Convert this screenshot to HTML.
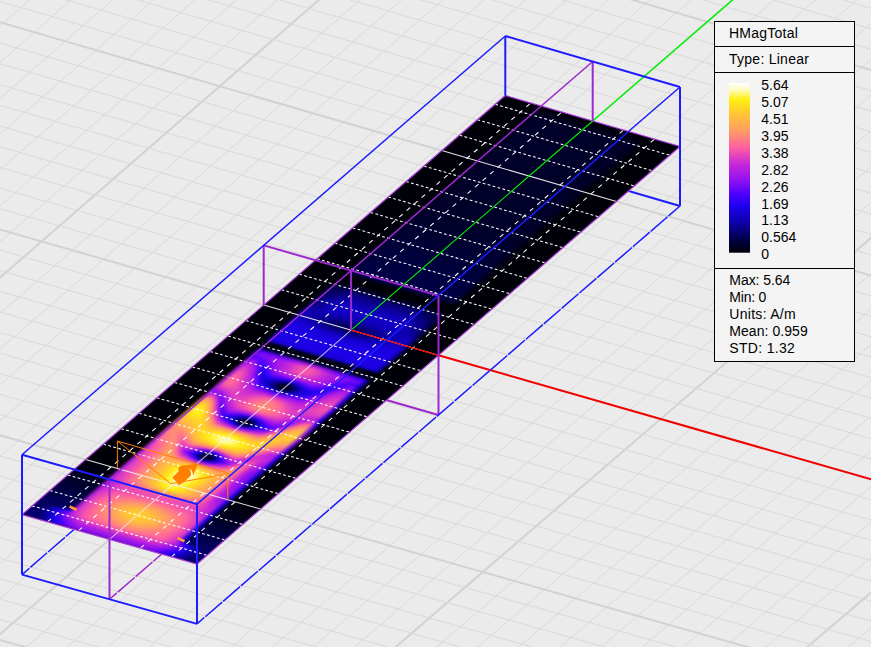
<!DOCTYPE html>
<html><head><meta charset="utf-8"><title>HMagTotal</title>
<style>
html,body{margin:0;padding:0;background:#ebebeb;}
body{width:871px;height:647px;overflow:hidden;font-family:"Liberation Sans",sans-serif;}
svg{display:block}
.t text{font-family:"Liberation Sans",sans-serif;font-size:14px;fill:#000;}
.gm{stroke:#d9d9d9;stroke-width:1}
.gM{stroke:#d2d2d2;stroke-width:2}
.bl{stroke:#1c1cff;stroke-width:2}
.pu{stroke:#9d28d0;stroke-width:2}
.tB{stroke-width:1.5}
.gr{stroke:#00f400;stroke-width:1.5}
.rd{stroke:#f40000;stroke-width:2}
.dx{stroke:#fff;stroke-width:1.05;stroke-dasharray:2.8 2.3}
.dy{stroke:#fff;stroke-width:1.05;stroke-dasharray:4.6 5.3}
.dM{stroke:#f0f0f0;stroke-width:1.05;opacity:.95}
</style></head><body>
<svg width="871" height="647" viewBox="0 0 871 647">
<defs>
<clipPath id="pc"><polygon points="22.0,514.7 197.0,564.0 680.0,146.5 505.3,95.5"/></clipPath>
<filter id="bl" x="-5%" y="-5%" width="110%" height="110%" color-interpolation-filters="sRGB"><feGaussianBlur stdDeviation="1.2"/></filter>
<linearGradient id="r0"><stop offset="0" stop-color="#06006c"/><stop offset="0.0682" stop-color="#06006c"/><stop offset="0.0909" stop-color="#060072"/><stop offset="0.114" stop-color="#0b0094"/><stop offset="0.136" stop-color="#0f00b9"/><stop offset="0.159" stop-color="#1700d5"/><stop offset="0.182" stop-color="#1f00ee"/><stop offset="0.205" stop-color="#3500f7"/><stop offset="0.227" stop-color="#4b00fd"/><stop offset="0.25" stop-color="#6505fa"/><stop offset="0.273" stop-color="#790af5"/><stop offset="0.295" stop-color="#880ef2"/><stop offset="0.318" stop-color="#8a0ff1"/><stop offset="0.341" stop-color="#8a0ff1"/><stop offset="0.364" stop-color="#8b0ff1"/><stop offset="0.432" stop-color="#8b0ff1"/><stop offset="0.455" stop-color="#8c0ff1"/><stop offset="0.568" stop-color="#8c0ff1"/><stop offset="0.591" stop-color="#8b0ff1"/><stop offset="0.659" stop-color="#8b0ff1"/><stop offset="0.682" stop-color="#8a0ff1"/><stop offset="0.705" stop-color="#8a0ff1"/><stop offset="0.727" stop-color="#840df3"/><stop offset="0.75" stop-color="#7309f7"/><stop offset="0.773" stop-color="#5c03fc"/><stop offset="0.795" stop-color="#4300fb"/><stop offset="0.818" stop-color="#2e00f4"/><stop offset="0.841" stop-color="#1d00e6"/><stop offset="0.864" stop-color="#1400cd"/><stop offset="0.886" stop-color="#0e00ad"/><stop offset="0.909" stop-color="#090088"/><stop offset="0.932" stop-color="#06006c"/><stop offset="1" stop-color="#06006c"/></linearGradient>
<linearGradient id="r1"><stop offset="0" stop-color="#05006b"/><stop offset="0.0682" stop-color="#05006b"/><stop offset="0.0909" stop-color="#08007f"/><stop offset="0.114" stop-color="#0d00a5"/><stop offset="0.136" stop-color="#1300ca"/><stop offset="0.159" stop-color="#1d00e7"/><stop offset="0.182" stop-color="#3500f6"/><stop offset="0.205" stop-color="#4e00ff"/><stop offset="0.227" stop-color="#6b07f9"/><stop offset="0.25" stop-color="#870ef2"/><stop offset="0.273" stop-color="#9813ed"/><stop offset="0.295" stop-color="#a218e8"/><stop offset="0.318" stop-color="#a419e7"/><stop offset="0.341" stop-color="#a419e7"/><stop offset="0.364" stop-color="#a519e7"/><stop offset="0.386" stop-color="#a519e7"/><stop offset="0.409" stop-color="#a619e7"/><stop offset="0.432" stop-color="#a61ae6"/><stop offset="0.455" stop-color="#a71ae6"/><stop offset="0.545" stop-color="#a71ae6"/><stop offset="0.568" stop-color="#a61ae6"/><stop offset="0.591" stop-color="#a619e7"/><stop offset="0.614" stop-color="#a619e7"/><stop offset="0.636" stop-color="#a519e7"/><stop offset="0.659" stop-color="#a519e7"/><stop offset="0.682" stop-color="#a419e7"/><stop offset="0.705" stop-color="#a418e8"/><stop offset="0.727" stop-color="#9f17e9"/><stop offset="0.75" stop-color="#9412ee"/><stop offset="0.773" stop-color="#7e0cf4"/><stop offset="0.795" stop-color="#6004fb"/><stop offset="0.818" stop-color="#4600fc"/><stop offset="0.841" stop-color="#2b00f3"/><stop offset="0.864" stop-color="#1a00dd"/><stop offset="0.886" stop-color="#1000c0"/><stop offset="0.909" stop-color="#0b0098"/><stop offset="0.932" stop-color="#060073"/><stop offset="0.955" stop-color="#05006b"/><stop offset="1" stop-color="#05006b"/></linearGradient>
<linearGradient id="r2"><stop offset="0" stop-color="#050069"/><stop offset="0.0455" stop-color="#050069"/><stop offset="0.0682" stop-color="#06006e"/><stop offset="0.0909" stop-color="#0a0093"/><stop offset="0.114" stop-color="#1000be"/><stop offset="0.136" stop-color="#1b00e0"/><stop offset="0.159" stop-color="#3400f6"/><stop offset="0.182" stop-color="#5802fd"/><stop offset="0.205" stop-color="#7c0bf5"/><stop offset="0.227" stop-color="#9813ed"/><stop offset="0.25" stop-color="#ad1ce4"/><stop offset="0.273" stop-color="#bb23dd"/><stop offset="0.295" stop-color="#c627d9"/><stop offset="0.318" stop-color="#c828d8"/><stop offset="0.341" stop-color="#c929d7"/><stop offset="0.364" stop-color="#ca2ad6"/><stop offset="0.386" stop-color="#cb2bd5"/><stop offset="0.409" stop-color="#cc2cd4"/><stop offset="0.432" stop-color="#cd2dd3"/><stop offset="0.455" stop-color="#ce2ed2"/><stop offset="0.477" stop-color="#ce2fd1"/><stop offset="0.5" stop-color="#cf2fd1"/><stop offset="0.523" stop-color="#cf2fd1"/><stop offset="0.545" stop-color="#ce2ed2"/><stop offset="0.568" stop-color="#ce2ed2"/><stop offset="0.591" stop-color="#cd2dd3"/><stop offset="0.614" stop-color="#cc2cd4"/><stop offset="0.636" stop-color="#cb2bd5"/><stop offset="0.659" stop-color="#ca2ad6"/><stop offset="0.682" stop-color="#c929d7"/><stop offset="0.705" stop-color="#c828d8"/><stop offset="0.727" stop-color="#c326da"/><stop offset="0.75" stop-color="#b721df"/><stop offset="0.773" stop-color="#a61ae6"/><stop offset="0.795" stop-color="#9010f0"/><stop offset="0.818" stop-color="#7008f7"/><stop offset="0.841" stop-color="#4b00fd"/><stop offset="0.864" stop-color="#2700f2"/><stop offset="0.886" stop-color="#1700d4"/><stop offset="0.909" stop-color="#0e00af"/><stop offset="0.932" stop-color="#090085"/><stop offset="0.955" stop-color="#050069"/><stop offset="1" stop-color="#050069"/></linearGradient>
<linearGradient id="r3"><stop offset="0" stop-color="#050066"/><stop offset="0.0455" stop-color="#050066"/><stop offset="0.0682" stop-color="#08007d"/><stop offset="0.0909" stop-color="#0d00a5"/><stop offset="0.114" stop-color="#1500cf"/><stop offset="0.136" stop-color="#2600f2"/><stop offset="0.159" stop-color="#5000ff"/><stop offset="0.182" stop-color="#7f0cf4"/><stop offset="0.205" stop-color="#a017e9"/><stop offset="0.227" stop-color="#b821df"/><stop offset="0.25" stop-color="#cf2fd1"/><stop offset="0.273" stop-color="#de3ec2"/><stop offset="0.295" stop-color="#e849b7"/><stop offset="0.318" stop-color="#ec4cb4"/><stop offset="0.341" stop-color="#ed4eb2"/><stop offset="0.364" stop-color="#f050b0"/><stop offset="0.386" stop-color="#f253ad"/><stop offset="0.409" stop-color="#f455ab"/><stop offset="0.432" stop-color="#f657a9"/><stop offset="0.455" stop-color="#f858a8"/><stop offset="0.477" stop-color="#f95aa6"/><stop offset="0.523" stop-color="#f95aa6"/><stop offset="0.545" stop-color="#f859a7"/><stop offset="0.568" stop-color="#f758a8"/><stop offset="0.591" stop-color="#f556aa"/><stop offset="0.614" stop-color="#f354ac"/><stop offset="0.636" stop-color="#f152ae"/><stop offset="0.659" stop-color="#ef50b0"/><stop offset="0.682" stop-color="#ed4db3"/><stop offset="0.705" stop-color="#eb4cb4"/><stop offset="0.727" stop-color="#e546ba"/><stop offset="0.75" stop-color="#d939c7"/><stop offset="0.773" stop-color="#c828d8"/><stop offset="0.795" stop-color="#b01ee2"/><stop offset="0.818" stop-color="#9713ed"/><stop offset="0.841" stop-color="#7008f8"/><stop offset="0.864" stop-color="#4200fb"/><stop offset="0.886" stop-color="#1d00e8"/><stop offset="0.909" stop-color="#1100c3"/><stop offset="0.932" stop-color="#0b0096"/><stop offset="0.955" stop-color="#060071"/><stop offset="0.977" stop-color="#050066"/><stop offset="1" stop-color="#050066"/></linearGradient>
<linearGradient id="r4"><stop offset="0" stop-color="#040062"/><stop offset="0.0455" stop-color="#040062"/><stop offset="0.0682" stop-color="#05006b"/><stop offset="0.0909" stop-color="#0a008f"/><stop offset="0.114" stop-color="#0f00b9"/><stop offset="0.136" stop-color="#1900dc"/><stop offset="0.159" stop-color="#2e00f4"/><stop offset="0.182" stop-color="#5000ff"/><stop offset="0.205" stop-color="#b21fe1"/><stop offset="0.227" stop-color="#cf2fd1"/><stop offset="0.25" stop-color="#e444bc"/><stop offset="0.273" stop-color="#f354ac"/><stop offset="0.295" stop-color="#ff60a0"/><stop offset="0.318" stop-color="#ff659b"/><stop offset="0.341" stop-color="#ff6997"/><stop offset="0.364" stop-color="#ff6d93"/><stop offset="0.386" stop-color="#ff718f"/><stop offset="0.409" stop-color="#ff758b"/><stop offset="0.432" stop-color="#ff7987"/><stop offset="0.455" stop-color="#ff7d83"/><stop offset="0.477" stop-color="#ff7f81"/><stop offset="0.5" stop-color="#ff8080"/><stop offset="0.523" stop-color="#ff8080"/><stop offset="0.545" stop-color="#ff7e82"/><stop offset="0.568" stop-color="#ff7c84"/><stop offset="0.591" stop-color="#ff7888"/><stop offset="0.614" stop-color="#ff748c"/><stop offset="0.636" stop-color="#ff7090"/><stop offset="0.659" stop-color="#ff6b95"/><stop offset="0.682" stop-color="#ff6799"/><stop offset="0.705" stop-color="#ff649c"/><stop offset="0.727" stop-color="#fc5da3"/><stop offset="0.75" stop-color="#ee4fb1"/><stop offset="0.773" stop-color="#dd3dc3"/><stop offset="0.795" stop-color="#c727d9"/><stop offset="0.818" stop-color="#9512ee"/><stop offset="0.841" stop-color="#4500fc"/><stop offset="0.864" stop-color="#2200f1"/><stop offset="0.886" stop-color="#1500d0"/><stop offset="0.909" stop-color="#0d00aa"/><stop offset="0.932" stop-color="#080082"/><stop offset="0.955" stop-color="#040062"/><stop offset="1" stop-color="#040062"/></linearGradient>
<linearGradient id="r5"><stop offset="0" stop-color="#04005d"/><stop offset="0.114" stop-color="#04005d"/><stop offset="0.136" stop-color="#050069"/><stop offset="0.159" stop-color="#080080"/><stop offset="0.182" stop-color="#0b0094"/><stop offset="0.205" stop-color="#b520e0"/><stop offset="0.227" stop-color="#d737c9"/><stop offset="0.25" stop-color="#e849b7"/><stop offset="0.273" stop-color="#f959a7"/><stop offset="0.295" stop-color="#ff6799"/><stop offset="0.318" stop-color="#ff6e92"/><stop offset="0.341" stop-color="#ff748c"/><stop offset="0.364" stop-color="#ff7b85"/><stop offset="0.386" stop-color="#ff827e"/><stop offset="0.409" stop-color="#ff8977"/><stop offset="0.432" stop-color="#ff8f71"/><stop offset="0.455" stop-color="#ff946c"/><stop offset="0.477" stop-color="#ff9868"/><stop offset="0.5" stop-color="#ff9967"/><stop offset="0.523" stop-color="#ff9967"/><stop offset="0.545" stop-color="#ff9769"/><stop offset="0.568" stop-color="#ff926e"/><stop offset="0.591" stop-color="#ff8d73"/><stop offset="0.614" stop-color="#ff867a"/><stop offset="0.636" stop-color="#ff7f81"/><stop offset="0.659" stop-color="#ff7888"/><stop offset="0.682" stop-color="#ff728e"/><stop offset="0.705" stop-color="#ff6c94"/><stop offset="0.727" stop-color="#ff639d"/><stop offset="0.75" stop-color="#f354ac"/><stop offset="0.773" stop-color="#e243bd"/><stop offset="0.795" stop-color="#d132ce"/><stop offset="0.818" stop-color="#5601fe"/><stop offset="0.841" stop-color="#0a008d"/><stop offset="0.864" stop-color="#070078"/><stop offset="0.886" stop-color="#040061"/><stop offset="0.909" stop-color="#04005d"/><stop offset="1" stop-color="#04005d"/></linearGradient>
<linearGradient id="r6"><stop offset="0" stop-color="#030058"/><stop offset="0.159" stop-color="#030058"/><stop offset="0.182" stop-color="#02004d"/><stop offset="0.205" stop-color="#b721df"/><stop offset="0.227" stop-color="#dd3dc3"/><stop offset="0.25" stop-color="#ec4cb4"/><stop offset="0.273" stop-color="#fd5ea2"/><stop offset="0.295" stop-color="#ff6e92"/><stop offset="0.318" stop-color="#ff7789"/><stop offset="0.341" stop-color="#ff8080"/><stop offset="0.364" stop-color="#ff8977"/><stop offset="0.386" stop-color="#ff936d"/><stop offset="0.409" stop-color="#ff9d63"/><stop offset="0.432" stop-color="#ffa45b"/><stop offset="0.455" stop-color="#ffa955"/><stop offset="0.477" stop-color="#ffad51"/><stop offset="0.5" stop-color="#ffae4f"/><stop offset="0.523" stop-color="#ffae4f"/><stop offset="0.545" stop-color="#ffac52"/><stop offset="0.568" stop-color="#ffa857"/><stop offset="0.591" stop-color="#ffa25d"/><stop offset="0.614" stop-color="#ff9a66"/><stop offset="0.636" stop-color="#ff9070"/><stop offset="0.659" stop-color="#ff867a"/><stop offset="0.682" stop-color="#ff7d83"/><stop offset="0.705" stop-color="#ff748c"/><stop offset="0.727" stop-color="#ff6997"/><stop offset="0.75" stop-color="#f758a8"/><stop offset="0.773" stop-color="#e646ba"/><stop offset="0.795" stop-color="#d93ac6"/><stop offset="0.818" stop-color="#2b00f3"/><stop offset="0.841" stop-color="#030058"/><stop offset="1" stop-color="#030058"/></linearGradient>
<linearGradient id="r7"><stop offset="0" stop-color="#020052"/><stop offset="0.159" stop-color="#020052"/><stop offset="0.182" stop-color="#010048"/><stop offset="0.205" stop-color="#b821df"/><stop offset="0.227" stop-color="#df3fc1"/><stop offset="0.25" stop-color="#ee4fb1"/><stop offset="0.273" stop-color="#ff629e"/><stop offset="0.295" stop-color="#ff748c"/><stop offset="0.318" stop-color="#ff7f81"/><stop offset="0.341" stop-color="#ff8a76"/><stop offset="0.364" stop-color="#ff9769"/><stop offset="0.386" stop-color="#ffa25d"/><stop offset="0.409" stop-color="#ffab53"/><stop offset="0.432" stop-color="#ffb349"/><stop offset="0.455" stop-color="#ffb941"/><stop offset="0.477" stop-color="#ffbe3c"/><stop offset="0.5" stop-color="#ffc039"/><stop offset="0.523" stop-color="#ffc03a"/><stop offset="0.545" stop-color="#ffbd3e"/><stop offset="0.568" stop-color="#ffb744"/><stop offset="0.591" stop-color="#ffb04c"/><stop offset="0.614" stop-color="#ffa856"/><stop offset="0.636" stop-color="#ff9f61"/><stop offset="0.659" stop-color="#ff926e"/><stop offset="0.682" stop-color="#ff867a"/><stop offset="0.705" stop-color="#ff7c84"/><stop offset="0.727" stop-color="#ff6f91"/><stop offset="0.75" stop-color="#fb5ca4"/><stop offset="0.773" stop-color="#e949b7"/><stop offset="0.795" stop-color="#db3cc4"/><stop offset="0.818" stop-color="#2800f3"/><stop offset="0.841" stop-color="#020052"/><stop offset="1" stop-color="#020052"/></linearGradient>
<linearGradient id="r8"><stop offset="0" stop-color="#01004c"/><stop offset="0.159" stop-color="#01004c"/><stop offset="0.182" stop-color="#000042"/><stop offset="0.205" stop-color="#b921df"/><stop offset="0.227" stop-color="#e041bf"/><stop offset="0.25" stop-color="#f051af"/><stop offset="0.273" stop-color="#ff659b"/><stop offset="0.295" stop-color="#ff7888"/><stop offset="0.318" stop-color="#ff857b"/><stop offset="0.341" stop-color="#ff926e"/><stop offset="0.364" stop-color="#ffa060"/><stop offset="0.386" stop-color="#ffaa54"/><stop offset="0.409" stop-color="#ffb448"/><stop offset="0.432" stop-color="#ffbd3e"/><stop offset="0.455" stop-color="#ffc435"/><stop offset="0.477" stop-color="#ffca2f"/><stop offset="0.5" stop-color="#ffcd2c"/><stop offset="0.523" stop-color="#ffcc2d"/><stop offset="0.545" stop-color="#ffc830"/><stop offset="0.568" stop-color="#ffc237"/><stop offset="0.591" stop-color="#ffba41"/><stop offset="0.614" stop-color="#ffb04c"/><stop offset="0.636" stop-color="#ffa658"/><stop offset="0.659" stop-color="#ff9b65"/><stop offset="0.682" stop-color="#ff8d73"/><stop offset="0.705" stop-color="#ff817f"/><stop offset="0.727" stop-color="#ff728e"/><stop offset="0.75" stop-color="#fd5ea2"/><stop offset="0.773" stop-color="#ea4bb5"/><stop offset="0.795" stop-color="#dd3dc3"/><stop offset="0.818" stop-color="#2900f3"/><stop offset="0.841" stop-color="#01004c"/><stop offset="1" stop-color="#01004c"/></linearGradient>
<linearGradient id="r9"><stop offset="0" stop-color="#010045"/><stop offset="0.159" stop-color="#010045"/><stop offset="0.182" stop-color="#00003d"/><stop offset="0.205" stop-color="#b922de"/><stop offset="0.227" stop-color="#e141bf"/><stop offset="0.25" stop-color="#f151af"/><stop offset="0.273" stop-color="#ff669a"/><stop offset="0.295" stop-color="#ff7987"/><stop offset="0.318" stop-color="#ff867a"/><stop offset="0.341" stop-color="#ff936d"/><stop offset="0.364" stop-color="#ffa15f"/><stop offset="0.386" stop-color="#ffab53"/><stop offset="0.409" stop-color="#ffb547"/><stop offset="0.432" stop-color="#ffbe3c"/><stop offset="0.455" stop-color="#ffc632"/><stop offset="0.477" stop-color="#ffcc2d"/><stop offset="0.5" stop-color="#ffcf2a"/><stop offset="0.523" stop-color="#ffcf2b"/><stop offset="0.545" stop-color="#ffca2e"/><stop offset="0.568" stop-color="#ffc435"/><stop offset="0.591" stop-color="#ffbb3f"/><stop offset="0.614" stop-color="#ffb24b"/><stop offset="0.636" stop-color="#ffa857"/><stop offset="0.659" stop-color="#ff9c64"/><stop offset="0.682" stop-color="#ff8e72"/><stop offset="0.705" stop-color="#ff827e"/><stop offset="0.727" stop-color="#ff738d"/><stop offset="0.75" stop-color="#fe5fa1"/><stop offset="0.773" stop-color="#eb4bb5"/><stop offset="0.795" stop-color="#dd3dc3"/><stop offset="0.818" stop-color="#2900f3"/><stop offset="0.841" stop-color="#010045"/><stop offset="1" stop-color="#010045"/></linearGradient>
<linearGradient id="r10"><stop offset="0" stop-color="#00003f"/><stop offset="0.159" stop-color="#00003f"/><stop offset="0.182" stop-color="#000038"/><stop offset="0.205" stop-color="#b821df"/><stop offset="0.227" stop-color="#e040c0"/><stop offset="0.25" stop-color="#ef50b0"/><stop offset="0.273" stop-color="#ff649c"/><stop offset="0.295" stop-color="#ff768a"/><stop offset="0.318" stop-color="#ff827e"/><stop offset="0.341" stop-color="#ff8e72"/><stop offset="0.364" stop-color="#ff9b65"/><stop offset="0.386" stop-color="#ffa659"/><stop offset="0.409" stop-color="#ffaf4e"/><stop offset="0.432" stop-color="#ffb844"/><stop offset="0.455" stop-color="#ffbf3b"/><stop offset="0.477" stop-color="#ffc336"/><stop offset="0.5" stop-color="#ffc633"/><stop offset="0.523" stop-color="#ffc533"/><stop offset="0.545" stop-color="#ffc237"/><stop offset="0.568" stop-color="#ffbc3e"/><stop offset="0.591" stop-color="#ffb547"/><stop offset="0.614" stop-color="#ffac52"/><stop offset="0.636" stop-color="#ffa35d"/><stop offset="0.659" stop-color="#ff966a"/><stop offset="0.682" stop-color="#ff8a76"/><stop offset="0.705" stop-color="#ff7e82"/><stop offset="0.727" stop-color="#ff7090"/><stop offset="0.75" stop-color="#fc5da3"/><stop offset="0.773" stop-color="#e94ab6"/><stop offset="0.795" stop-color="#dc3cc4"/><stop offset="0.818" stop-color="#2800f3"/><stop offset="0.841" stop-color="#00003f"/><stop offset="1" stop-color="#00003f"/></linearGradient>
<linearGradient id="r11"><stop offset="0" stop-color="#000039"/><stop offset="0.159" stop-color="#000039"/><stop offset="0.182" stop-color="#000033"/><stop offset="0.205" stop-color="#b721df"/><stop offset="0.227" stop-color="#dd3ec2"/><stop offset="0.25" stop-color="#ec4db3"/><stop offset="0.273" stop-color="#fe5fa1"/><stop offset="0.295" stop-color="#ff7090"/><stop offset="0.318" stop-color="#ff7a86"/><stop offset="0.341" stop-color="#ff847c"/><stop offset="0.364" stop-color="#ff8e72"/><stop offset="0.386" stop-color="#ff9a66"/><stop offset="0.409" stop-color="#ffa35c"/><stop offset="0.432" stop-color="#ffaa54"/><stop offset="0.455" stop-color="#ffb04d"/><stop offset="0.477" stop-color="#ffb448"/><stop offset="0.5" stop-color="#ffb646"/><stop offset="0.523" stop-color="#ffb547"/><stop offset="0.545" stop-color="#ffb34a"/><stop offset="0.568" stop-color="#ffae4f"/><stop offset="0.591" stop-color="#ffa857"/><stop offset="0.614" stop-color="#ffa15f"/><stop offset="0.636" stop-color="#ff966a"/><stop offset="0.659" stop-color="#ff8b75"/><stop offset="0.682" stop-color="#ff8080"/><stop offset="0.705" stop-color="#ff7789"/><stop offset="0.727" stop-color="#ff6b95"/><stop offset="0.75" stop-color="#f859a7"/><stop offset="0.773" stop-color="#e747b9"/><stop offset="0.795" stop-color="#da3ac6"/><stop offset="0.818" stop-color="#2700f2"/><stop offset="0.841" stop-color="#000039"/><stop offset="1" stop-color="#000039"/></linearGradient>
<linearGradient id="r12"><stop offset="0" stop-color="#000033"/><stop offset="0.159" stop-color="#000033"/><stop offset="0.182" stop-color="#00002e"/><stop offset="0.205" stop-color="#b420e0"/><stop offset="0.227" stop-color="#da3ac6"/><stop offset="0.25" stop-color="#e848b8"/><stop offset="0.273" stop-color="#f859a7"/><stop offset="0.295" stop-color="#ff6898"/><stop offset="0.318" stop-color="#ff6f91"/><stop offset="0.341" stop-color="#ff768a"/><stop offset="0.364" stop-color="#ff7e82"/><stop offset="0.386" stop-color="#ff867a"/><stop offset="0.409" stop-color="#ff8e72"/><stop offset="0.432" stop-color="#ff966a"/><stop offset="0.455" stop-color="#ff9c64"/><stop offset="0.477" stop-color="#ffa060"/><stop offset="0.5" stop-color="#ffa15e"/><stop offset="0.523" stop-color="#ffa15f"/><stop offset="0.545" stop-color="#ff9f61"/><stop offset="0.568" stop-color="#ff9a66"/><stop offset="0.591" stop-color="#ff936d"/><stop offset="0.614" stop-color="#ff8c74"/><stop offset="0.636" stop-color="#ff847c"/><stop offset="0.659" stop-color="#ff7c84"/><stop offset="0.682" stop-color="#ff748c"/><stop offset="0.705" stop-color="#ff6d93"/><stop offset="0.727" stop-color="#ff639d"/><stop offset="0.75" stop-color="#f353ad"/><stop offset="0.773" stop-color="#e243bd"/><stop offset="0.795" stop-color="#d737c9"/><stop offset="0.818" stop-color="#2500f2"/><stop offset="0.841" stop-color="#000033"/><stop offset="1" stop-color="#000033"/></linearGradient>
<linearGradient id="r13"><stop offset="0" stop-color="#00002d"/><stop offset="0.159" stop-color="#00002d"/><stop offset="0.182" stop-color="#000029"/><stop offset="0.205" stop-color="#af1de3"/><stop offset="0.227" stop-color="#d333cd"/><stop offset="0.25" stop-color="#e041bf"/><stop offset="0.273" stop-color="#f050b0"/><stop offset="0.295" stop-color="#fc5da3"/><stop offset="0.318" stop-color="#ff629e"/><stop offset="0.341" stop-color="#ff6799"/><stop offset="0.364" stop-color="#ff6c94"/><stop offset="0.386" stop-color="#ff718f"/><stop offset="0.409" stop-color="#ff768a"/><stop offset="0.432" stop-color="#ff7b85"/><stop offset="0.455" stop-color="#ff7f81"/><stop offset="0.477" stop-color="#ff827e"/><stop offset="0.5" stop-color="#ff837d"/><stop offset="0.523" stop-color="#ff837d"/><stop offset="0.545" stop-color="#ff817f"/><stop offset="0.568" stop-color="#ff7e82"/><stop offset="0.591" stop-color="#ff7a86"/><stop offset="0.614" stop-color="#ff758b"/><stop offset="0.636" stop-color="#ff6f91"/><stop offset="0.659" stop-color="#ff6a96"/><stop offset="0.682" stop-color="#ff659b"/><stop offset="0.705" stop-color="#ff619f"/><stop offset="0.727" stop-color="#f859a7"/><stop offset="0.75" stop-color="#ea4bb5"/><stop offset="0.773" stop-color="#db3cc4"/><stop offset="0.795" stop-color="#d030d0"/><stop offset="0.818" stop-color="#2200f1"/><stop offset="0.841" stop-color="#00002d"/><stop offset="1" stop-color="#00002d"/></linearGradient>
<linearGradient id="r14"><stop offset="0" stop-color="#000028"/><stop offset="0.159" stop-color="#000028"/><stop offset="0.182" stop-color="#000024"/><stop offset="0.205" stop-color="#a71ae6"/><stop offset="0.227" stop-color="#ca2ad6"/><stop offset="0.25" stop-color="#d636ca"/><stop offset="0.273" stop-color="#e445bb"/><stop offset="0.295" stop-color="#f050b0"/><stop offset="0.318" stop-color="#f354ac"/><stop offset="0.341" stop-color="#f656aa"/><stop offset="0.364" stop-color="#f859a7"/><stop offset="0.386" stop-color="#fb5ca4"/><stop offset="0.409" stop-color="#fe5fa1"/><stop offset="0.432" stop-color="#ff629e"/><stop offset="0.455" stop-color="#ff649c"/><stop offset="0.477" stop-color="#ff669a"/><stop offset="0.523" stop-color="#ff669a"/><stop offset="0.545" stop-color="#ff659b"/><stop offset="0.568" stop-color="#ff639d"/><stop offset="0.591" stop-color="#ff619f"/><stop offset="0.614" stop-color="#fd5ea2"/><stop offset="0.636" stop-color="#fa5ba5"/><stop offset="0.659" stop-color="#f758a8"/><stop offset="0.682" stop-color="#f556aa"/><stop offset="0.705" stop-color="#f253ad"/><stop offset="0.727" stop-color="#ec4db3"/><stop offset="0.75" stop-color="#e040c0"/><stop offset="0.773" stop-color="#d131cf"/><stop offset="0.795" stop-color="#c728d8"/><stop offset="0.818" stop-color="#1f00ec"/><stop offset="0.841" stop-color="#000028"/><stop offset="1" stop-color="#000028"/></linearGradient>
<linearGradient id="r15"><stop offset="0" stop-color="#000022"/><stop offset="0.159" stop-color="#000022"/><stop offset="0.182" stop-color="#00001f"/><stop offset="0.205" stop-color="#a017e9"/><stop offset="0.227" stop-color="#c225db"/><stop offset="0.25" stop-color="#ce2ed2"/><stop offset="0.273" stop-color="#db3cc4"/><stop offset="0.295" stop-color="#e646ba"/><stop offset="0.318" stop-color="#e849b7"/><stop offset="0.341" stop-color="#ea4ab6"/><stop offset="0.364" stop-color="#eb4cb4"/><stop offset="0.386" stop-color="#ec4db3"/><stop offset="0.409" stop-color="#ee4fb1"/><stop offset="0.432" stop-color="#ef50b0"/><stop offset="0.455" stop-color="#f051af"/><stop offset="0.477" stop-color="#f152ae"/><stop offset="0.545" stop-color="#f152ae"/><stop offset="0.568" stop-color="#f051af"/><stop offset="0.591" stop-color="#ef4fb1"/><stop offset="0.614" stop-color="#ed4eb2"/><stop offset="0.636" stop-color="#ec4db3"/><stop offset="0.659" stop-color="#ea4bb5"/><stop offset="0.682" stop-color="#e94ab6"/><stop offset="0.705" stop-color="#e848b8"/><stop offset="0.727" stop-color="#e343bd"/><stop offset="0.75" stop-color="#d737c9"/><stop offset="0.773" stop-color="#c929d7"/><stop offset="0.795" stop-color="#bf24dc"/><stop offset="0.818" stop-color="#1d00e8"/><stop offset="0.841" stop-color="#000022"/><stop offset="1" stop-color="#000022"/></linearGradient>
<linearGradient id="r16"><stop offset="0" stop-color="#00001d"/><stop offset="0.159" stop-color="#00001d"/><stop offset="0.182" stop-color="#00001b"/><stop offset="0.205" stop-color="#a117e9"/><stop offset="0.227" stop-color="#c225db"/><stop offset="0.25" stop-color="#ce2ed2"/><stop offset="0.273" stop-color="#db3bc5"/><stop offset="0.295" stop-color="#e546ba"/><stop offset="0.318" stop-color="#e849b7"/><stop offset="0.341" stop-color="#e94ab6"/><stop offset="0.364" stop-color="#eb4bb5"/><stop offset="0.386" stop-color="#ec4db3"/><stop offset="0.409" stop-color="#ed4eb2"/><stop offset="0.432" stop-color="#ef4fb1"/><stop offset="0.455" stop-color="#f051af"/><stop offset="0.477" stop-color="#f151af"/><stop offset="0.5" stop-color="#f152ae"/><stop offset="0.523" stop-color="#f152ae"/><stop offset="0.545" stop-color="#f051af"/><stop offset="0.568" stop-color="#ef50b0"/><stop offset="0.591" stop-color="#ee4fb1"/><stop offset="0.614" stop-color="#ed4eb2"/><stop offset="0.636" stop-color="#ec4cb4"/><stop offset="0.659" stop-color="#ea4bb5"/><stop offset="0.682" stop-color="#e949b7"/><stop offset="0.705" stop-color="#e748b8"/><stop offset="0.727" stop-color="#e242be"/><stop offset="0.75" stop-color="#d535cb"/><stop offset="0.773" stop-color="#c728d8"/><stop offset="0.795" stop-color="#bd23dd"/><stop offset="0.818" stop-color="#1d00e7"/><stop offset="0.841" stop-color="#00001d"/><stop offset="1" stop-color="#00001d"/></linearGradient>
<linearGradient id="r17"><stop offset="0" stop-color="#000019"/><stop offset="0.159" stop-color="#000019"/><stop offset="0.182" stop-color="#000017"/><stop offset="0.205" stop-color="#ad1ce4"/><stop offset="0.227" stop-color="#cd2dd3"/><stop offset="0.25" stop-color="#d838c8"/><stop offset="0.273" stop-color="#e747b9"/><stop offset="0.295" stop-color="#f455ab"/><stop offset="0.318" stop-color="#fb5ca4"/><stop offset="0.341" stop-color="#ff619f"/><stop offset="0.364" stop-color="#ff6799"/><stop offset="0.386" stop-color="#ff6d93"/><stop offset="0.409" stop-color="#ff738d"/><stop offset="0.432" stop-color="#ff7987"/><stop offset="0.455" stop-color="#ff7f81"/><stop offset="0.477" stop-color="#ff847c"/><stop offset="0.5" stop-color="#ff867a"/><stop offset="0.523" stop-color="#ff857b"/><stop offset="0.545" stop-color="#ff827e"/><stop offset="0.568" stop-color="#ff7d83"/><stop offset="0.591" stop-color="#ff7789"/><stop offset="0.614" stop-color="#ff718f"/><stop offset="0.636" stop-color="#ff6b95"/><stop offset="0.659" stop-color="#ff649c"/><stop offset="0.682" stop-color="#fc5da3"/><stop offset="0.705" stop-color="#f455ab"/><stop offset="0.727" stop-color="#e748b8"/><stop offset="0.75" stop-color="#d535cb"/><stop offset="0.773" stop-color="#c326da"/><stop offset="0.795" stop-color="#b922de"/><stop offset="0.818" stop-color="#1d00e7"/><stop offset="0.841" stop-color="#000019"/><stop offset="1" stop-color="#000019"/></linearGradient>
<linearGradient id="r18"><stop offset="0" stop-color="#000014"/><stop offset="0.159" stop-color="#000014"/><stop offset="0.182" stop-color="#000013"/><stop offset="0.205" stop-color="#b821df"/><stop offset="0.227" stop-color="#d737c9"/><stop offset="0.25" stop-color="#e141bf"/><stop offset="0.273" stop-color="#f253ad"/><stop offset="0.295" stop-color="#ff659b"/><stop offset="0.318" stop-color="#ff738d"/><stop offset="0.341" stop-color="#ff7f81"/><stop offset="0.364" stop-color="#ff8b75"/><stop offset="0.386" stop-color="#ff9868"/><stop offset="0.409" stop-color="#ffa45b"/><stop offset="0.432" stop-color="#ffad50"/><stop offset="0.455" stop-color="#ffb646"/><stop offset="0.477" stop-color="#ffbd3d"/><stop offset="0.5" stop-color="#ffc039"/><stop offset="0.523" stop-color="#ffbf3a"/><stop offset="0.545" stop-color="#ffbb40"/><stop offset="0.568" stop-color="#ffb349"/><stop offset="0.591" stop-color="#ffaa54"/><stop offset="0.614" stop-color="#ffa15f"/><stop offset="0.636" stop-color="#ff936d"/><stop offset="0.659" stop-color="#ff867a"/><stop offset="0.682" stop-color="#ff768a"/><stop offset="0.705" stop-color="#ff639d"/><stop offset="0.727" stop-color="#ea4bb5"/><stop offset="0.75" stop-color="#ce2ed2"/><stop offset="0.773" stop-color="#b620e0"/><stop offset="0.795" stop-color="#ad1ce4"/><stop offset="0.818" stop-color="#1c00e4"/><stop offset="0.841" stop-color="#000014"/><stop offset="1" stop-color="#000014"/></linearGradient>
<linearGradient id="r19"><stop offset="0" stop-color="#000010"/><stop offset="0.159" stop-color="#000010"/><stop offset="0.182" stop-color="#00000f"/><stop offset="0.205" stop-color="#be24dc"/><stop offset="0.227" stop-color="#dc3cc4"/><stop offset="0.25" stop-color="#e646ba"/><stop offset="0.273" stop-color="#f859a7"/><stop offset="0.295" stop-color="#ff6f91"/><stop offset="0.318" stop-color="#ff837d"/><stop offset="0.341" stop-color="#ff956b"/><stop offset="0.364" stop-color="#ffa45b"/><stop offset="0.386" stop-color="#ffb14c"/><stop offset="0.409" stop-color="#ffbe3c"/><stop offset="0.432" stop-color="#ffcc2c"/><stop offset="0.455" stop-color="#ffdc20"/><stop offset="0.477" stop-color="#ffe916"/><stop offset="0.5" stop-color="#ffef11"/><stop offset="0.523" stop-color="#ffed12"/><stop offset="0.545" stop-color="#ffe519"/><stop offset="0.568" stop-color="#ffd724"/><stop offset="0.591" stop-color="#ffc731"/><stop offset="0.614" stop-color="#ffb942"/><stop offset="0.636" stop-color="#ffac52"/><stop offset="0.659" stop-color="#ff9d63"/><stop offset="0.682" stop-color="#ff8878"/><stop offset="0.705" stop-color="#ff6c94"/><stop offset="0.727" stop-color="#e94ab6"/><stop offset="0.75" stop-color="#c527d9"/><stop offset="0.773" stop-color="#a71ae6"/><stop offset="0.795" stop-color="#9e16ea"/><stop offset="0.818" stop-color="#1a00de"/><stop offset="0.841" stop-color="#000010"/><stop offset="1" stop-color="#000010"/></linearGradient>
<linearGradient id="r20"><stop offset="0" stop-color="#00000d"/><stop offset="0.182" stop-color="#00000d"/><stop offset="0.205" stop-color="#c125db"/><stop offset="0.227" stop-color="#de3fc1"/><stop offset="0.25" stop-color="#e849b7"/><stop offset="0.273" stop-color="#fb5ca4"/><stop offset="0.295" stop-color="#ff738d"/><stop offset="0.318" stop-color="#ff8878"/><stop offset="0.341" stop-color="#ff9b65"/><stop offset="0.364" stop-color="#ffa955"/><stop offset="0.386" stop-color="#ffb745"/><stop offset="0.409" stop-color="#ffc533"/><stop offset="0.432" stop-color="#ffd724"/><stop offset="0.455" stop-color="#ffe916"/><stop offset="0.477" stop-color="#fff234"/><stop offset="0.5" stop-color="#fff55d"/><stop offset="0.523" stop-color="#fff454"/><stop offset="0.545" stop-color="#fff11d"/><stop offset="0.568" stop-color="#ffe31a"/><stop offset="0.591" stop-color="#ffd129"/><stop offset="0.614" stop-color="#ffc039"/><stop offset="0.636" stop-color="#ffb24b"/><stop offset="0.659" stop-color="#ffa35c"/><stop offset="0.682" stop-color="#ff8d73"/><stop offset="0.705" stop-color="#ff6f91"/><stop offset="0.727" stop-color="#e94ab6"/><stop offset="0.75" stop-color="#c226da"/><stop offset="0.773" stop-color="#a318e8"/><stop offset="0.795" stop-color="#9914ec"/><stop offset="0.818" stop-color="#1900dc"/><stop offset="0.841" stop-color="#00000d"/><stop offset="1" stop-color="#00000d"/></linearGradient>
<linearGradient id="r21"><stop offset="0" stop-color="#00000b"/><stop offset="0.159" stop-color="#00000b"/><stop offset="0.182" stop-color="#00000a"/><stop offset="0.205" stop-color="#c326da"/><stop offset="0.227" stop-color="#e041bf"/><stop offset="0.25" stop-color="#ea4bb5"/><stop offset="0.273" stop-color="#fe5fa1"/><stop offset="0.295" stop-color="#ff768a"/><stop offset="0.318" stop-color="#ff8b75"/><stop offset="0.341" stop-color="#ff9e62"/><stop offset="0.364" stop-color="#ffac52"/><stop offset="0.386" stop-color="#ffba41"/><stop offset="0.409" stop-color="#ffc92f"/><stop offset="0.432" stop-color="#ffdd1f"/><stop offset="0.455" stop-color="#ffef11"/><stop offset="0.477" stop-color="#fff55e"/><stop offset="0.5" stop-color="#fff889"/><stop offset="0.523" stop-color="#fff780"/><stop offset="0.545" stop-color="#fff346"/><stop offset="0.568" stop-color="#ffe915"/><stop offset="0.591" stop-color="#ffd625"/><stop offset="0.614" stop-color="#ffc435"/><stop offset="0.636" stop-color="#ffb547"/><stop offset="0.659" stop-color="#ffa559"/><stop offset="0.682" stop-color="#ff9070"/><stop offset="0.705" stop-color="#ff718f"/><stop offset="0.727" stop-color="#ea4bb5"/><stop offset="0.75" stop-color="#c225db"/><stop offset="0.773" stop-color="#a218e8"/><stop offset="0.795" stop-color="#9713ed"/><stop offset="0.818" stop-color="#1900db"/><stop offset="0.841" stop-color="#00000b"/><stop offset="1" stop-color="#00000b"/></linearGradient>
<linearGradient id="r22"><stop offset="0" stop-color="#000009"/><stop offset="0.182" stop-color="#000009"/><stop offset="0.205" stop-color="#c527d9"/><stop offset="0.227" stop-color="#e343bd"/><stop offset="0.25" stop-color="#ec4db3"/><stop offset="0.273" stop-color="#ff619f"/><stop offset="0.295" stop-color="#ff7987"/><stop offset="0.318" stop-color="#ff8e72"/><stop offset="0.341" stop-color="#ffa15e"/><stop offset="0.364" stop-color="#ffaf4e"/><stop offset="0.386" stop-color="#ffbd3d"/><stop offset="0.409" stop-color="#ffce2b"/><stop offset="0.432" stop-color="#ffe21b"/><stop offset="0.455" stop-color="#fff231"/><stop offset="0.477" stop-color="#fff889"/><stop offset="0.5" stop-color="#fffab4"/><stop offset="0.523" stop-color="#fffaab"/><stop offset="0.545" stop-color="#fff66f"/><stop offset="0.568" stop-color="#ffef11"/><stop offset="0.591" stop-color="#ffdc20"/><stop offset="0.614" stop-color="#ffc731"/><stop offset="0.636" stop-color="#ffb843"/><stop offset="0.659" stop-color="#ffa856"/><stop offset="0.682" stop-color="#ff936d"/><stop offset="0.705" stop-color="#ff738d"/><stop offset="0.727" stop-color="#eb4bb5"/><stop offset="0.75" stop-color="#c125db"/><stop offset="0.773" stop-color="#a017e9"/><stop offset="0.795" stop-color="#9512ee"/><stop offset="0.818" stop-color="#1900da"/><stop offset="0.841" stop-color="#000009"/><stop offset="1" stop-color="#000009"/></linearGradient>
<linearGradient id="r23"><stop offset="0" stop-color="#000008"/><stop offset="0.182" stop-color="#000008"/><stop offset="0.205" stop-color="#c727d9"/><stop offset="0.227" stop-color="#e545bb"/><stop offset="0.25" stop-color="#ef4fb1"/><stop offset="0.273" stop-color="#ff649c"/><stop offset="0.295" stop-color="#ff7c84"/><stop offset="0.318" stop-color="#ff926e"/><stop offset="0.341" stop-color="#ffa45c"/><stop offset="0.364" stop-color="#ffb24b"/><stop offset="0.386" stop-color="#ffc139"/><stop offset="0.409" stop-color="#ffd327"/><stop offset="0.432" stop-color="#ffe816"/><stop offset="0.455" stop-color="#fff457"/><stop offset="0.477" stop-color="#fffab2"/><stop offset="0.5" stop-color="#fffcd0"/><stop offset="0.523" stop-color="#fffccb"/><stop offset="0.545" stop-color="#fff897"/><stop offset="0.568" stop-color="#fff230"/><stop offset="0.591" stop-color="#ffe11c"/><stop offset="0.614" stop-color="#ffcc2d"/><stop offset="0.636" stop-color="#ffbb40"/><stop offset="0.659" stop-color="#ffab53"/><stop offset="0.682" stop-color="#ff966a"/><stop offset="0.705" stop-color="#ff758b"/><stop offset="0.727" stop-color="#ec4cb4"/><stop offset="0.75" stop-color="#c125db"/><stop offset="0.773" stop-color="#9e16ea"/><stop offset="0.795" stop-color="#9311ef"/><stop offset="0.818" stop-color="#1800d9"/><stop offset="0.841" stop-color="#000008"/><stop offset="1" stop-color="#000008"/></linearGradient>
<linearGradient id="r24"><stop offset="0" stop-color="#000008"/><stop offset="0.182" stop-color="#000008"/><stop offset="0.205" stop-color="#c929d7"/><stop offset="0.227" stop-color="#e747b9"/><stop offset="0.25" stop-color="#f152ae"/><stop offset="0.273" stop-color="#ff669a"/><stop offset="0.295" stop-color="#ff7e82"/><stop offset="0.318" stop-color="#ff956b"/><stop offset="0.341" stop-color="#ffa659"/><stop offset="0.364" stop-color="#ffb448"/><stop offset="0.386" stop-color="#ffc435"/><stop offset="0.409" stop-color="#ffd724"/><stop offset="0.432" stop-color="#ffed12"/><stop offset="0.455" stop-color="#fff77a"/><stop offset="0.477" stop-color="#fffccd"/><stop offset="0.5" stop-color="#fffde5"/><stop offset="0.523" stop-color="#fffde0"/><stop offset="0.545" stop-color="#fffbbd"/><stop offset="0.568" stop-color="#fff453"/><stop offset="0.591" stop-color="#ffe618"/><stop offset="0.614" stop-color="#ffd02a"/><stop offset="0.636" stop-color="#ffbe3c"/><stop offset="0.659" stop-color="#ffad50"/><stop offset="0.682" stop-color="#ff9967"/><stop offset="0.705" stop-color="#ff7789"/><stop offset="0.727" stop-color="#ec4db3"/><stop offset="0.75" stop-color="#c025db"/><stop offset="0.773" stop-color="#9c15eb"/><stop offset="0.795" stop-color="#9110f0"/><stop offset="0.818" stop-color="#1800d8"/><stop offset="0.841" stop-color="#000008"/><stop offset="1" stop-color="#000008"/></linearGradient>
<linearGradient id="r25"><stop offset="0" stop-color="#000008"/><stop offset="0.182" stop-color="#000008"/><stop offset="0.205" stop-color="#cb2bd5"/><stop offset="0.227" stop-color="#e94ab6"/><stop offset="0.25" stop-color="#f354ac"/><stop offset="0.273" stop-color="#ff6997"/><stop offset="0.295" stop-color="#ff817f"/><stop offset="0.318" stop-color="#ff9868"/><stop offset="0.341" stop-color="#ffa956"/><stop offset="0.364" stop-color="#ffb745"/><stop offset="0.386" stop-color="#ffc534"/><stop offset="0.409" stop-color="#ffd724"/><stop offset="0.432" stop-color="#ffec13"/><stop offset="0.455" stop-color="#fff671"/><stop offset="0.477" stop-color="#fffbc6"/><stop offset="0.5" stop-color="#fffddd"/><stop offset="0.523" stop-color="#fffdd8"/><stop offset="0.545" stop-color="#fffab1"/><stop offset="0.568" stop-color="#fff44a"/><stop offset="0.591" stop-color="#ffe519"/><stop offset="0.614" stop-color="#ffd029"/><stop offset="0.636" stop-color="#ffbf3a"/><stop offset="0.659" stop-color="#ffb04d"/><stop offset="0.682" stop-color="#ff9c64"/><stop offset="0.705" stop-color="#ff7987"/><stop offset="0.727" stop-color="#ed4eb2"/><stop offset="0.75" stop-color="#bf24dc"/><stop offset="0.773" stop-color="#9b15eb"/><stop offset="0.795" stop-color="#8e10f0"/><stop offset="0.818" stop-color="#1800d7"/><stop offset="0.841" stop-color="#000008"/><stop offset="1" stop-color="#000008"/></linearGradient>
<linearGradient id="r26"><stop offset="0" stop-color="#000008"/><stop offset="0.182" stop-color="#000008"/><stop offset="0.205" stop-color="#cd2dd3"/><stop offset="0.227" stop-color="#eb4cb4"/><stop offset="0.25" stop-color="#f556aa"/><stop offset="0.273" stop-color="#ff6b95"/><stop offset="0.295" stop-color="#ff847c"/><stop offset="0.318" stop-color="#ff9b65"/><stop offset="0.341" stop-color="#ffab53"/><stop offset="0.364" stop-color="#ffb745"/><stop offset="0.386" stop-color="#ffc039"/><stop offset="0.409" stop-color="#ffcf2b"/><stop offset="0.432" stop-color="#ffe11c"/><stop offset="0.455" stop-color="#fff11d"/><stop offset="0.477" stop-color="#fff66c"/><stop offset="0.5" stop-color="#fff894"/><stop offset="0.523" stop-color="#fff88b"/><stop offset="0.545" stop-color="#fff454"/><stop offset="0.568" stop-color="#ffec13"/><stop offset="0.591" stop-color="#ffda21"/><stop offset="0.614" stop-color="#ffc830"/><stop offset="0.636" stop-color="#ffbc3f"/><stop offset="0.659" stop-color="#ffb14c"/><stop offset="0.682" stop-color="#ff9f61"/><stop offset="0.705" stop-color="#ff7b85"/><stop offset="0.727" stop-color="#ee4eb2"/><stop offset="0.75" stop-color="#bf24dc"/><stop offset="0.773" stop-color="#9914ec"/><stop offset="0.795" stop-color="#8b0ff1"/><stop offset="0.818" stop-color="#1700d6"/><stop offset="0.841" stop-color="#000008"/><stop offset="1" stop-color="#000008"/></linearGradient>
<linearGradient id="r27"><stop offset="0" stop-color="#000008"/><stop offset="0.182" stop-color="#000008"/><stop offset="0.205" stop-color="#ce2fd1"/><stop offset="0.227" stop-color="#ed4eb2"/><stop offset="0.25" stop-color="#f858a8"/><stop offset="0.273" stop-color="#ff6e92"/><stop offset="0.295" stop-color="#ff8779"/><stop offset="0.318" stop-color="#ff9e62"/><stop offset="0.341" stop-color="#ffac52"/><stop offset="0.364" stop-color="#ffb24b"/><stop offset="0.386" stop-color="#ffb448"/><stop offset="0.409" stop-color="#ffbc3f"/><stop offset="0.432" stop-color="#ffc632"/><stop offset="0.455" stop-color="#ffd228"/><stop offset="0.477" stop-color="#ffdb21"/><stop offset="0.5" stop-color="#ffdf1d"/><stop offset="0.523" stop-color="#ffde1e"/><stop offset="0.545" stop-color="#ffd823"/><stop offset="0.568" stop-color="#ffcd2c"/><stop offset="0.591" stop-color="#ffc238"/><stop offset="0.614" stop-color="#ffb745"/><stop offset="0.636" stop-color="#ffb04c"/><stop offset="0.659" stop-color="#ffad51"/><stop offset="0.682" stop-color="#ffa15f"/><stop offset="0.705" stop-color="#ff7d83"/><stop offset="0.727" stop-color="#ee4fb1"/><stop offset="0.75" stop-color="#be24dc"/><stop offset="0.773" stop-color="#9713ed"/><stop offset="0.795" stop-color="#880ef2"/><stop offset="0.818" stop-color="#1700d6"/><stop offset="0.841" stop-color="#000008"/><stop offset="1" stop-color="#000008"/></linearGradient>
<linearGradient id="r28"><stop offset="0" stop-color="#000008"/><stop offset="0.182" stop-color="#000008"/><stop offset="0.205" stop-color="#d031cf"/><stop offset="0.227" stop-color="#ef50b0"/><stop offset="0.25" stop-color="#fa5ba5"/><stop offset="0.273" stop-color="#ff7090"/><stop offset="0.295" stop-color="#ff8a76"/><stop offset="0.318" stop-color="#ffa15e"/><stop offset="0.341" stop-color="#ffa955"/><stop offset="0.364" stop-color="#ffa55a"/><stop offset="0.386" stop-color="#ff9a66"/><stop offset="0.409" stop-color="#ff9967"/><stop offset="0.432" stop-color="#ff9d63"/><stop offset="0.455" stop-color="#ff9f61"/><stop offset="0.477" stop-color="#ff9e62"/><stop offset="0.5" stop-color="#ff9c64"/><stop offset="0.545" stop-color="#ff9c64"/><stop offset="0.568" stop-color="#ff9b65"/><stop offset="0.591" stop-color="#ff9868"/><stop offset="0.614" stop-color="#ff936d"/><stop offset="0.636" stop-color="#ff9769"/><stop offset="0.659" stop-color="#ffa25e"/><stop offset="0.682" stop-color="#ff9f61"/><stop offset="0.705" stop-color="#ff817f"/><stop offset="0.727" stop-color="#ef50b0"/><stop offset="0.75" stop-color="#bd23dd"/><stop offset="0.773" stop-color="#9512ee"/><stop offset="0.795" stop-color="#850df3"/><stop offset="0.818" stop-color="#1700d5"/><stop offset="0.841" stop-color="#000008"/><stop offset="1" stop-color="#000008"/></linearGradient>
<linearGradient id="r29"><stop offset="0" stop-color="#000008"/><stop offset="0.182" stop-color="#000008"/><stop offset="0.205" stop-color="#d233cd"/><stop offset="0.227" stop-color="#f152ae"/><stop offset="0.25" stop-color="#fc5da3"/><stop offset="0.273" stop-color="#ff738d"/><stop offset="0.295" stop-color="#ff8f71"/><stop offset="0.318" stop-color="#ffa25e"/><stop offset="0.341" stop-color="#ffa15f"/><stop offset="0.364" stop-color="#ff8878"/><stop offset="0.386" stop-color="#ff659b"/><stop offset="0.409" stop-color="#f455ab"/><stop offset="0.432" stop-color="#e545bb"/><stop offset="0.455" stop-color="#d030d0"/><stop offset="0.477" stop-color="#b721df"/><stop offset="0.5" stop-color="#a519e7"/><stop offset="0.523" stop-color="#a619e7"/><stop offset="0.545" stop-color="#b821df"/><stop offset="0.568" stop-color="#d030d0"/><stop offset="0.591" stop-color="#e444bc"/><stop offset="0.614" stop-color="#f051af"/><stop offset="0.636" stop-color="#ff659b"/><stop offset="0.659" stop-color="#ff857b"/><stop offset="0.682" stop-color="#ff956b"/><stop offset="0.705" stop-color="#ff847c"/><stop offset="0.727" stop-color="#f253ad"/><stop offset="0.75" stop-color="#bd23dd"/><stop offset="0.773" stop-color="#9412ee"/><stop offset="0.795" stop-color="#820cf3"/><stop offset="0.818" stop-color="#1700d4"/><stop offset="0.841" stop-color="#000008"/><stop offset="1" stop-color="#000008"/></linearGradient>
<linearGradient id="r30"><stop offset="0" stop-color="#000008"/><stop offset="0.182" stop-color="#000008"/><stop offset="0.205" stop-color="#d434cc"/><stop offset="0.227" stop-color="#f454ac"/><stop offset="0.25" stop-color="#fe5fa1"/><stop offset="0.273" stop-color="#ff7a86"/><stop offset="0.295" stop-color="#ff946c"/><stop offset="0.318" stop-color="#ff9e62"/><stop offset="0.341" stop-color="#ff8a76"/><stop offset="0.364" stop-color="#fb5ca4"/><stop offset="0.386" stop-color="#cc2cd4"/><stop offset="0.409" stop-color="#ac1ce4"/><stop offset="0.432" stop-color="#830df3"/><stop offset="0.455" stop-color="#3e00f9"/><stop offset="0.477" stop-color="#1500ce"/><stop offset="0.5" stop-color="#0b009b"/><stop offset="0.523" stop-color="#0c009f"/><stop offset="0.545" stop-color="#1700d4"/><stop offset="0.568" stop-color="#4400fb"/><stop offset="0.591" stop-color="#870ef2"/><stop offset="0.614" stop-color="#ab1ce4"/><stop offset="0.636" stop-color="#cc2dd3"/><stop offset="0.659" stop-color="#fa5ba5"/><stop offset="0.682" stop-color="#ff8080"/><stop offset="0.705" stop-color="#ff8080"/><stop offset="0.727" stop-color="#fa5ba5"/><stop offset="0.75" stop-color="#c024dc"/><stop offset="0.773" stop-color="#9211ef"/><stop offset="0.795" stop-color="#7f0cf4"/><stop offset="0.818" stop-color="#1600d3"/><stop offset="0.841" stop-color="#000008"/><stop offset="1" stop-color="#000008"/></linearGradient>
<linearGradient id="r31"><stop offset="0" stop-color="#000008"/><stop offset="0.182" stop-color="#000008"/><stop offset="0.205" stop-color="#db3bc5"/><stop offset="0.227" stop-color="#fb5ca4"/><stop offset="0.25" stop-color="#ff6a96"/><stop offset="0.273" stop-color="#ff837d"/><stop offset="0.295" stop-color="#ff966a"/><stop offset="0.318" stop-color="#ff916f"/><stop offset="0.341" stop-color="#ff6a96"/><stop offset="0.364" stop-color="#d030d0"/><stop offset="0.386" stop-color="#9311ef"/><stop offset="0.409" stop-color="#5d03fc"/><stop offset="0.432" stop-color="#2400f1"/><stop offset="0.455" stop-color="#0e00af"/><stop offset="0.477" stop-color="#02004d"/><stop offset="0.5" stop-color="#000016"/><stop offset="0.523" stop-color="#00001a"/><stop offset="0.545" stop-color="#030057"/><stop offset="0.568" stop-color="#0f00b9"/><stop offset="0.591" stop-color="#2a00f3"/><stop offset="0.614" stop-color="#5c03fc"/><stop offset="0.636" stop-color="#9412ee"/><stop offset="0.659" stop-color="#cc2cd4"/><stop offset="0.682" stop-color="#fe5fa1"/><stop offset="0.705" stop-color="#ff758b"/><stop offset="0.727" stop-color="#fd5ea2"/><stop offset="0.75" stop-color="#cc2cd4"/><stop offset="0.773" stop-color="#9b15eb"/><stop offset="0.795" stop-color="#890ef2"/><stop offset="0.818" stop-color="#1800d7"/><stop offset="0.841" stop-color="#000008"/><stop offset="1" stop-color="#000008"/></linearGradient>
<linearGradient id="r32"><stop offset="0" stop-color="#000008"/><stop offset="0.182" stop-color="#000008"/><stop offset="0.205" stop-color="#e646ba"/><stop offset="0.227" stop-color="#ff6997"/><stop offset="0.25" stop-color="#ff758b"/><stop offset="0.273" stop-color="#ff8977"/><stop offset="0.295" stop-color="#ff926e"/><stop offset="0.318" stop-color="#ff7e82"/><stop offset="0.341" stop-color="#e748b8"/><stop offset="0.364" stop-color="#c326da"/><stop offset="0.386" stop-color="#bd23dd"/><stop offset="0.409" stop-color="#9d16ea"/><stop offset="0.432" stop-color="#5e03fc"/><stop offset="0.455" stop-color="#1b00e0"/><stop offset="0.477" stop-color="#090085"/><stop offset="0.5" stop-color="#00003e"/><stop offset="0.523" stop-color="#000042"/><stop offset="0.545" stop-color="#0a0090"/><stop offset="0.568" stop-color="#1d00e8"/><stop offset="0.591" stop-color="#6505fa"/><stop offset="0.614" stop-color="#9e16ea"/><stop offset="0.636" stop-color="#b01ee2"/><stop offset="0.659" stop-color="#9f16ea"/><stop offset="0.682" stop-color="#d939c7"/><stop offset="0.705" stop-color="#ff619f"/><stop offset="0.727" stop-color="#fb5ca4"/><stop offset="0.75" stop-color="#d535cb"/><stop offset="0.773" stop-color="#ab1be5"/><stop offset="0.795" stop-color="#9c15eb"/><stop offset="0.818" stop-color="#1b00e0"/><stop offset="0.841" stop-color="#000008"/><stop offset="1" stop-color="#000008"/></linearGradient>
<linearGradient id="r33"><stop offset="0" stop-color="#000008"/><stop offset="0.182" stop-color="#000008"/><stop offset="0.205" stop-color="#ef50b0"/><stop offset="0.227" stop-color="#ff758b"/><stop offset="0.25" stop-color="#ff7f81"/><stop offset="0.273" stop-color="#ff8c74"/><stop offset="0.295" stop-color="#ff8a76"/><stop offset="0.318" stop-color="#ff659b"/><stop offset="0.341" stop-color="#e141bf"/><stop offset="0.364" stop-color="#ec4db3"/><stop offset="0.386" stop-color="#f252ae"/><stop offset="0.409" stop-color="#df40c0"/><stop offset="0.432" stop-color="#c125db"/><stop offset="0.455" stop-color="#9914ec"/><stop offset="0.477" stop-color="#5c03fc"/><stop offset="0.5" stop-color="#3600f7"/><stop offset="0.523" stop-color="#3800f7"/><stop offset="0.545" stop-color="#6205fb"/><stop offset="0.568" stop-color="#9d16ea"/><stop offset="0.591" stop-color="#c326da"/><stop offset="0.614" stop-color="#de3fc1"/><stop offset="0.636" stop-color="#e445bb"/><stop offset="0.659" stop-color="#d131cf"/><stop offset="0.682" stop-color="#a71ae6"/><stop offset="0.705" stop-color="#e546ba"/><stop offset="0.727" stop-color="#f253ad"/><stop offset="0.75" stop-color="#da3ac6"/><stop offset="0.773" stop-color="#b721df"/><stop offset="0.795" stop-color="#aa1be5"/><stop offset="0.818" stop-color="#1d00e7"/><stop offset="0.841" stop-color="#000008"/><stop offset="1" stop-color="#000008"/></linearGradient>
<linearGradient id="r34"><stop offset="0" stop-color="#000008"/><stop offset="0.182" stop-color="#000008"/><stop offset="0.205" stop-color="#f859a7"/><stop offset="0.227" stop-color="#ff8080"/><stop offset="0.25" stop-color="#ff867a"/><stop offset="0.273" stop-color="#ff8b75"/><stop offset="0.295" stop-color="#ff7d83"/><stop offset="0.318" stop-color="#f657a9"/><stop offset="0.341" stop-color="#ff669a"/><stop offset="0.364" stop-color="#ff7d83"/><stop offset="0.386" stop-color="#ff9070"/><stop offset="0.409" stop-color="#ff8c74"/><stop offset="0.432" stop-color="#ff827e"/><stop offset="0.455" stop-color="#ff758b"/><stop offset="0.477" stop-color="#ff669a"/><stop offset="0.5" stop-color="#fa5ba5"/><stop offset="0.523" stop-color="#fb5ca4"/><stop offset="0.545" stop-color="#ff669a"/><stop offset="0.568" stop-color="#ff748c"/><stop offset="0.591" stop-color="#ff8080"/><stop offset="0.614" stop-color="#ff8878"/><stop offset="0.636" stop-color="#ff827e"/><stop offset="0.659" stop-color="#ff629e"/><stop offset="0.682" stop-color="#dd3dc3"/><stop offset="0.705" stop-color="#c024dc"/><stop offset="0.727" stop-color="#e344bc"/><stop offset="0.75" stop-color="#d939c7"/><stop offset="0.773" stop-color="#bf24dc"/><stop offset="0.795" stop-color="#b520e0"/><stop offset="0.818" stop-color="#1f00ec"/><stop offset="0.841" stop-color="#000008"/><stop offset="1" stop-color="#000008"/></linearGradient>
<linearGradient id="r35"><stop offset="0" stop-color="#000008"/><stop offset="0.182" stop-color="#000008"/><stop offset="0.205" stop-color="#fe5fa1"/><stop offset="0.227" stop-color="#ff8878"/><stop offset="0.25" stop-color="#ff8a76"/><stop offset="0.273" stop-color="#ff8779"/><stop offset="0.295" stop-color="#ff669a"/><stop offset="0.318" stop-color="#ff7789"/><stop offset="0.341" stop-color="#ff8e72"/><stop offset="0.364" stop-color="#ffa856"/><stop offset="0.386" stop-color="#ffb844"/><stop offset="0.409" stop-color="#ffbc3e"/><stop offset="0.432" stop-color="#ffbf3b"/><stop offset="0.455" stop-color="#ffc238"/><stop offset="0.477" stop-color="#ffc336"/><stop offset="0.523" stop-color="#ffc336"/><stop offset="0.545" stop-color="#ffc138"/><stop offset="0.568" stop-color="#ffbf3a"/><stop offset="0.591" stop-color="#ffbc3e"/><stop offset="0.614" stop-color="#ffb942"/><stop offset="0.636" stop-color="#ffb04d"/><stop offset="0.659" stop-color="#ff966a"/><stop offset="0.682" stop-color="#ff6997"/><stop offset="0.705" stop-color="#de3ec2"/><stop offset="0.727" stop-color="#cb2bd5"/><stop offset="0.75" stop-color="#d333cd"/><stop offset="0.773" stop-color="#c326da"/><stop offset="0.795" stop-color="#bc23dd"/><stop offset="0.818" stop-color="#2000ef"/><stop offset="0.841" stop-color="#000008"/><stop offset="1" stop-color="#000008"/></linearGradient>
<linearGradient id="r36"><stop offset="0" stop-color="#000008"/><stop offset="0.182" stop-color="#000008"/><stop offset="0.205" stop-color="#ff649c"/><stop offset="0.227" stop-color="#ff8d73"/><stop offset="0.25" stop-color="#ff8c74"/><stop offset="0.273" stop-color="#ff7d83"/><stop offset="0.295" stop-color="#ff8779"/><stop offset="0.318" stop-color="#ff9868"/><stop offset="0.341" stop-color="#ffad50"/><stop offset="0.364" stop-color="#ffc039"/><stop offset="0.386" stop-color="#ffd02a"/><stop offset="0.409" stop-color="#ffd922"/><stop offset="0.432" stop-color="#ffe21b"/><stop offset="0.455" stop-color="#ffeb14"/><stop offset="0.477" stop-color="#fff11a"/><stop offset="0.5" stop-color="#fff22d"/><stop offset="0.523" stop-color="#fff128"/><stop offset="0.545" stop-color="#ffef11"/><stop offset="0.568" stop-color="#ffe817"/><stop offset="0.591" stop-color="#ffdf1e"/><stop offset="0.614" stop-color="#ffd625"/><stop offset="0.636" stop-color="#ffc92f"/><stop offset="0.659" stop-color="#ffb546"/><stop offset="0.682" stop-color="#ff966a"/><stop offset="0.705" stop-color="#ff6799"/><stop offset="0.727" stop-color="#d838c8"/><stop offset="0.75" stop-color="#c426da"/><stop offset="0.773" stop-color="#c125db"/><stop offset="0.795" stop-color="#bd23dd"/><stop offset="0.818" stop-color="#2000ef"/><stop offset="0.841" stop-color="#000008"/><stop offset="1" stop-color="#000008"/></linearGradient>
<linearGradient id="r37"><stop offset="0" stop-color="#000008"/><stop offset="0.182" stop-color="#000008"/><stop offset="0.205" stop-color="#ff659b"/><stop offset="0.227" stop-color="#ff8e72"/><stop offset="0.25" stop-color="#ff8a76"/><stop offset="0.273" stop-color="#ff956b"/><stop offset="0.295" stop-color="#ffa15e"/><stop offset="0.318" stop-color="#ffaf4e"/><stop offset="0.341" stop-color="#ffc039"/><stop offset="0.364" stop-color="#ffd129"/><stop offset="0.386" stop-color="#ffdf1e"/><stop offset="0.409" stop-color="#ffe915"/><stop offset="0.432" stop-color="#fff128"/><stop offset="0.455" stop-color="#fff566"/><stop offset="0.477" stop-color="#fff895"/><stop offset="0.5" stop-color="#fffaac"/><stop offset="0.523" stop-color="#fff9a7"/><stop offset="0.545" stop-color="#fff787"/><stop offset="0.568" stop-color="#fff451"/><stop offset="0.591" stop-color="#fff010"/><stop offset="0.614" stop-color="#ffe519"/><stop offset="0.636" stop-color="#ffda22"/><stop offset="0.659" stop-color="#ffc830"/><stop offset="0.682" stop-color="#ffb24b"/><stop offset="0.705" stop-color="#ff8e72"/><stop offset="0.727" stop-color="#fe5fa1"/><stop offset="0.75" stop-color="#d334cc"/><stop offset="0.773" stop-color="#b11ee2"/><stop offset="0.795" stop-color="#b31fe1"/><stop offset="0.818" stop-color="#1d00e8"/><stop offset="0.841" stop-color="#000008"/><stop offset="1" stop-color="#000008"/></linearGradient>
<linearGradient id="r38"><stop offset="0" stop-color="#000008"/><stop offset="0.182" stop-color="#000008"/><stop offset="0.205" stop-color="#ff7888"/><stop offset="0.227" stop-color="#ffa35d"/><stop offset="0.25" stop-color="#ffa45b"/><stop offset="0.273" stop-color="#ffa955"/><stop offset="0.295" stop-color="#ffb349"/><stop offset="0.318" stop-color="#ffc03a"/><stop offset="0.341" stop-color="#ffce2b"/><stop offset="0.364" stop-color="#ffda21"/><stop offset="0.386" stop-color="#ffdf1d"/><stop offset="0.409" stop-color="#ffe816"/><stop offset="0.432" stop-color="#fff122"/><stop offset="0.455" stop-color="#fff560"/><stop offset="0.477" stop-color="#fff88f"/><stop offset="0.5" stop-color="#fff9a7"/><stop offset="0.523" stop-color="#fff9a2"/><stop offset="0.545" stop-color="#fff782"/><stop offset="0.568" stop-color="#fff44d"/><stop offset="0.591" stop-color="#ffef10"/><stop offset="0.614" stop-color="#ffe519"/><stop offset="0.636" stop-color="#ffde1e"/><stop offset="0.659" stop-color="#ffd526"/><stop offset="0.682" stop-color="#ffc336"/><stop offset="0.705" stop-color="#ffab53"/><stop offset="0.727" stop-color="#ff847c"/><stop offset="0.75" stop-color="#f95aa6"/><stop offset="0.773" stop-color="#db3bc5"/><stop offset="0.795" stop-color="#d434cc"/><stop offset="0.818" stop-color="#2c00f4"/><stop offset="0.841" stop-color="#000008"/><stop offset="1" stop-color="#000008"/></linearGradient>
<linearGradient id="r39"><stop offset="0" stop-color="#000008"/><stop offset="0.182" stop-color="#000008"/><stop offset="0.205" stop-color="#ff8e72"/><stop offset="0.227" stop-color="#ffb349"/><stop offset="0.25" stop-color="#ffb448"/><stop offset="0.273" stop-color="#ffba41"/><stop offset="0.295" stop-color="#ffc237"/><stop offset="0.318" stop-color="#ffcc2c"/><stop offset="0.341" stop-color="#ffd625"/><stop offset="0.364" stop-color="#ffd129"/><stop offset="0.386" stop-color="#ffcd2c"/><stop offset="0.409" stop-color="#ffd426"/><stop offset="0.432" stop-color="#ffde1e"/><stop offset="0.455" stop-color="#ffe717"/><stop offset="0.477" stop-color="#ffef11"/><stop offset="0.5" stop-color="#fff11e"/><stop offset="0.523" stop-color="#fff11a"/><stop offset="0.545" stop-color="#ffed13"/><stop offset="0.568" stop-color="#ffe519"/><stop offset="0.591" stop-color="#ffdb21"/><stop offset="0.614" stop-color="#ffd129"/><stop offset="0.636" stop-color="#ffcd2c"/><stop offset="0.659" stop-color="#ffd327"/><stop offset="0.682" stop-color="#ffcf2b"/><stop offset="0.705" stop-color="#ffbc3e"/><stop offset="0.727" stop-color="#ffa45c"/><stop offset="0.75" stop-color="#ff7d83"/><stop offset="0.773" stop-color="#fe5fa1"/><stop offset="0.795" stop-color="#f859a7"/><stop offset="0.818" stop-color="#4300fb"/><stop offset="0.841" stop-color="#000008"/><stop offset="1" stop-color="#000008"/></linearGradient>
<linearGradient id="r40"><stop offset="0" stop-color="#000008"/><stop offset="0.182" stop-color="#000008"/><stop offset="0.205" stop-color="#ffa15f"/><stop offset="0.227" stop-color="#ffc336"/><stop offset="0.25" stop-color="#ffc435"/><stop offset="0.273" stop-color="#ffc830"/><stop offset="0.295" stop-color="#ffcf2a"/><stop offset="0.318" stop-color="#ffd625"/><stop offset="0.341" stop-color="#ffcd2c"/><stop offset="0.364" stop-color="#ffbe3c"/><stop offset="0.386" stop-color="#ffb448"/><stop offset="0.409" stop-color="#ffb646"/><stop offset="0.432" stop-color="#ffbb3f"/><stop offset="0.455" stop-color="#ffc139"/><stop offset="0.477" stop-color="#ffc434"/><stop offset="0.5" stop-color="#ffc732"/><stop offset="0.523" stop-color="#ffc732"/><stop offset="0.545" stop-color="#ffc434"/><stop offset="0.568" stop-color="#ffc039"/><stop offset="0.591" stop-color="#ffbb40"/><stop offset="0.614" stop-color="#ffb646"/><stop offset="0.636" stop-color="#ffb745"/><stop offset="0.659" stop-color="#ffc237"/><stop offset="0.682" stop-color="#ffcf2b"/><stop offset="0.705" stop-color="#ffc830"/><stop offset="0.727" stop-color="#ffb646"/><stop offset="0.75" stop-color="#ff9e62"/><stop offset="0.773" stop-color="#ff827e"/><stop offset="0.795" stop-color="#ff7c84"/><stop offset="0.818" stop-color="#5a02fd"/><stop offset="0.841" stop-color="#000008"/><stop offset="1" stop-color="#000008"/></linearGradient>
<linearGradient id="r41"><stop offset="0" stop-color="#000008"/><stop offset="0.182" stop-color="#000008"/><stop offset="0.205" stop-color="#ffad51"/><stop offset="0.227" stop-color="#ffd327"/><stop offset="0.25" stop-color="#ffd427"/><stop offset="0.273" stop-color="#ffd724"/><stop offset="0.295" stop-color="#ffda22"/><stop offset="0.318" stop-color="#ffd129"/><stop offset="0.341" stop-color="#ffbb40"/><stop offset="0.364" stop-color="#ffa35c"/><stop offset="0.386" stop-color="#ff8779"/><stop offset="0.409" stop-color="#ff817f"/><stop offset="0.432" stop-color="#ff8080"/><stop offset="0.455" stop-color="#ff7e82"/><stop offset="0.477" stop-color="#ff7c84"/><stop offset="0.5" stop-color="#ff7b85"/><stop offset="0.523" stop-color="#ff7d83"/><stop offset="0.545" stop-color="#ff817f"/><stop offset="0.568" stop-color="#ff847c"/><stop offset="0.591" stop-color="#ff867a"/><stop offset="0.614" stop-color="#ff867a"/><stop offset="0.636" stop-color="#ff926e"/><stop offset="0.659" stop-color="#ffac52"/><stop offset="0.682" stop-color="#ffc03a"/><stop offset="0.705" stop-color="#ffcf2b"/><stop offset="0.727" stop-color="#ffc335"/><stop offset="0.75" stop-color="#ffb14b"/><stop offset="0.773" stop-color="#ffa15f"/><stop offset="0.795" stop-color="#ff9c64"/><stop offset="0.818" stop-color="#7008f8"/><stop offset="0.841" stop-color="#000008"/><stop offset="1" stop-color="#000008"/></linearGradient>
<linearGradient id="r42"><stop offset="0" stop-color="#000008"/><stop offset="0.182" stop-color="#000008"/><stop offset="0.205" stop-color="#ffb843"/><stop offset="0.227" stop-color="#ffe31a"/><stop offset="0.273" stop-color="#ffe31a"/><stop offset="0.295" stop-color="#ffdb21"/><stop offset="0.318" stop-color="#ffc03a"/><stop offset="0.341" stop-color="#ffa25e"/><stop offset="0.364" stop-color="#ff6e92"/><stop offset="0.386" stop-color="#e041bf"/><stop offset="0.409" stop-color="#cf2fd1"/><stop offset="0.432" stop-color="#be24dc"/><stop offset="0.455" stop-color="#a91be5"/><stop offset="0.477" stop-color="#9412ee"/><stop offset="0.5" stop-color="#870ef2"/><stop offset="0.523" stop-color="#9211ef"/><stop offset="0.545" stop-color="#a61ae6"/><stop offset="0.568" stop-color="#bd23dd"/><stop offset="0.591" stop-color="#d030d0"/><stop offset="0.614" stop-color="#dc3cc4"/><stop offset="0.636" stop-color="#f354ac"/><stop offset="0.659" stop-color="#ff837d"/><stop offset="0.682" stop-color="#ffac52"/><stop offset="0.705" stop-color="#ffc238"/><stop offset="0.727" stop-color="#ffcf2b"/><stop offset="0.75" stop-color="#ffc139"/><stop offset="0.773" stop-color="#ffb448"/><stop offset="0.795" stop-color="#ffb14c"/><stop offset="0.818" stop-color="#840df3"/><stop offset="0.841" stop-color="#000008"/><stop offset="1" stop-color="#000008"/></linearGradient>
<linearGradient id="r43"><stop offset="0" stop-color="#000008"/><stop offset="0.182" stop-color="#000008"/><stop offset="0.205" stop-color="#ffc237"/><stop offset="0.227" stop-color="#fff11d"/><stop offset="0.25" stop-color="#fff012"/><stop offset="0.273" stop-color="#ffe816"/><stop offset="0.295" stop-color="#ffca2e"/><stop offset="0.318" stop-color="#ffaa54"/><stop offset="0.341" stop-color="#ff7090"/><stop offset="0.364" stop-color="#cd2ed2"/><stop offset="0.386" stop-color="#9813ed"/><stop offset="0.409" stop-color="#7008f7"/><stop offset="0.432" stop-color="#4100fa"/><stop offset="0.455" stop-color="#1900dc"/><stop offset="0.477" stop-color="#0d00a5"/><stop offset="0.5" stop-color="#090085"/><stop offset="0.523" stop-color="#0b009b"/><stop offset="0.545" stop-color="#1600d2"/><stop offset="0.568" stop-color="#3800f8"/><stop offset="0.591" stop-color="#6b07f9"/><stop offset="0.614" stop-color="#9110f0"/><stop offset="0.636" stop-color="#b11ee2"/><stop offset="0.659" stop-color="#e949b7"/><stop offset="0.682" stop-color="#ff8977"/><stop offset="0.705" stop-color="#ffb14c"/><stop offset="0.727" stop-color="#ffc435"/><stop offset="0.75" stop-color="#ffce2b"/><stop offset="0.773" stop-color="#ffc434"/><stop offset="0.795" stop-color="#ffc237"/><stop offset="0.818" stop-color="#9412ee"/><stop offset="0.841" stop-color="#000008"/><stop offset="1" stop-color="#000008"/></linearGradient>
<linearGradient id="r44"><stop offset="0" stop-color="#000008"/><stop offset="0.182" stop-color="#000008"/><stop offset="0.205" stop-color="#ffc92f"/><stop offset="0.227" stop-color="#fff55a"/><stop offset="0.25" stop-color="#fff11b"/><stop offset="0.273" stop-color="#ffd923"/><stop offset="0.295" stop-color="#ffb645"/><stop offset="0.318" stop-color="#ff817f"/><stop offset="0.341" stop-color="#d435cb"/><stop offset="0.364" stop-color="#8c0ff1"/><stop offset="0.386" stop-color="#3f00fa"/><stop offset="0.409" stop-color="#1e00ea"/><stop offset="0.432" stop-color="#1000bf"/><stop offset="0.455" stop-color="#060072"/><stop offset="0.477" stop-color="#00002c"/><stop offset="0.5" stop-color="#000010"/><stop offset="0.523" stop-color="#000023"/><stop offset="0.545" stop-color="#040061"/><stop offset="0.568" stop-color="#0e00b2"/><stop offset="0.591" stop-color="#1c00e4"/><stop offset="0.614" stop-color="#3600f7"/><stop offset="0.636" stop-color="#6205fb"/><stop offset="0.659" stop-color="#ad1ce4"/><stop offset="0.682" stop-color="#f555ab"/><stop offset="0.705" stop-color="#ff966a"/><stop offset="0.727" stop-color="#ffb546"/><stop offset="0.75" stop-color="#ffc534"/><stop offset="0.773" stop-color="#ffcd2c"/><stop offset="0.795" stop-color="#ffcf2a"/><stop offset="0.818" stop-color="#9b15eb"/><stop offset="0.841" stop-color="#000008"/><stop offset="1" stop-color="#000008"/></linearGradient>
<linearGradient id="r45"><stop offset="0" stop-color="#000008"/><stop offset="0.182" stop-color="#000008"/><stop offset="0.205" stop-color="#ffbe3b"/><stop offset="0.227" stop-color="#ffed12"/><stop offset="0.25" stop-color="#ffe11c"/><stop offset="0.273" stop-color="#ffc336"/><stop offset="0.295" stop-color="#ff9769"/><stop offset="0.318" stop-color="#e848b8"/><stop offset="0.341" stop-color="#9613ed"/><stop offset="0.364" stop-color="#3400f6"/><stop offset="0.386" stop-color="#4800fc"/><stop offset="0.409" stop-color="#2d00f4"/><stop offset="0.432" stop-color="#1600d2"/><stop offset="0.455" stop-color="#0a008f"/><stop offset="0.477" stop-color="#010045"/><stop offset="0.5" stop-color="#000027"/><stop offset="0.523" stop-color="#00003a"/><stop offset="0.545" stop-color="#08007f"/><stop offset="0.568" stop-color="#1300c9"/><stop offset="0.591" stop-color="#2700f2"/><stop offset="0.614" stop-color="#4900fd"/><stop offset="0.636" stop-color="#5501fe"/><stop offset="0.659" stop-color="#5b03fc"/><stop offset="0.682" stop-color="#be24dc"/><stop offset="0.705" stop-color="#ff6a96"/><stop offset="0.727" stop-color="#ffa25e"/><stop offset="0.75" stop-color="#ffb844"/><stop offset="0.773" stop-color="#ffc238"/><stop offset="0.795" stop-color="#ffc435"/><stop offset="0.818" stop-color="#9412ee"/><stop offset="0.841" stop-color="#000008"/><stop offset="1" stop-color="#000008"/></linearGradient>
<linearGradient id="r46"><stop offset="0" stop-color="#000008"/><stop offset="0.182" stop-color="#000008"/><stop offset="0.205" stop-color="#ffaf4e"/><stop offset="0.227" stop-color="#ffd823"/><stop offset="0.25" stop-color="#ffc92f"/><stop offset="0.273" stop-color="#ffa857"/><stop offset="0.295" stop-color="#ff619f"/><stop offset="0.318" stop-color="#aa1be5"/><stop offset="0.341" stop-color="#4000fa"/><stop offset="0.364" stop-color="#7c0bf5"/><stop offset="0.386" stop-color="#8b0ff1"/><stop offset="0.409" stop-color="#780af6"/><stop offset="0.432" stop-color="#5501fe"/><stop offset="0.455" stop-color="#2d00f4"/><stop offset="0.477" stop-color="#1800d9"/><stop offset="0.5" stop-color="#1300c9"/><stop offset="0.523" stop-color="#1700d4"/><stop offset="0.545" stop-color="#2600f2"/><stop offset="0.568" stop-color="#5000ff"/><stop offset="0.591" stop-color="#770af6"/><stop offset="0.614" stop-color="#9110f0"/><stop offset="0.636" stop-color="#9412ee"/><stop offset="0.659" stop-color="#7c0bf5"/><stop offset="0.682" stop-color="#780af6"/><stop offset="0.705" stop-color="#d738c8"/><stop offset="0.727" stop-color="#ff7d83"/><stop offset="0.75" stop-color="#ffa659"/><stop offset="0.773" stop-color="#ffb448"/><stop offset="0.795" stop-color="#ffb645"/><stop offset="0.818" stop-color="#870ef2"/><stop offset="0.841" stop-color="#000008"/><stop offset="1" stop-color="#000008"/></linearGradient>
<linearGradient id="r47"><stop offset="0" stop-color="#000008"/><stop offset="0.182" stop-color="#000008"/><stop offset="0.205" stop-color="#ff966a"/><stop offset="0.227" stop-color="#ffbc3e"/><stop offset="0.25" stop-color="#ffad51"/><stop offset="0.273" stop-color="#ff7789"/><stop offset="0.295" stop-color="#c326da"/><stop offset="0.318" stop-color="#4700fc"/><stop offset="0.341" stop-color="#8c0ff1"/><stop offset="0.364" stop-color="#aa1be5"/><stop offset="0.386" stop-color="#bb22de"/><stop offset="0.409" stop-color="#ba22de"/><stop offset="0.432" stop-color="#b520e0"/><stop offset="0.455" stop-color="#ac1ce4"/><stop offset="0.477" stop-color="#a418e8"/><stop offset="0.5" stop-color="#9f17e9"/><stop offset="0.523" stop-color="#a418e8"/><stop offset="0.545" stop-color="#ad1de3"/><stop offset="0.568" stop-color="#b721df"/><stop offset="0.591" stop-color="#be24dc"/><stop offset="0.614" stop-color="#c225db"/><stop offset="0.636" stop-color="#bc23dd"/><stop offset="0.659" stop-color="#a81ae6"/><stop offset="0.682" stop-color="#8b0ff1"/><stop offset="0.705" stop-color="#9f16ea"/><stop offset="0.727" stop-color="#ef4fb1"/><stop offset="0.75" stop-color="#ff867a"/><stop offset="0.773" stop-color="#ffa15f"/><stop offset="0.795" stop-color="#ffa55a"/><stop offset="0.818" stop-color="#7409f7"/><stop offset="0.841" stop-color="#000008"/><stop offset="1" stop-color="#000008"/></linearGradient>
<linearGradient id="r48"><stop offset="0" stop-color="#000008"/><stop offset="0.182" stop-color="#000008"/><stop offset="0.205" stop-color="#ff6a96"/><stop offset="0.227" stop-color="#ff9769"/><stop offset="0.25" stop-color="#ff7c84"/><stop offset="0.273" stop-color="#d737c9"/><stop offset="0.295" stop-color="#6c07f8"/><stop offset="0.318" stop-color="#890ef2"/><stop offset="0.341" stop-color="#b11ee2"/><stop offset="0.364" stop-color="#cb2bd5"/><stop offset="0.386" stop-color="#dc3cc4"/><stop offset="0.409" stop-color="#e444bc"/><stop offset="0.432" stop-color="#ea4bb5"/><stop offset="0.455" stop-color="#f051af"/><stop offset="0.477" stop-color="#f455ab"/><stop offset="0.5" stop-color="#f657a9"/><stop offset="0.523" stop-color="#f757a9"/><stop offset="0.545" stop-color="#f556aa"/><stop offset="0.568" stop-color="#f152ae"/><stop offset="0.591" stop-color="#eb4cb4"/><stop offset="0.614" stop-color="#e445bb"/><stop offset="0.636" stop-color="#da3ac6"/><stop offset="0.659" stop-color="#c728d8"/><stop offset="0.682" stop-color="#af1de3"/><stop offset="0.705" stop-color="#9211ef"/><stop offset="0.727" stop-color="#bc23dd"/><stop offset="0.75" stop-color="#fb5ca4"/><stop offset="0.773" stop-color="#ff7f81"/><stop offset="0.795" stop-color="#ff867a"/><stop offset="0.818" stop-color="#5c03fc"/><stop offset="0.841" stop-color="#000008"/><stop offset="1" stop-color="#000008"/></linearGradient>
<linearGradient id="r49"><stop offset="0" stop-color="#000008"/><stop offset="0.182" stop-color="#000008"/><stop offset="0.205" stop-color="#d334cc"/><stop offset="0.227" stop-color="#f758a8"/><stop offset="0.25" stop-color="#d939c7"/><stop offset="0.273" stop-color="#870ef2"/><stop offset="0.295" stop-color="#810cf3"/><stop offset="0.318" stop-color="#b21ee2"/><stop offset="0.341" stop-color="#cd2dd3"/><stop offset="0.364" stop-color="#df3fc1"/><stop offset="0.386" stop-color="#ec4db3"/><stop offset="0.409" stop-color="#f859a7"/><stop offset="0.432" stop-color="#ff669a"/><stop offset="0.455" stop-color="#ff728e"/><stop offset="0.477" stop-color="#ff7c84"/><stop offset="0.5" stop-color="#ff817f"/><stop offset="0.523" stop-color="#ff8080"/><stop offset="0.545" stop-color="#ff7a86"/><stop offset="0.568" stop-color="#ff6f91"/><stop offset="0.591" stop-color="#ff629e"/><stop offset="0.614" stop-color="#f556aa"/><stop offset="0.636" stop-color="#e949b7"/><stop offset="0.659" stop-color="#db3bc5"/><stop offset="0.682" stop-color="#c929d7"/><stop offset="0.705" stop-color="#b520e0"/><stop offset="0.727" stop-color="#9813ed"/><stop offset="0.75" stop-color="#cb2bd5"/><stop offset="0.773" stop-color="#f455ab"/><stop offset="0.795" stop-color="#fd5ea2"/><stop offset="0.818" stop-color="#4100fa"/><stop offset="0.841" stop-color="#000008"/><stop offset="1" stop-color="#000008"/></linearGradient>
<linearGradient id="r50"><stop offset="0" stop-color="#000008"/><stop offset="0.182" stop-color="#000008"/><stop offset="0.205" stop-color="#8e10f0"/><stop offset="0.227" stop-color="#ab1be5"/><stop offset="0.25" stop-color="#7e0bf4"/><stop offset="0.273" stop-color="#860df2"/><stop offset="0.295" stop-color="#b31fe1"/><stop offset="0.318" stop-color="#cd2dd3"/><stop offset="0.341" stop-color="#dc3dc3"/><stop offset="0.364" stop-color="#e545bb"/><stop offset="0.386" stop-color="#ee4fb1"/><stop offset="0.409" stop-color="#fb5ca4"/><stop offset="0.432" stop-color="#ff6c94"/><stop offset="0.455" stop-color="#ff7b85"/><stop offset="0.477" stop-color="#ff8779"/><stop offset="0.5" stop-color="#ff8d73"/><stop offset="0.523" stop-color="#ff8b75"/><stop offset="0.545" stop-color="#ff847c"/><stop offset="0.568" stop-color="#ff7789"/><stop offset="0.591" stop-color="#ff6799"/><stop offset="0.614" stop-color="#f758a8"/><stop offset="0.636" stop-color="#eb4bb5"/><stop offset="0.659" stop-color="#e243bd"/><stop offset="0.682" stop-color="#d839c7"/><stop offset="0.705" stop-color="#cb2bd5"/><stop offset="0.727" stop-color="#bc23dd"/><stop offset="0.75" stop-color="#a61ae6"/><stop offset="0.773" stop-color="#c125db"/><stop offset="0.795" stop-color="#cd2dd3"/><stop offset="0.818" stop-color="#2100f0"/><stop offset="0.841" stop-color="#000008"/><stop offset="1" stop-color="#000008"/></linearGradient>
<linearGradient id="r51"><stop offset="0" stop-color="#000008"/><stop offset="0.182" stop-color="#000008"/><stop offset="0.205" stop-color="#790af5"/><stop offset="0.227" stop-color="#9b15eb"/><stop offset="0.25" stop-color="#a619e7"/><stop offset="0.273" stop-color="#bc23dd"/><stop offset="0.295" stop-color="#d131cf"/><stop offset="0.318" stop-color="#dd3dc3"/><stop offset="0.341" stop-color="#e040c0"/><stop offset="0.364" stop-color="#e041bf"/><stop offset="0.386" stop-color="#e646ba"/><stop offset="0.409" stop-color="#f354ac"/><stop offset="0.432" stop-color="#ff649c"/><stop offset="0.455" stop-color="#ff748c"/><stop offset="0.477" stop-color="#ff817f"/><stop offset="0.5" stop-color="#ff8779"/><stop offset="0.523" stop-color="#ff857b"/><stop offset="0.545" stop-color="#ff7d83"/><stop offset="0.568" stop-color="#ff6f91"/><stop offset="0.591" stop-color="#fe5fa1"/><stop offset="0.614" stop-color="#ee4fb1"/><stop offset="0.636" stop-color="#e343bd"/><stop offset="0.659" stop-color="#df40c0"/><stop offset="0.682" stop-color="#de3ec2"/><stop offset="0.705" stop-color="#d939c7"/><stop offset="0.727" stop-color="#d132ce"/><stop offset="0.75" stop-color="#c929d7"/><stop offset="0.773" stop-color="#c125db"/><stop offset="0.795" stop-color="#bf24dc"/><stop offset="0.818" stop-color="#1e00e9"/><stop offset="0.841" stop-color="#000008"/><stop offset="1" stop-color="#000008"/></linearGradient>
<linearGradient id="r52"><stop offset="0" stop-color="#000008"/><stop offset="0.182" stop-color="#000008"/><stop offset="0.205" stop-color="#b21ee2"/><stop offset="0.227" stop-color="#d232ce"/><stop offset="0.25" stop-color="#d535cb"/><stop offset="0.273" stop-color="#dd3dc3"/><stop offset="0.295" stop-color="#e343bd"/><stop offset="0.318" stop-color="#e141bf"/><stop offset="0.341" stop-color="#da3ac6"/><stop offset="0.364" stop-color="#d838c8"/><stop offset="0.386" stop-color="#de3ec2"/><stop offset="0.409" stop-color="#eb4cb4"/><stop offset="0.432" stop-color="#fa5ba5"/><stop offset="0.455" stop-color="#ff6a96"/><stop offset="0.477" stop-color="#ff768a"/><stop offset="0.5" stop-color="#ff7c84"/><stop offset="0.523" stop-color="#ff7b85"/><stop offset="0.545" stop-color="#ff738d"/><stop offset="0.568" stop-color="#ff669a"/><stop offset="0.591" stop-color="#f657a9"/><stop offset="0.614" stop-color="#e747b9"/><stop offset="0.636" stop-color="#dc3cc4"/><stop offset="0.659" stop-color="#d636ca"/><stop offset="0.682" stop-color="#da3ac6"/><stop offset="0.705" stop-color="#de3ec2"/><stop offset="0.727" stop-color="#de3ec2"/><stop offset="0.75" stop-color="#dc3cc4"/><stop offset="0.773" stop-color="#da3ac6"/><stop offset="0.795" stop-color="#db3bc5"/><stop offset="0.818" stop-color="#2a00f3"/><stop offset="0.841" stop-color="#000008"/><stop offset="1" stop-color="#000008"/></linearGradient>
<linearGradient id="r53"><stop offset="0" stop-color="#000008"/><stop offset="0.182" stop-color="#000008"/><stop offset="0.205" stop-color="#cf2fd1"/><stop offset="0.227" stop-color="#f354ac"/><stop offset="0.25" stop-color="#f152ae"/><stop offset="0.273" stop-color="#f050b0"/><stop offset="0.295" stop-color="#e949b7"/><stop offset="0.318" stop-color="#dc3cc4"/><stop offset="0.341" stop-color="#d131cf"/><stop offset="0.364" stop-color="#ce2ed2"/><stop offset="0.386" stop-color="#ce2ed2"/><stop offset="0.409" stop-color="#d839c7"/><stop offset="0.432" stop-color="#e546ba"/><stop offset="0.455" stop-color="#f152ae"/><stop offset="0.477" stop-color="#fa5ba5"/><stop offset="0.5" stop-color="#ff60a0"/><stop offset="0.523" stop-color="#ff60a0"/><stop offset="0.545" stop-color="#f95aa6"/><stop offset="0.568" stop-color="#ef50b0"/><stop offset="0.591" stop-color="#e343bd"/><stop offset="0.614" stop-color="#d636ca"/><stop offset="0.636" stop-color="#cf2fd1"/><stop offset="0.659" stop-color="#cf2fd1"/><stop offset="0.682" stop-color="#d030d0"/><stop offset="0.705" stop-color="#db3bc5"/><stop offset="0.727" stop-color="#e243bd"/><stop offset="0.75" stop-color="#e647b9"/><stop offset="0.773" stop-color="#e849b7"/><stop offset="0.795" stop-color="#e94ab6"/><stop offset="0.818" stop-color="#3300f6"/><stop offset="0.841" stop-color="#000008"/><stop offset="1" stop-color="#000008"/></linearGradient>
<linearGradient id="r54"><stop offset="0" stop-color="#000008"/><stop offset="0.182" stop-color="#000008"/><stop offset="0.205" stop-color="#df40c0"/><stop offset="0.227" stop-color="#ff6898"/><stop offset="0.25" stop-color="#ff629e"/><stop offset="0.273" stop-color="#f758a8"/><stop offset="0.295" stop-color="#e546ba"/><stop offset="0.318" stop-color="#d232ce"/><stop offset="0.341" stop-color="#c828d8"/><stop offset="0.364" stop-color="#bc23dd"/><stop offset="0.386" stop-color="#b21fe1"/><stop offset="0.409" stop-color="#b721df"/><stop offset="0.432" stop-color="#be24dc"/><stop offset="0.455" stop-color="#c527d9"/><stop offset="0.477" stop-color="#ca2ad6"/><stop offset="0.5" stop-color="#cd2dd3"/><stop offset="0.523" stop-color="#ce2ed2"/><stop offset="0.545" stop-color="#cd2dd3"/><stop offset="0.568" stop-color="#c828d8"/><stop offset="0.591" stop-color="#c125db"/><stop offset="0.614" stop-color="#b922de"/><stop offset="0.636" stop-color="#b821df"/><stop offset="0.659" stop-color="#c125db"/><stop offset="0.682" stop-color="#ca2ad6"/><stop offset="0.705" stop-color="#d232ce"/><stop offset="0.727" stop-color="#e040c0"/><stop offset="0.75" stop-color="#ea4ab6"/><stop offset="0.773" stop-color="#ef50b0"/><stop offset="0.795" stop-color="#f151af"/><stop offset="0.818" stop-color="#3700f7"/><stop offset="0.841" stop-color="#000008"/><stop offset="1" stop-color="#000008"/></linearGradient>
<linearGradient id="r55"><stop offset="0" stop-color="#000008"/><stop offset="0.182" stop-color="#000008"/><stop offset="0.205" stop-color="#e546ba"/><stop offset="0.227" stop-color="#ff6f91"/><stop offset="0.25" stop-color="#ff6799"/><stop offset="0.273" stop-color="#f455ab"/><stop offset="0.295" stop-color="#db3bc5"/><stop offset="0.318" stop-color="#ca2ad6"/><stop offset="0.341" stop-color="#b721df"/><stop offset="0.364" stop-color="#9f17e9"/><stop offset="0.386" stop-color="#870ef2"/><stop offset="0.409" stop-color="#800cf4"/><stop offset="0.432" stop-color="#7a0bf5"/><stop offset="0.455" stop-color="#7108f7"/><stop offset="0.477" stop-color="#6706fa"/><stop offset="0.5" stop-color="#6605fa"/><stop offset="0.523" stop-color="#6f08f8"/><stop offset="0.545" stop-color="#7e0bf4"/><stop offset="0.568" stop-color="#8a0ef2"/><stop offset="0.591" stop-color="#8f10f0"/><stop offset="0.614" stop-color="#9010f0"/><stop offset="0.636" stop-color="#9813ed"/><stop offset="0.659" stop-color="#ab1ce4"/><stop offset="0.682" stop-color="#bd23dd"/><stop offset="0.705" stop-color="#ca2ad6"/><stop offset="0.727" stop-color="#d838c8"/><stop offset="0.75" stop-color="#e748b8"/><stop offset="0.773" stop-color="#f050b0"/><stop offset="0.795" stop-color="#f253ad"/><stop offset="0.818" stop-color="#3800f7"/><stop offset="0.841" stop-color="#000008"/><stop offset="1" stop-color="#000008"/></linearGradient>
<linearGradient id="r56"><stop offset="0" stop-color="#000008"/><stop offset="0.182" stop-color="#000008"/><stop offset="0.205" stop-color="#e343bd"/><stop offset="0.227" stop-color="#ff6d93"/><stop offset="0.25" stop-color="#ff629e"/><stop offset="0.273" stop-color="#ea4bb5"/><stop offset="0.295" stop-color="#d434cc"/><stop offset="0.318" stop-color="#bc23dd"/><stop offset="0.341" stop-color="#9e16ea"/><stop offset="0.364" stop-color="#6f08f8"/><stop offset="0.386" stop-color="#4300fb"/><stop offset="0.409" stop-color="#2f00f5"/><stop offset="0.432" stop-color="#1d00e8"/><stop offset="0.455" stop-color="#1300ca"/><stop offset="0.477" stop-color="#0d00a9"/><stop offset="0.5" stop-color="#0c009c"/><stop offset="0.523" stop-color="#0e00b3"/><stop offset="0.545" stop-color="#1700d6"/><stop offset="0.568" stop-color="#2500f2"/><stop offset="0.591" stop-color="#3d00f9"/><stop offset="0.614" stop-color="#4b00fd"/><stop offset="0.636" stop-color="#6104fb"/><stop offset="0.659" stop-color="#8b0ff1"/><stop offset="0.682" stop-color="#aa1be5"/><stop offset="0.705" stop-color="#c025db"/><stop offset="0.727" stop-color="#d030d0"/><stop offset="0.75" stop-color="#df40c0"/><stop offset="0.773" stop-color="#eb4cb4"/><stop offset="0.795" stop-color="#ee4fb1"/><stop offset="0.818" stop-color="#3500f6"/><stop offset="0.841" stop-color="#000008"/><stop offset="1" stop-color="#000008"/></linearGradient>
<linearGradient id="r57"><stop offset="0" stop-color="#000008"/><stop offset="0.182" stop-color="#000008"/><stop offset="0.205" stop-color="#da3bc5"/><stop offset="0.227" stop-color="#ff639d"/><stop offset="0.25" stop-color="#f757a9"/><stop offset="0.273" stop-color="#e242be"/><stop offset="0.295" stop-color="#c728d8"/><stop offset="0.318" stop-color="#a71ae6"/><stop offset="0.341" stop-color="#7509f6"/><stop offset="0.364" stop-color="#3800f7"/><stop offset="0.386" stop-color="#1a00de"/><stop offset="0.409" stop-color="#1200c5"/><stop offset="0.432" stop-color="#0b0099"/><stop offset="0.455" stop-color="#03005c"/><stop offset="0.477" stop-color="#00002b"/><stop offset="0.5" stop-color="#00001c"/><stop offset="0.523" stop-color="#000033"/><stop offset="0.545" stop-color="#06006e"/><stop offset="0.568" stop-color="#0d00ab"/><stop offset="0.591" stop-color="#1600d1"/><stop offset="0.614" stop-color="#1c00e5"/><stop offset="0.636" stop-color="#2c00f4"/><stop offset="0.659" stop-color="#5702fd"/><stop offset="0.682" stop-color="#9010f0"/><stop offset="0.705" stop-color="#b01ee2"/><stop offset="0.727" stop-color="#c627d9"/><stop offset="0.75" stop-color="#d737c9"/><stop offset="0.773" stop-color="#e242be"/><stop offset="0.795" stop-color="#e546ba"/><stop offset="0.818" stop-color="#2f00f5"/><stop offset="0.841" stop-color="#000008"/><stop offset="1" stop-color="#000008"/></linearGradient>
<linearGradient id="r58"><stop offset="0" stop-color="#000008"/><stop offset="0.182" stop-color="#000008"/><stop offset="0.205" stop-color="#d232ce"/><stop offset="0.227" stop-color="#f859a7"/><stop offset="0.25" stop-color="#ed4eb2"/><stop offset="0.273" stop-color="#d536ca"/><stop offset="0.295" stop-color="#b520e0"/><stop offset="0.318" stop-color="#890ef2"/><stop offset="0.341" stop-color="#4200fb"/><stop offset="0.364" stop-color="#1800d8"/><stop offset="0.386" stop-color="#1300c9"/><stop offset="0.409" stop-color="#0f00b5"/><stop offset="0.432" stop-color="#090087"/><stop offset="0.455" stop-color="#01004b"/><stop offset="0.477" stop-color="#00001f"/><stop offset="0.5" stop-color="#000011"/><stop offset="0.523" stop-color="#000027"/><stop offset="0.545" stop-color="#03005c"/><stop offset="0.568" stop-color="#0b0099"/><stop offset="0.591" stop-color="#1100c3"/><stop offset="0.614" stop-color="#1800d7"/><stop offset="0.636" stop-color="#1800d7"/><stop offset="0.659" stop-color="#2700f2"/><stop offset="0.682" stop-color="#6305fb"/><stop offset="0.705" stop-color="#9a14ec"/><stop offset="0.727" stop-color="#b821df"/><stop offset="0.75" stop-color="#cd2dd3"/><stop offset="0.773" stop-color="#da3ac6"/><stop offset="0.795" stop-color="#dd3dc3"/><stop offset="0.818" stop-color="#2900f3"/><stop offset="0.841" stop-color="#000008"/><stop offset="1" stop-color="#000008"/></linearGradient>
<linearGradient id="r59"><stop offset="0" stop-color="#000008"/><stop offset="0.182" stop-color="#000008"/><stop offset="0.205" stop-color="#c627d9"/><stop offset="0.227" stop-color="#eb4cb4"/><stop offset="0.25" stop-color="#df40c0"/><stop offset="0.273" stop-color="#c426da"/><stop offset="0.295" stop-color="#9d16ea"/><stop offset="0.318" stop-color="#5a02fd"/><stop offset="0.341" stop-color="#1b00e2"/><stop offset="0.364" stop-color="#1e00ea"/><stop offset="0.386" stop-color="#2500f2"/><stop offset="0.409" stop-color="#1e00e9"/><stop offset="0.432" stop-color="#1500d0"/><stop offset="0.455" stop-color="#0d00a8"/><stop offset="0.477" stop-color="#08007e"/><stop offset="0.5" stop-color="#06006f"/><stop offset="0.523" stop-color="#090088"/><stop offset="0.545" stop-color="#0f00b8"/><stop offset="0.568" stop-color="#1a00dd"/><stop offset="0.591" stop-color="#2500f2"/><stop offset="0.614" stop-color="#3500f7"/><stop offset="0.636" stop-color="#3500f7"/><stop offset="0.659" stop-color="#1f00ee"/><stop offset="0.682" stop-color="#3400f6"/><stop offset="0.705" stop-color="#770af6"/><stop offset="0.727" stop-color="#a519e7"/><stop offset="0.75" stop-color="#bf24dc"/><stop offset="0.773" stop-color="#ce2ed2"/><stop offset="0.795" stop-color="#d232ce"/><stop offset="0.818" stop-color="#2200f1"/><stop offset="0.841" stop-color="#000008"/><stop offset="1" stop-color="#000008"/></linearGradient>
<linearGradient id="r60"><stop offset="0" stop-color="#000008"/><stop offset="0.182" stop-color="#000008"/><stop offset="0.205" stop-color="#b721df"/><stop offset="0.227" stop-color="#da3ac6"/><stop offset="0.25" stop-color="#cd2dd3"/><stop offset="0.273" stop-color="#ae1de3"/><stop offset="0.295" stop-color="#790af5"/><stop offset="0.318" stop-color="#2b00f3"/><stop offset="0.341" stop-color="#2700f2"/><stop offset="0.364" stop-color="#4400fb"/><stop offset="0.386" stop-color="#5b03fd"/><stop offset="0.409" stop-color="#5a03fd"/><stop offset="0.432" stop-color="#5100ff"/><stop offset="0.455" stop-color="#4400fb"/><stop offset="0.477" stop-color="#3900f8"/><stop offset="0.5" stop-color="#3600f7"/><stop offset="0.523" stop-color="#3f00fa"/><stop offset="0.545" stop-color="#4f00ff"/><stop offset="0.568" stop-color="#6004fb"/><stop offset="0.591" stop-color="#6a06f9"/><stop offset="0.614" stop-color="#6d07f8"/><stop offset="0.636" stop-color="#6405fa"/><stop offset="0.659" stop-color="#4700fc"/><stop offset="0.682" stop-color="#2300f1"/><stop offset="0.705" stop-color="#4a00fd"/><stop offset="0.727" stop-color="#8c0ff1"/><stop offset="0.75" stop-color="#ad1ce4"/><stop offset="0.773" stop-color="#bf24dc"/><stop offset="0.795" stop-color="#c326da"/><stop offset="0.818" stop-color="#1e00e9"/><stop offset="0.841" stop-color="#000008"/><stop offset="1" stop-color="#000008"/></linearGradient>
<linearGradient id="r61"><stop offset="0" stop-color="#000008"/><stop offset="0.182" stop-color="#000008"/><stop offset="0.205" stop-color="#a519e7"/><stop offset="0.227" stop-color="#c527d9"/><stop offset="0.25" stop-color="#b620e0"/><stop offset="0.273" stop-color="#9311ef"/><stop offset="0.295" stop-color="#4900fd"/><stop offset="0.318" stop-color="#2d00f4"/><stop offset="0.341" stop-color="#4e00fe"/><stop offset="0.364" stop-color="#7309f7"/><stop offset="0.386" stop-color="#9110f0"/><stop offset="0.409" stop-color="#9914ec"/><stop offset="0.432" stop-color="#9f16ea"/><stop offset="0.455" stop-color="#a418e8"/><stop offset="0.477" stop-color="#a71ae6"/><stop offset="0.5" stop-color="#aa1be5"/><stop offset="0.523" stop-color="#ac1ce4"/><stop offset="0.545" stop-color="#ac1ce4"/><stop offset="0.568" stop-color="#a91be5"/><stop offset="0.591" stop-color="#a318e8"/><stop offset="0.614" stop-color="#9c15eb"/><stop offset="0.636" stop-color="#9110f0"/><stop offset="0.659" stop-color="#7108f7"/><stop offset="0.682" stop-color="#4c00fe"/><stop offset="0.705" stop-color="#2100f0"/><stop offset="0.727" stop-color="#6204fb"/><stop offset="0.75" stop-color="#9613ed"/><stop offset="0.773" stop-color="#ab1ce4"/><stop offset="0.795" stop-color="#b01ee2"/><stop offset="0.818" stop-color="#1a00df"/><stop offset="0.841" stop-color="#000008"/><stop offset="1" stop-color="#000008"/></linearGradient>
<linearGradient id="r62"><stop offset="0" stop-color="#000008"/><stop offset="0.182" stop-color="#000008"/><stop offset="0.205" stop-color="#8e0ff1"/><stop offset="0.227" stop-color="#ab1be5"/><stop offset="0.25" stop-color="#9b15eb"/><stop offset="0.273" stop-color="#6505fa"/><stop offset="0.295" stop-color="#3400f6"/><stop offset="0.318" stop-color="#5200ff"/><stop offset="0.341" stop-color="#7609f6"/><stop offset="0.364" stop-color="#9613ed"/><stop offset="0.386" stop-color="#a91be5"/><stop offset="0.409" stop-color="#b620e0"/><stop offset="0.432" stop-color="#c226da"/><stop offset="0.455" stop-color="#ce2ed2"/><stop offset="0.477" stop-color="#d737c9"/><stop offset="0.5" stop-color="#db3cc4"/><stop offset="0.523" stop-color="#db3bc5"/><stop offset="0.545" stop-color="#d636ca"/><stop offset="0.568" stop-color="#cc2cd4"/><stop offset="0.591" stop-color="#c125db"/><stop offset="0.614" stop-color="#b420e0"/><stop offset="0.636" stop-color="#a619e7"/><stop offset="0.659" stop-color="#9211ef"/><stop offset="0.682" stop-color="#7008f8"/><stop offset="0.705" stop-color="#4d00fe"/><stop offset="0.727" stop-color="#2c00f4"/><stop offset="0.75" stop-color="#7108f7"/><stop offset="0.773" stop-color="#9412ee"/><stop offset="0.795" stop-color="#9914ec"/><stop offset="0.818" stop-color="#1600d1"/><stop offset="0.841" stop-color="#000008"/><stop offset="1" stop-color="#000008"/></linearGradient>
<linearGradient id="r63"><stop offset="0" stop-color="#000008"/><stop offset="0.182" stop-color="#000008"/><stop offset="0.205" stop-color="#6505fa"/><stop offset="0.227" stop-color="#8a0ef1"/><stop offset="0.25" stop-color="#6f08f8"/><stop offset="0.273" stop-color="#4200fb"/><stop offset="0.295" stop-color="#5a03fd"/><stop offset="0.318" stop-color="#7509f6"/><stop offset="0.341" stop-color="#9311ef"/><stop offset="0.364" stop-color="#a619e7"/><stop offset="0.386" stop-color="#b620e0"/><stop offset="0.409" stop-color="#c426da"/><stop offset="0.432" stop-color="#d333cd"/><stop offset="0.455" stop-color="#e142be"/><stop offset="0.477" stop-color="#ec4db3"/><stop offset="0.5" stop-color="#f152ae"/><stop offset="0.523" stop-color="#f051af"/><stop offset="0.545" stop-color="#e94ab6"/><stop offset="0.568" stop-color="#dd3ec2"/><stop offset="0.591" stop-color="#cf2fd1"/><stop offset="0.614" stop-color="#c025db"/><stop offset="0.636" stop-color="#b11ee2"/><stop offset="0.659" stop-color="#a117e9"/><stop offset="0.682" stop-color="#8d0ff1"/><stop offset="0.705" stop-color="#6e07f8"/><stop offset="0.727" stop-color="#5100ff"/><stop offset="0.75" stop-color="#3b00f8"/><stop offset="0.773" stop-color="#6b07f9"/><stop offset="0.795" stop-color="#7409f6"/><stop offset="0.818" stop-color="#1000c1"/><stop offset="0.841" stop-color="#000008"/><stop offset="1" stop-color="#000008"/></linearGradient>
<linearGradient id="r64"><stop offset="0" stop-color="#000008"/><stop offset="0.182" stop-color="#000008"/><stop offset="0.205" stop-color="#3b00f9"/><stop offset="0.227" stop-color="#5601fe"/><stop offset="0.25" stop-color="#5f04fc"/><stop offset="0.273" stop-color="#6a07f9"/><stop offset="0.295" stop-color="#790af5"/><stop offset="0.318" stop-color="#8f10f0"/><stop offset="0.341" stop-color="#9f16ea"/><stop offset="0.364" stop-color="#ac1ce4"/><stop offset="0.386" stop-color="#b921df"/><stop offset="0.409" stop-color="#c828d8"/><stop offset="0.432" stop-color="#d838c8"/><stop offset="0.455" stop-color="#e747b9"/><stop offset="0.477" stop-color="#f253ad"/><stop offset="0.5" stop-color="#f859a7"/><stop offset="0.523" stop-color="#f758a8"/><stop offset="0.545" stop-color="#ef50b0"/><stop offset="0.568" stop-color="#e243bd"/><stop offset="0.591" stop-color="#d233cd"/><stop offset="0.614" stop-color="#c326da"/><stop offset="0.636" stop-color="#b420e0"/><stop offset="0.659" stop-color="#a81ae6"/><stop offset="0.682" stop-color="#9a14ec"/><stop offset="0.705" stop-color="#870ef2"/><stop offset="0.727" stop-color="#7008f8"/><stop offset="0.75" stop-color="#5c03fc"/><stop offset="0.773" stop-color="#4c00fe"/><stop offset="0.795" stop-color="#4700fc"/><stop offset="0.818" stop-color="#0d00a7"/><stop offset="0.841" stop-color="#000008"/><stop offset="1" stop-color="#000008"/></linearGradient>
<linearGradient id="r65"><stop offset="0" stop-color="#000008"/><stop offset="0.182" stop-color="#000008"/><stop offset="0.205" stop-color="#5f04fc"/><stop offset="0.227" stop-color="#820cf3"/><stop offset="0.25" stop-color="#810cf4"/><stop offset="0.273" stop-color="#850df3"/><stop offset="0.295" stop-color="#9010f0"/><stop offset="0.318" stop-color="#9a14ec"/><stop offset="0.341" stop-color="#a418e8"/><stop offset="0.364" stop-color="#ac1ce4"/><stop offset="0.386" stop-color="#b721df"/><stop offset="0.409" stop-color="#c527d9"/><stop offset="0.432" stop-color="#d536ca"/><stop offset="0.455" stop-color="#e445bb"/><stop offset="0.477" stop-color="#f051af"/><stop offset="0.5" stop-color="#f656aa"/><stop offset="0.523" stop-color="#f455ab"/><stop offset="0.545" stop-color="#ed4db3"/><stop offset="0.568" stop-color="#e040c0"/><stop offset="0.591" stop-color="#d030d0"/><stop offset="0.614" stop-color="#c025db"/><stop offset="0.636" stop-color="#b31fe1"/><stop offset="0.659" stop-color="#a91be5"/><stop offset="0.682" stop-color="#a017e9"/><stop offset="0.705" stop-color="#9512ee"/><stop offset="0.727" stop-color="#860df2"/><stop offset="0.75" stop-color="#780af6"/><stop offset="0.773" stop-color="#6f08f8"/><stop offset="0.795" stop-color="#6f08f8"/><stop offset="0.818" stop-color="#1000bf"/><stop offset="0.841" stop-color="#000008"/><stop offset="1" stop-color="#000008"/></linearGradient>
<linearGradient id="r66"><stop offset="0" stop-color="#000008"/><stop offset="0.182" stop-color="#000008"/><stop offset="0.205" stop-color="#4200fb"/><stop offset="0.227" stop-color="#5f04fc"/><stop offset="0.25" stop-color="#5d03fc"/><stop offset="0.273" stop-color="#5e04fc"/><stop offset="0.295" stop-color="#6405fa"/><stop offset="0.318" stop-color="#6a07f9"/><stop offset="0.341" stop-color="#6f08f8"/><stop offset="0.364" stop-color="#760af6"/><stop offset="0.386" stop-color="#800cf4"/><stop offset="0.409" stop-color="#9110f0"/><stop offset="0.432" stop-color="#9f16ea"/><stop offset="0.455" stop-color="#ab1ce4"/><stop offset="0.477" stop-color="#b520e0"/><stop offset="0.5" stop-color="#b922de"/><stop offset="0.523" stop-color="#b821df"/><stop offset="0.545" stop-color="#b21fe1"/><stop offset="0.568" stop-color="#a71ae6"/><stop offset="0.591" stop-color="#9a14ec"/><stop offset="0.614" stop-color="#8b0ff1"/><stop offset="0.636" stop-color="#7c0bf5"/><stop offset="0.659" stop-color="#7309f7"/><stop offset="0.682" stop-color="#6c07f8"/><stop offset="0.705" stop-color="#6505fa"/><stop offset="0.727" stop-color="#5b03fc"/><stop offset="0.75" stop-color="#5301fe"/><stop offset="0.773" stop-color="#4e00ff"/><stop offset="0.795" stop-color="#4e00fe"/><stop offset="0.818" stop-color="#0d00ac"/><stop offset="0.841" stop-color="#000008"/><stop offset="1" stop-color="#000008"/></linearGradient>
<linearGradient id="r67"><stop offset="0" stop-color="#000008"/><stop offset="0.182" stop-color="#000008"/><stop offset="0.205" stop-color="#00003a"/><stop offset="0.227" stop-color="#000040"/><stop offset="0.341" stop-color="#000040"/><stop offset="0.364" stop-color="#000041"/><stop offset="0.386" stop-color="#000042"/><stop offset="0.409" stop-color="#010046"/><stop offset="0.432" stop-color="#01004a"/><stop offset="0.455" stop-color="#02004d"/><stop offset="0.477" stop-color="#020050"/><stop offset="0.5" stop-color="#020052"/><stop offset="0.523" stop-color="#020052"/><stop offset="0.545" stop-color="#020050"/><stop offset="0.568" stop-color="#02004c"/><stop offset="0.591" stop-color="#010048"/><stop offset="0.614" stop-color="#010044"/><stop offset="0.636" stop-color="#000041"/><stop offset="0.659" stop-color="#000040"/><stop offset="0.682" stop-color="#000040"/><stop offset="0.705" stop-color="#00003f"/><stop offset="0.727" stop-color="#00003f"/><stop offset="0.75" stop-color="#00003e"/><stop offset="0.773" stop-color="#00003d"/><stop offset="0.795" stop-color="#00003d"/><stop offset="0.818" stop-color="#000024"/><stop offset="0.841" stop-color="#000008"/><stop offset="1" stop-color="#000008"/></linearGradient>
<linearGradient id="r69"><stop offset="0" stop-color="#000008"/><stop offset="0.159" stop-color="#000008"/><stop offset="0.182" stop-color="#000009"/><stop offset="0.205" stop-color="#00001b"/><stop offset="0.227" stop-color="#00001c"/><stop offset="0.795" stop-color="#00001c"/><stop offset="0.818" stop-color="#000016"/><stop offset="0.841" stop-color="#000008"/><stop offset="1" stop-color="#000008"/></linearGradient>
<linearGradient id="r70"><stop offset="0" stop-color="#000008"/><stop offset="0.159" stop-color="#000008"/><stop offset="0.182" stop-color="#000013"/><stop offset="0.205" stop-color="#1600d3"/><stop offset="0.227" stop-color="#1800d7"/><stop offset="0.795" stop-color="#1800d7"/><stop offset="0.818" stop-color="#0c00a1"/><stop offset="0.841" stop-color="#000008"/><stop offset="1" stop-color="#000008"/></linearGradient>
<linearGradient id="r71"><stop offset="0" stop-color="#000008"/><stop offset="0.159" stop-color="#000008"/><stop offset="0.182" stop-color="#000014"/><stop offset="0.205" stop-color="#1b00e2"/><stop offset="0.227" stop-color="#1d00e6"/><stop offset="0.795" stop-color="#1d00e6"/><stop offset="0.818" stop-color="#0e00b1"/><stop offset="0.841" stop-color="#000008"/><stop offset="1" stop-color="#000008"/></linearGradient>
<linearGradient id="r72"><stop offset="0" stop-color="#000008"/><stop offset="0.159" stop-color="#000008"/><stop offset="0.182" stop-color="#000014"/><stop offset="0.205" stop-color="#1b00e2"/><stop offset="0.227" stop-color="#1d00e6"/><stop offset="0.795" stop-color="#1d00e6"/><stop offset="0.818" stop-color="#0e00b1"/><stop offset="0.841" stop-color="#000008"/><stop offset="1" stop-color="#000008"/></linearGradient>
<linearGradient id="r73"><stop offset="0" stop-color="#000008"/><stop offset="0.159" stop-color="#000008"/><stop offset="0.182" stop-color="#000014"/><stop offset="0.205" stop-color="#1b00e2"/><stop offset="0.227" stop-color="#1d00e6"/><stop offset="0.795" stop-color="#1d00e6"/><stop offset="0.818" stop-color="#0e00b1"/><stop offset="0.841" stop-color="#000008"/><stop offset="1" stop-color="#000008"/></linearGradient>
<linearGradient id="r74"><stop offset="0" stop-color="#000008"/><stop offset="0.159" stop-color="#000008"/><stop offset="0.182" stop-color="#000014"/><stop offset="0.205" stop-color="#1b00e2"/><stop offset="0.227" stop-color="#1d00e6"/><stop offset="0.795" stop-color="#1d00e6"/><stop offset="0.818" stop-color="#0e00b0"/><stop offset="0.841" stop-color="#000008"/><stop offset="1" stop-color="#000008"/></linearGradient>
<linearGradient id="r75"><stop offset="0" stop-color="#000008"/><stop offset="0.159" stop-color="#000008"/><stop offset="0.182" stop-color="#000014"/><stop offset="0.205" stop-color="#1b00e1"/><stop offset="0.227" stop-color="#1c00e5"/><stop offset="0.295" stop-color="#1c00e5"/><stop offset="0.318" stop-color="#1c00e4"/><stop offset="0.364" stop-color="#1c00e4"/><stop offset="0.386" stop-color="#1c00e3"/><stop offset="0.591" stop-color="#1c00e3"/><stop offset="0.614" stop-color="#1c00e4"/><stop offset="0.659" stop-color="#1c00e4"/><stop offset="0.682" stop-color="#1c00e5"/><stop offset="0.75" stop-color="#1c00e5"/><stop offset="0.773" stop-color="#1d00e6"/><stop offset="0.795" stop-color="#1d00e6"/><stop offset="0.818" stop-color="#0e00b0"/><stop offset="0.841" stop-color="#000008"/><stop offset="1" stop-color="#000008"/></linearGradient>
<linearGradient id="r76"><stop offset="0" stop-color="#000008"/><stop offset="0.159" stop-color="#000008"/><stop offset="0.182" stop-color="#000014"/><stop offset="0.205" stop-color="#1a00df"/><stop offset="0.227" stop-color="#1c00e3"/><stop offset="0.25" stop-color="#1b00e2"/><stop offset="0.273" stop-color="#1b00e1"/><stop offset="0.295" stop-color="#1b00e0"/><stop offset="0.318" stop-color="#1a00df"/><stop offset="0.341" stop-color="#1a00dd"/><stop offset="0.364" stop-color="#1900dc"/><stop offset="0.386" stop-color="#1900db"/><stop offset="0.409" stop-color="#1900da"/><stop offset="0.432" stop-color="#1900da"/><stop offset="0.455" stop-color="#1800d9"/><stop offset="0.5" stop-color="#1800d9"/><stop offset="0.523" stop-color="#1900da"/><stop offset="0.545" stop-color="#1900da"/><stop offset="0.568" stop-color="#1900db"/><stop offset="0.591" stop-color="#1900dc"/><stop offset="0.614" stop-color="#1a00dd"/><stop offset="0.636" stop-color="#1a00de"/><stop offset="0.659" stop-color="#1a00df"/><stop offset="0.682" stop-color="#1b00e0"/><stop offset="0.705" stop-color="#1b00e1"/><stop offset="0.727" stop-color="#1b00e2"/><stop offset="0.75" stop-color="#1c00e3"/><stop offset="0.773" stop-color="#1c00e4"/><stop offset="0.795" stop-color="#1c00e4"/><stop offset="0.818" stop-color="#0e00af"/><stop offset="0.841" stop-color="#000008"/><stop offset="1" stop-color="#000008"/></linearGradient>
<linearGradient id="r77"><stop offset="0" stop-color="#000008"/><stop offset="0.159" stop-color="#000008"/><stop offset="0.182" stop-color="#000013"/><stop offset="0.205" stop-color="#1800d9"/><stop offset="0.227" stop-color="#1900dc"/><stop offset="0.25" stop-color="#1800d9"/><stop offset="0.273" stop-color="#1800d7"/><stop offset="0.295" stop-color="#1700d4"/><stop offset="0.318" stop-color="#1600d1"/><stop offset="0.341" stop-color="#1500ce"/><stop offset="0.364" stop-color="#1400cb"/><stop offset="0.386" stop-color="#1300c8"/><stop offset="0.409" stop-color="#1200c6"/><stop offset="0.432" stop-color="#1100c4"/><stop offset="0.455" stop-color="#1100c3"/><stop offset="0.477" stop-color="#1100c2"/><stop offset="0.5" stop-color="#1100c3"/><stop offset="0.523" stop-color="#1100c3"/><stop offset="0.545" stop-color="#1200c5"/><stop offset="0.568" stop-color="#1200c7"/><stop offset="0.591" stop-color="#1300ca"/><stop offset="0.614" stop-color="#1400cc"/><stop offset="0.636" stop-color="#1500cf"/><stop offset="0.659" stop-color="#1600d2"/><stop offset="0.682" stop-color="#1700d5"/><stop offset="0.705" stop-color="#1800d8"/><stop offset="0.727" stop-color="#1900da"/><stop offset="0.75" stop-color="#1a00dd"/><stop offset="0.773" stop-color="#1a00df"/><stop offset="0.795" stop-color="#1b00e0"/><stop offset="0.818" stop-color="#0d00ac"/><stop offset="0.841" stop-color="#000008"/><stop offset="1" stop-color="#000008"/></linearGradient>
<linearGradient id="r78"><stop offset="0" stop-color="#000008"/><stop offset="0.159" stop-color="#000008"/><stop offset="0.182" stop-color="#000013"/><stop offset="0.205" stop-color="#1500ce"/><stop offset="0.227" stop-color="#1500ce"/><stop offset="0.25" stop-color="#1300ca"/><stop offset="0.273" stop-color="#1200c5"/><stop offset="0.295" stop-color="#1000bf"/><stop offset="0.318" stop-color="#0f00b7"/><stop offset="0.341" stop-color="#0e00ae"/><stop offset="0.364" stop-color="#0d00a7"/><stop offset="0.386" stop-color="#0c009f"/><stop offset="0.409" stop-color="#0b0099"/><stop offset="0.432" stop-color="#0b0094"/><stop offset="0.455" stop-color="#0a0091"/><stop offset="0.477" stop-color="#0a0090"/><stop offset="0.5" stop-color="#0a0090"/><stop offset="0.523" stop-color="#0a0092"/><stop offset="0.545" stop-color="#0b0097"/><stop offset="0.568" stop-color="#0c009c"/><stop offset="0.591" stop-color="#0c00a3"/><stop offset="0.614" stop-color="#0d00ab"/><stop offset="0.636" stop-color="#0e00b3"/><stop offset="0.659" stop-color="#0f00bb"/><stop offset="0.682" stop-color="#1100c2"/><stop offset="0.705" stop-color="#1200c7"/><stop offset="0.727" stop-color="#1400cc"/><stop offset="0.75" stop-color="#1500d0"/><stop offset="0.773" stop-color="#1700d4"/><stop offset="0.795" stop-color="#1800d7"/><stop offset="0.818" stop-color="#0c00a3"/><stop offset="0.841" stop-color="#000008"/><stop offset="1" stop-color="#000008"/></linearGradient>
<linearGradient id="r79"><stop offset="0" stop-color="#000008"/><stop offset="0.159" stop-color="#000008"/><stop offset="0.182" stop-color="#000012"/><stop offset="0.205" stop-color="#1100c2"/><stop offset="0.227" stop-color="#1000c0"/><stop offset="0.25" stop-color="#0f00b7"/><stop offset="0.273" stop-color="#0e00ae"/><stop offset="0.295" stop-color="#0c00a3"/><stop offset="0.318" stop-color="#0b0098"/><stop offset="0.341" stop-color="#0a008c"/><stop offset="0.364" stop-color="#080081"/><stop offset="0.386" stop-color="#070077"/><stop offset="0.409" stop-color="#06006d"/><stop offset="0.432" stop-color="#050066"/><stop offset="0.455" stop-color="#040061"/><stop offset="0.477" stop-color="#04005f"/><stop offset="0.5" stop-color="#040060"/><stop offset="0.523" stop-color="#040064"/><stop offset="0.545" stop-color="#05006a"/><stop offset="0.568" stop-color="#060072"/><stop offset="0.591" stop-color="#08007c"/><stop offset="0.614" stop-color="#090087"/><stop offset="0.636" stop-color="#0a0092"/><stop offset="0.659" stop-color="#0c009e"/><stop offset="0.682" stop-color="#0d00a9"/><stop offset="0.705" stop-color="#0e00b3"/><stop offset="0.727" stop-color="#1000bc"/><stop offset="0.75" stop-color="#1100c3"/><stop offset="0.773" stop-color="#1300c8"/><stop offset="0.795" stop-color="#1400cd"/><stop offset="0.818" stop-color="#0b009a"/><stop offset="0.841" stop-color="#000008"/><stop offset="1" stop-color="#000008"/></linearGradient>
<linearGradient id="r80"><stop offset="0" stop-color="#000008"/><stop offset="0.159" stop-color="#000008"/><stop offset="0.182" stop-color="#000011"/><stop offset="0.205" stop-color="#0f00b9"/><stop offset="0.227" stop-color="#0f00b6"/><stop offset="0.25" stop-color="#0e00ad"/><stop offset="0.273" stop-color="#0c00a3"/><stop offset="0.295" stop-color="#0b0098"/><stop offset="0.318" stop-color="#0a008d"/><stop offset="0.341" stop-color="#080082"/><stop offset="0.364" stop-color="#070076"/><stop offset="0.386" stop-color="#05006b"/><stop offset="0.409" stop-color="#040062"/><stop offset="0.432" stop-color="#03005b"/><stop offset="0.455" stop-color="#030056"/><stop offset="0.477" stop-color="#020054"/><stop offset="0.5" stop-color="#030055"/><stop offset="0.523" stop-color="#030058"/><stop offset="0.545" stop-color="#04005e"/><stop offset="0.568" stop-color="#050067"/><stop offset="0.591" stop-color="#060071"/><stop offset="0.614" stop-color="#08007c"/><stop offset="0.636" stop-color="#090088"/><stop offset="0.659" stop-color="#0a0093"/><stop offset="0.682" stop-color="#0c009e"/><stop offset="0.705" stop-color="#0d00a8"/><stop offset="0.727" stop-color="#0e00b2"/><stop offset="0.75" stop-color="#0f00ba"/><stop offset="0.773" stop-color="#1000c1"/><stop offset="0.795" stop-color="#1200c5"/><stop offset="0.818" stop-color="#0a0092"/><stop offset="0.841" stop-color="#000008"/><stop offset="1" stop-color="#000008"/></linearGradient>
<linearGradient id="r81"><stop offset="0" stop-color="#000008"/><stop offset="0.159" stop-color="#000008"/><stop offset="0.182" stop-color="#000011"/><stop offset="0.205" stop-color="#0f00b7"/><stop offset="0.227" stop-color="#0f00b6"/><stop offset="0.25" stop-color="#0e00b0"/><stop offset="0.273" stop-color="#0d00a9"/><stop offset="0.295" stop-color="#0c00a1"/><stop offset="0.318" stop-color="#0b0099"/><stop offset="0.341" stop-color="#0a0091"/><stop offset="0.364" stop-color="#090089"/><stop offset="0.386" stop-color="#080081"/><stop offset="0.409" stop-color="#07007b"/><stop offset="0.432" stop-color="#070076"/><stop offset="0.455" stop-color="#060072"/><stop offset="0.477" stop-color="#060071"/><stop offset="0.5" stop-color="#060071"/><stop offset="0.523" stop-color="#060074"/><stop offset="0.545" stop-color="#070078"/><stop offset="0.568" stop-color="#08007e"/><stop offset="0.591" stop-color="#090085"/><stop offset="0.614" stop-color="#0a008d"/><stop offset="0.636" stop-color="#0b0095"/><stop offset="0.659" stop-color="#0c009d"/><stop offset="0.682" stop-color="#0d00a5"/><stop offset="0.705" stop-color="#0e00ad"/><stop offset="0.727" stop-color="#0e00b4"/><stop offset="0.75" stop-color="#0f00ba"/><stop offset="0.773" stop-color="#1000bf"/><stop offset="0.795" stop-color="#1100c2"/><stop offset="0.818" stop-color="#0a008e"/><stop offset="0.841" stop-color="#000008"/><stop offset="1" stop-color="#000008"/></linearGradient>
<linearGradient id="r82"><stop offset="0" stop-color="#000008"/><stop offset="0.159" stop-color="#000008"/><stop offset="0.182" stop-color="#000011"/><stop offset="0.205" stop-color="#0e00ad"/><stop offset="0.227" stop-color="#0e00b0"/><stop offset="0.273" stop-color="#0e00b0"/><stop offset="0.295" stop-color="#0e00af"/><stop offset="0.318" stop-color="#0e00ad"/><stop offset="0.341" stop-color="#0d00a9"/><stop offset="0.364" stop-color="#0d00a5"/><stop offset="0.386" stop-color="#0c00a1"/><stop offset="0.409" stop-color="#0c009e"/><stop offset="0.432" stop-color="#0b009b"/><stop offset="0.455" stop-color="#0b0099"/><stop offset="0.5" stop-color="#0b0099"/><stop offset="0.523" stop-color="#0b009a"/><stop offset="0.545" stop-color="#0c009c"/><stop offset="0.568" stop-color="#0c009f"/><stop offset="0.591" stop-color="#0c00a3"/><stop offset="0.614" stop-color="#0d00a7"/><stop offset="0.636" stop-color="#0d00ab"/><stop offset="0.659" stop-color="#0e00af"/><stop offset="0.682" stop-color="#0e00b4"/><stop offset="0.705" stop-color="#0f00b7"/><stop offset="0.727" stop-color="#0f00b8"/><stop offset="0.75" stop-color="#0f00b7"/><stop offset="0.773" stop-color="#0f00b6"/><stop offset="0.795" stop-color="#0f00b6"/><stop offset="0.818" stop-color="#080083"/><stop offset="0.841" stop-color="#000008"/><stop offset="1" stop-color="#000008"/></linearGradient>
<linearGradient id="r83"><stop offset="0" stop-color="#000008"/><stop offset="0.159" stop-color="#000008"/><stop offset="0.182" stop-color="#00000f"/><stop offset="0.205" stop-color="#0a0090"/><stop offset="0.227" stop-color="#0b0099"/><stop offset="0.25" stop-color="#0c00a2"/><stop offset="0.273" stop-color="#0e00ad"/><stop offset="0.295" stop-color="#0f00b7"/><stop offset="0.318" stop-color="#1000bc"/><stop offset="0.341" stop-color="#1000bc"/><stop offset="0.364" stop-color="#0f00bb"/><stop offset="0.386" stop-color="#0f00b9"/><stop offset="0.409" stop-color="#0f00b8"/><stop offset="0.432" stop-color="#0f00b7"/><stop offset="0.455" stop-color="#0f00b6"/><stop offset="0.5" stop-color="#0f00b6"/><stop offset="0.523" stop-color="#0f00b7"/><stop offset="0.545" stop-color="#0f00b8"/><stop offset="0.568" stop-color="#0f00b9"/><stop offset="0.591" stop-color="#0f00ba"/><stop offset="0.614" stop-color="#0f00bc"/><stop offset="0.636" stop-color="#1000bd"/><stop offset="0.659" stop-color="#1000bf"/><stop offset="0.682" stop-color="#1000c0"/><stop offset="0.705" stop-color="#1000be"/><stop offset="0.727" stop-color="#0f00b7"/><stop offset="0.75" stop-color="#0d00ac"/><stop offset="0.773" stop-color="#0c00a1"/><stop offset="0.795" stop-color="#0b0098"/><stop offset="0.818" stop-color="#05006a"/><stop offset="0.841" stop-color="#000008"/><stop offset="1" stop-color="#000008"/></linearGradient>
<linearGradient id="r84"><stop offset="0" stop-color="#000008"/><stop offset="0.159" stop-color="#000008"/><stop offset="0.182" stop-color="#00000e"/><stop offset="0.205" stop-color="#070079"/><stop offset="0.227" stop-color="#090085"/><stop offset="0.25" stop-color="#0b0095"/><stop offset="0.273" stop-color="#0d00a8"/><stop offset="0.295" stop-color="#0f00b9"/><stop offset="0.318" stop-color="#1100c3"/><stop offset="0.341" stop-color="#1100c4"/><stop offset="0.364" stop-color="#1100c4"/><stop offset="0.386" stop-color="#1100c3"/><stop offset="0.591" stop-color="#1100c3"/><stop offset="0.614" stop-color="#1100c4"/><stop offset="0.659" stop-color="#1100c4"/><stop offset="0.682" stop-color="#1200c5"/><stop offset="0.705" stop-color="#1000c1"/><stop offset="0.727" stop-color="#0e00b4"/><stop offset="0.75" stop-color="#0c00a2"/><stop offset="0.773" stop-color="#0a008f"/><stop offset="0.795" stop-color="#080081"/><stop offset="0.818" stop-color="#030056"/><stop offset="0.841" stop-color="#000008"/><stop offset="1" stop-color="#000008"/></linearGradient>
<linearGradient id="r85"><stop offset="0" stop-color="#000008"/><stop offset="0.159" stop-color="#000008"/><stop offset="0.182" stop-color="#00000e"/><stop offset="0.205" stop-color="#070077"/><stop offset="0.227" stop-color="#090084"/><stop offset="0.25" stop-color="#0b0095"/><stop offset="0.273" stop-color="#0d00a8"/><stop offset="0.295" stop-color="#0f00ba"/><stop offset="0.318" stop-color="#1100c4"/><stop offset="0.341" stop-color="#1200c6"/><stop offset="0.682" stop-color="#1200c6"/><stop offset="0.705" stop-color="#1100c2"/><stop offset="0.727" stop-color="#0f00b5"/><stop offset="0.75" stop-color="#0c00a2"/><stop offset="0.773" stop-color="#0a008f"/><stop offset="0.795" stop-color="#080080"/><stop offset="0.818" stop-color="#030055"/><stop offset="0.841" stop-color="#000008"/><stop offset="1" stop-color="#000008"/></linearGradient>
<linearGradient id="r86"><stop offset="0" stop-color="#000008"/><stop offset="0.159" stop-color="#000008"/><stop offset="0.182" stop-color="#00000e"/><stop offset="0.205" stop-color="#070074"/><stop offset="0.227" stop-color="#080081"/><stop offset="0.25" stop-color="#0a0091"/><stop offset="0.273" stop-color="#0d00a5"/><stop offset="0.295" stop-color="#0f00b6"/><stop offset="0.318" stop-color="#1000c1"/><stop offset="0.341" stop-color="#1100c3"/><stop offset="0.682" stop-color="#1100c3"/><stop offset="0.705" stop-color="#1000bf"/><stop offset="0.727" stop-color="#0e00b1"/><stop offset="0.75" stop-color="#0c009e"/><stop offset="0.773" stop-color="#09008b"/><stop offset="0.795" stop-color="#08007d"/><stop offset="0.818" stop-color="#020053"/><stop offset="0.841" stop-color="#000008"/><stop offset="1" stop-color="#000008"/></linearGradient>
<linearGradient id="r87"><stop offset="0" stop-color="#000008"/><stop offset="0.159" stop-color="#000008"/><stop offset="0.182" stop-color="#00000d"/><stop offset="0.205" stop-color="#05006b"/><stop offset="0.227" stop-color="#070078"/><stop offset="0.25" stop-color="#090087"/><stop offset="0.273" stop-color="#0b0099"/><stop offset="0.295" stop-color="#0d00a9"/><stop offset="0.318" stop-color="#0f00b4"/><stop offset="0.341" stop-color="#0f00b6"/><stop offset="0.682" stop-color="#0f00b6"/><stop offset="0.705" stop-color="#0e00b1"/><stop offset="0.727" stop-color="#0d00a4"/><stop offset="0.75" stop-color="#0a0093"/><stop offset="0.773" stop-color="#080082"/><stop offset="0.795" stop-color="#060073"/><stop offset="0.818" stop-color="#02004d"/><stop offset="0.841" stop-color="#000008"/><stop offset="1" stop-color="#000008"/></linearGradient>
<linearGradient id="r88"><stop offset="0" stop-color="#000008"/><stop offset="0.159" stop-color="#000008"/><stop offset="0.182" stop-color="#00000d"/><stop offset="0.205" stop-color="#04005f"/><stop offset="0.227" stop-color="#05006a"/><stop offset="0.25" stop-color="#070078"/><stop offset="0.273" stop-color="#090089"/><stop offset="0.295" stop-color="#0b0097"/><stop offset="0.318" stop-color="#0c00a1"/><stop offset="0.341" stop-color="#0c00a3"/><stop offset="0.682" stop-color="#0c00a3"/><stop offset="0.705" stop-color="#0c009f"/><stop offset="0.727" stop-color="#0a0093"/><stop offset="0.75" stop-color="#080083"/><stop offset="0.773" stop-color="#060073"/><stop offset="0.795" stop-color="#050066"/><stop offset="0.818" stop-color="#000044"/><stop offset="0.841" stop-color="#000008"/><stop offset="1" stop-color="#000008"/></linearGradient>
<linearGradient id="r89"><stop offset="0" stop-color="#000008"/><stop offset="0.159" stop-color="#000008"/><stop offset="0.182" stop-color="#00000c"/><stop offset="0.205" stop-color="#020052"/><stop offset="0.227" stop-color="#03005c"/><stop offset="0.25" stop-color="#050068"/><stop offset="0.273" stop-color="#070077"/><stop offset="0.295" stop-color="#090084"/><stop offset="0.318" stop-color="#0a008d"/><stop offset="0.341" stop-color="#0a008f"/><stop offset="0.682" stop-color="#0a008f"/><stop offset="0.705" stop-color="#09008b"/><stop offset="0.727" stop-color="#080080"/><stop offset="0.75" stop-color="#060072"/><stop offset="0.773" stop-color="#040064"/><stop offset="0.795" stop-color="#030059"/><stop offset="0.818" stop-color="#00003b"/><stop offset="0.841" stop-color="#000008"/><stop offset="1" stop-color="#000008"/></linearGradient>
<linearGradient id="r90"><stop offset="0" stop-color="#000008"/><stop offset="0.159" stop-color="#000008"/><stop offset="0.182" stop-color="#00000c"/><stop offset="0.205" stop-color="#010047"/><stop offset="0.227" stop-color="#02004f"/><stop offset="0.25" stop-color="#03005a"/><stop offset="0.273" stop-color="#050067"/><stop offset="0.295" stop-color="#060073"/><stop offset="0.318" stop-color="#07007b"/><stop offset="0.341" stop-color="#08007c"/><stop offset="0.682" stop-color="#08007c"/><stop offset="0.705" stop-color="#070079"/><stop offset="0.727" stop-color="#06006f"/><stop offset="0.75" stop-color="#040063"/><stop offset="0.773" stop-color="#030056"/><stop offset="0.795" stop-color="#02004c"/><stop offset="0.818" stop-color="#000035"/><stop offset="0.841" stop-color="#000008"/><stop offset="1" stop-color="#000008"/></linearGradient>
<linearGradient id="r91"><stop offset="0" stop-color="#000008"/><stop offset="0.159" stop-color="#000008"/><stop offset="0.182" stop-color="#00000a"/><stop offset="0.205" stop-color="#000031"/><stop offset="0.227" stop-color="#000035"/><stop offset="0.25" stop-color="#00003b"/><stop offset="0.273" stop-color="#000043"/><stop offset="0.295" stop-color="#01004b"/><stop offset="0.318" stop-color="#020050"/><stop offset="0.341" stop-color="#020051"/><stop offset="0.682" stop-color="#020051"/><stop offset="0.705" stop-color="#02004e"/><stop offset="0.727" stop-color="#010048"/><stop offset="0.75" stop-color="#000040"/><stop offset="0.773" stop-color="#000039"/><stop offset="0.795" stop-color="#000034"/><stop offset="0.818" stop-color="#000026"/><stop offset="0.841" stop-color="#000008"/><stop offset="1" stop-color="#000008"/></linearGradient>
<linearGradient id="r92"><stop offset="0" stop-color="#000008"/><stop offset="0.159" stop-color="#000008"/><stop offset="0.182" stop-color="#000009"/><stop offset="0.205" stop-color="#000017"/><stop offset="0.227" stop-color="#000019"/><stop offset="0.25" stop-color="#00001b"/><stop offset="0.273" stop-color="#00001e"/><stop offset="0.295" stop-color="#000020"/><stop offset="0.318" stop-color="#000022"/><stop offset="0.682" stop-color="#000022"/><stop offset="0.705" stop-color="#000021"/><stop offset="0.727" stop-color="#00001f"/><stop offset="0.75" stop-color="#00001d"/><stop offset="0.773" stop-color="#00001a"/><stop offset="0.795" stop-color="#000018"/><stop offset="0.818" stop-color="#000013"/><stop offset="0.841" stop-color="#000008"/><stop offset="1" stop-color="#000008"/></linearGradient>
<linearGradient id="r95"><stop offset="0" stop-color="#000008"/><stop offset="0.182" stop-color="#000008"/><stop offset="0.205" stop-color="#00000b"/><stop offset="0.227" stop-color="#00000d"/><stop offset="0.25" stop-color="#00000e"/><stop offset="0.773" stop-color="#00000e"/><stop offset="0.795" stop-color="#00000d"/><stop offset="0.818" stop-color="#00000a"/><stop offset="0.841" stop-color="#000008"/><stop offset="1" stop-color="#000008"/></linearGradient>
<linearGradient id="r96"><stop offset="0" stop-color="#000008"/><stop offset="0.159" stop-color="#000008"/><stop offset="0.182" stop-color="#000009"/><stop offset="0.205" stop-color="#000023"/><stop offset="0.227" stop-color="#00003d"/><stop offset="0.25" stop-color="#00003e"/><stop offset="0.773" stop-color="#00003e"/><stop offset="0.795" stop-color="#000037"/><stop offset="0.818" stop-color="#000017"/><stop offset="0.841" stop-color="#000008"/><stop offset="1" stop-color="#000008"/></linearGradient>
<linearGradient id="r97"><stop offset="0" stop-color="#000008"/><stop offset="0.159" stop-color="#000008"/><stop offset="0.182" stop-color="#000009"/><stop offset="0.205" stop-color="#000025"/><stop offset="0.227" stop-color="#000043"/><stop offset="0.25" stop-color="#010045"/><stop offset="0.773" stop-color="#010045"/><stop offset="0.795" stop-color="#00003b"/><stop offset="0.818" stop-color="#000019"/><stop offset="0.841" stop-color="#000008"/><stop offset="1" stop-color="#000008"/></linearGradient>
<linearGradient id="r98"><stop offset="0" stop-color="#000008"/><stop offset="0.159" stop-color="#000008"/><stop offset="0.182" stop-color="#000009"/><stop offset="0.205" stop-color="#000025"/><stop offset="0.227" stop-color="#000042"/><stop offset="0.25" stop-color="#010044"/><stop offset="0.773" stop-color="#010044"/><stop offset="0.795" stop-color="#00003b"/><stop offset="0.818" stop-color="#000019"/><stop offset="0.841" stop-color="#000008"/><stop offset="1" stop-color="#000008"/></linearGradient>
<linearGradient id="r99"><stop offset="0" stop-color="#000008"/><stop offset="0.159" stop-color="#000008"/><stop offset="0.182" stop-color="#000009"/><stop offset="0.205" stop-color="#000025"/><stop offset="0.227" stop-color="#000042"/><stop offset="0.25" stop-color="#000043"/><stop offset="0.773" stop-color="#000043"/><stop offset="0.795" stop-color="#00003b"/><stop offset="0.818" stop-color="#000019"/><stop offset="0.841" stop-color="#000008"/><stop offset="1" stop-color="#000008"/></linearGradient>
<linearGradient id="r100"><stop offset="0" stop-color="#000008"/><stop offset="0.159" stop-color="#000008"/><stop offset="0.182" stop-color="#000009"/><stop offset="0.205" stop-color="#000024"/><stop offset="0.227" stop-color="#000041"/><stop offset="0.25" stop-color="#000043"/><stop offset="0.773" stop-color="#000043"/><stop offset="0.795" stop-color="#00003a"/><stop offset="0.818" stop-color="#000018"/><stop offset="0.841" stop-color="#000008"/><stop offset="1" stop-color="#000008"/></linearGradient>
<linearGradient id="r101"><stop offset="0" stop-color="#000008"/><stop offset="0.159" stop-color="#000008"/><stop offset="0.182" stop-color="#000009"/><stop offset="0.205" stop-color="#000024"/><stop offset="0.227" stop-color="#000040"/><stop offset="0.25" stop-color="#000041"/><stop offset="0.773" stop-color="#000041"/><stop offset="0.795" stop-color="#000039"/><stop offset="0.818" stop-color="#000018"/><stop offset="0.841" stop-color="#000008"/><stop offset="1" stop-color="#000008"/></linearGradient>
<linearGradient id="r102"><stop offset="0" stop-color="#000008"/><stop offset="0.159" stop-color="#000008"/><stop offset="0.182" stop-color="#000009"/><stop offset="0.205" stop-color="#000023"/><stop offset="0.227" stop-color="#00003f"/><stop offset="0.25" stop-color="#000040"/><stop offset="0.773" stop-color="#000040"/><stop offset="0.795" stop-color="#000038"/><stop offset="0.818" stop-color="#000018"/><stop offset="0.841" stop-color="#000008"/><stop offset="1" stop-color="#000008"/></linearGradient>
<linearGradient id="r103"><stop offset="0" stop-color="#000008"/><stop offset="0.159" stop-color="#000008"/><stop offset="0.182" stop-color="#000009"/><stop offset="0.205" stop-color="#000023"/><stop offset="0.227" stop-color="#00003e"/><stop offset="0.25" stop-color="#00003f"/><stop offset="0.773" stop-color="#00003f"/><stop offset="0.795" stop-color="#000037"/><stop offset="0.818" stop-color="#000018"/><stop offset="0.841" stop-color="#000008"/><stop offset="1" stop-color="#000008"/></linearGradient>
<linearGradient id="r104"><stop offset="0" stop-color="#000008"/><stop offset="0.159" stop-color="#000008"/><stop offset="0.182" stop-color="#000009"/><stop offset="0.205" stop-color="#000022"/><stop offset="0.227" stop-color="#00003c"/><stop offset="0.25" stop-color="#00003e"/><stop offset="0.773" stop-color="#00003e"/><stop offset="0.795" stop-color="#000036"/><stop offset="0.818" stop-color="#000017"/><stop offset="0.841" stop-color="#000008"/><stop offset="1" stop-color="#000008"/></linearGradient>
<linearGradient id="r105"><stop offset="0" stop-color="#000008"/><stop offset="0.159" stop-color="#000008"/><stop offset="0.182" stop-color="#000009"/><stop offset="0.205" stop-color="#000022"/><stop offset="0.227" stop-color="#00003b"/><stop offset="0.25" stop-color="#00003d"/><stop offset="0.773" stop-color="#00003d"/><stop offset="0.795" stop-color="#000035"/><stop offset="0.818" stop-color="#000017"/><stop offset="0.841" stop-color="#000008"/><stop offset="1" stop-color="#000008"/></linearGradient>
<linearGradient id="r106"><stop offset="0" stop-color="#000008"/><stop offset="0.159" stop-color="#000008"/><stop offset="0.182" stop-color="#000009"/><stop offset="0.205" stop-color="#000021"/><stop offset="0.227" stop-color="#00003a"/><stop offset="0.25" stop-color="#00003b"/><stop offset="0.773" stop-color="#00003b"/><stop offset="0.795" stop-color="#000034"/><stop offset="0.818" stop-color="#000016"/><stop offset="0.841" stop-color="#000008"/><stop offset="1" stop-color="#000008"/></linearGradient>
<linearGradient id="r107"><stop offset="0" stop-color="#000008"/><stop offset="0.159" stop-color="#000008"/><stop offset="0.182" stop-color="#000009"/><stop offset="0.205" stop-color="#000020"/><stop offset="0.227" stop-color="#000038"/><stop offset="0.25" stop-color="#00003a"/><stop offset="0.773" stop-color="#00003a"/><stop offset="0.795" stop-color="#000033"/><stop offset="0.818" stop-color="#000016"/><stop offset="0.841" stop-color="#000008"/><stop offset="1" stop-color="#000008"/></linearGradient>
<linearGradient id="r108"><stop offset="0" stop-color="#000008"/><stop offset="0.159" stop-color="#000008"/><stop offset="0.182" stop-color="#000009"/><stop offset="0.205" stop-color="#000020"/><stop offset="0.227" stop-color="#000037"/><stop offset="0.25" stop-color="#000038"/><stop offset="0.773" stop-color="#000038"/><stop offset="0.795" stop-color="#000031"/><stop offset="0.818" stop-color="#000016"/><stop offset="0.841" stop-color="#000008"/><stop offset="1" stop-color="#000008"/></linearGradient>
<linearGradient id="r109"><stop offset="0" stop-color="#000008"/><stop offset="0.159" stop-color="#000008"/><stop offset="0.182" stop-color="#000009"/><stop offset="0.205" stop-color="#00001f"/><stop offset="0.227" stop-color="#000036"/><stop offset="0.25" stop-color="#000037"/><stop offset="0.773" stop-color="#000037"/><stop offset="0.795" stop-color="#000030"/><stop offset="0.818" stop-color="#000015"/><stop offset="0.841" stop-color="#000008"/><stop offset="1" stop-color="#000008"/></linearGradient>
<linearGradient id="r110"><stop offset="0" stop-color="#000008"/><stop offset="0.159" stop-color="#000008"/><stop offset="0.182" stop-color="#000009"/><stop offset="0.205" stop-color="#00001e"/><stop offset="0.227" stop-color="#000034"/><stop offset="0.25" stop-color="#000035"/><stop offset="0.773" stop-color="#000035"/><stop offset="0.795" stop-color="#00002f"/><stop offset="0.818" stop-color="#000015"/><stop offset="0.841" stop-color="#000008"/><stop offset="1" stop-color="#000008"/></linearGradient>
<linearGradient id="r111"><stop offset="0" stop-color="#000008"/><stop offset="0.159" stop-color="#000008"/><stop offset="0.182" stop-color="#000009"/><stop offset="0.205" stop-color="#00001d"/><stop offset="0.227" stop-color="#000033"/><stop offset="0.25" stop-color="#000034"/><stop offset="0.773" stop-color="#000034"/><stop offset="0.795" stop-color="#00002e"/><stop offset="0.818" stop-color="#000014"/><stop offset="0.841" stop-color="#000008"/><stop offset="1" stop-color="#000008"/></linearGradient>
<linearGradient id="r112"><stop offset="0" stop-color="#000008"/><stop offset="0.159" stop-color="#000008"/><stop offset="0.182" stop-color="#000009"/><stop offset="0.205" stop-color="#00001d"/><stop offset="0.227" stop-color="#000031"/><stop offset="0.25" stop-color="#000032"/><stop offset="0.773" stop-color="#000032"/><stop offset="0.795" stop-color="#00002c"/><stop offset="0.818" stop-color="#000014"/><stop offset="0.841" stop-color="#000008"/><stop offset="1" stop-color="#000008"/></linearGradient>
<linearGradient id="r113"><stop offset="0" stop-color="#000008"/><stop offset="0.159" stop-color="#000008"/><stop offset="0.182" stop-color="#000009"/><stop offset="0.205" stop-color="#00001c"/><stop offset="0.227" stop-color="#000030"/><stop offset="0.25" stop-color="#000031"/><stop offset="0.773" stop-color="#000031"/><stop offset="0.795" stop-color="#00002b"/><stop offset="0.818" stop-color="#000014"/><stop offset="0.841" stop-color="#000008"/><stop offset="1" stop-color="#000008"/></linearGradient>
<linearGradient id="r114"><stop offset="0" stop-color="#000008"/><stop offset="0.159" stop-color="#000008"/><stop offset="0.182" stop-color="#000009"/><stop offset="0.205" stop-color="#00001b"/><stop offset="0.227" stop-color="#00002e"/><stop offset="0.25" stop-color="#00002f"/><stop offset="0.773" stop-color="#00002f"/><stop offset="0.795" stop-color="#00002a"/><stop offset="0.818" stop-color="#000013"/><stop offset="0.841" stop-color="#000008"/><stop offset="1" stop-color="#000008"/></linearGradient>
<linearGradient id="r115"><stop offset="0" stop-color="#000008"/><stop offset="0.159" stop-color="#000008"/><stop offset="0.182" stop-color="#000009"/><stop offset="0.205" stop-color="#00001b"/><stop offset="0.227" stop-color="#00002d"/><stop offset="0.25" stop-color="#00002e"/><stop offset="0.773" stop-color="#00002e"/><stop offset="0.795" stop-color="#000029"/><stop offset="0.818" stop-color="#000013"/><stop offset="0.841" stop-color="#000008"/><stop offset="1" stop-color="#000008"/></linearGradient>
<linearGradient id="r116"><stop offset="0" stop-color="#000008"/><stop offset="0.159" stop-color="#000008"/><stop offset="0.182" stop-color="#000009"/><stop offset="0.205" stop-color="#00001a"/><stop offset="0.227" stop-color="#00002c"/><stop offset="0.25" stop-color="#00002d"/><stop offset="0.773" stop-color="#00002d"/><stop offset="0.795" stop-color="#000028"/><stop offset="0.818" stop-color="#000012"/><stop offset="0.841" stop-color="#000008"/><stop offset="1" stop-color="#000008"/></linearGradient>
<linearGradient id="r117"><stop offset="0" stop-color="#000008"/><stop offset="0.159" stop-color="#000008"/><stop offset="0.182" stop-color="#000009"/><stop offset="0.205" stop-color="#000019"/><stop offset="0.227" stop-color="#00002b"/><stop offset="0.25" stop-color="#00002c"/><stop offset="0.773" stop-color="#00002c"/><stop offset="0.795" stop-color="#000027"/><stop offset="0.818" stop-color="#000012"/><stop offset="0.841" stop-color="#000008"/><stop offset="1" stop-color="#000008"/></linearGradient>
<linearGradient id="r118"><stop offset="0" stop-color="#000008"/><stop offset="0.159" stop-color="#000008"/><stop offset="0.182" stop-color="#000009"/><stop offset="0.205" stop-color="#000019"/><stop offset="0.227" stop-color="#00002a"/><stop offset="0.25" stop-color="#00002b"/><stop offset="0.773" stop-color="#00002b"/><stop offset="0.795" stop-color="#000026"/><stop offset="0.818" stop-color="#000012"/><stop offset="0.841" stop-color="#000008"/><stop offset="1" stop-color="#000008"/></linearGradient>
<linearGradient id="r119"><stop offset="0" stop-color="#000008"/><stop offset="0.159" stop-color="#000008"/><stop offset="0.182" stop-color="#000009"/><stop offset="0.205" stop-color="#000019"/><stop offset="0.227" stop-color="#000029"/><stop offset="0.25" stop-color="#00002a"/><stop offset="0.773" stop-color="#00002a"/><stop offset="0.795" stop-color="#000025"/><stop offset="0.818" stop-color="#000012"/><stop offset="0.841" stop-color="#000008"/><stop offset="1" stop-color="#000008"/></linearGradient>
<linearGradient id="r120"><stop offset="0" stop-color="#000008"/><stop offset="0.159" stop-color="#000008"/><stop offset="0.182" stop-color="#000009"/><stop offset="0.205" stop-color="#000018"/><stop offset="0.227" stop-color="#000028"/><stop offset="0.25" stop-color="#000029"/><stop offset="0.773" stop-color="#000029"/><stop offset="0.795" stop-color="#000025"/><stop offset="0.818" stop-color="#000011"/><stop offset="0.841" stop-color="#000008"/><stop offset="1" stop-color="#000008"/></linearGradient>
<linearGradient id="r121"><stop offset="0" stop-color="#000008"/><stop offset="0.159" stop-color="#000008"/><stop offset="0.182" stop-color="#000009"/><stop offset="0.205" stop-color="#000018"/><stop offset="0.227" stop-color="#000028"/><stop offset="0.25" stop-color="#000029"/><stop offset="0.773" stop-color="#000029"/><stop offset="0.795" stop-color="#000024"/><stop offset="0.818" stop-color="#000011"/><stop offset="0.841" stop-color="#000008"/><stop offset="1" stop-color="#000008"/></linearGradient>
<linearGradient id="r122"><stop offset="0" stop-color="#000008"/><stop offset="0.159" stop-color="#000008"/><stop offset="0.182" stop-color="#000009"/><stop offset="0.205" stop-color="#000018"/><stop offset="0.227" stop-color="#000027"/><stop offset="0.25" stop-color="#000028"/><stop offset="0.773" stop-color="#000028"/><stop offset="0.795" stop-color="#000024"/><stop offset="0.818" stop-color="#000011"/><stop offset="0.841" stop-color="#000008"/><stop offset="1" stop-color="#000008"/></linearGradient>
<linearGradient id="r123"><stop offset="0" stop-color="#000008"/><stop offset="0.159" stop-color="#000008"/><stop offset="0.182" stop-color="#000009"/><stop offset="0.205" stop-color="#000018"/><stop offset="0.227" stop-color="#000027"/><stop offset="0.25" stop-color="#000028"/><stop offset="0.773" stop-color="#000028"/><stop offset="0.795" stop-color="#000024"/><stop offset="0.818" stop-color="#000011"/><stop offset="0.841" stop-color="#000008"/><stop offset="1" stop-color="#000008"/></linearGradient>
<linearGradient id="r124"><stop offset="0" stop-color="#000008"/><stop offset="0.159" stop-color="#000008"/><stop offset="0.182" stop-color="#000009"/><stop offset="0.205" stop-color="#000018"/><stop offset="0.227" stop-color="#000027"/><stop offset="0.25" stop-color="#000028"/><stop offset="0.773" stop-color="#000028"/><stop offset="0.795" stop-color="#000024"/><stop offset="0.818" stop-color="#000011"/><stop offset="0.841" stop-color="#000008"/><stop offset="1" stop-color="#000008"/></linearGradient>
<linearGradient id="r125"><stop offset="0" stop-color="#000008"/><stop offset="0.159" stop-color="#000008"/><stop offset="0.182" stop-color="#000009"/><stop offset="0.205" stop-color="#000018"/><stop offset="0.227" stop-color="#000027"/><stop offset="0.25" stop-color="#000028"/><stop offset="0.773" stop-color="#000028"/><stop offset="0.795" stop-color="#000024"/><stop offset="0.818" stop-color="#000011"/><stop offset="0.841" stop-color="#000008"/><stop offset="1" stop-color="#000008"/></linearGradient>
<linearGradient id="r126"><stop offset="0" stop-color="#000008"/><stop offset="0.159" stop-color="#000008"/><stop offset="0.182" stop-color="#000009"/><stop offset="0.205" stop-color="#000018"/><stop offset="0.227" stop-color="#000027"/><stop offset="0.25" stop-color="#000028"/><stop offset="0.773" stop-color="#000028"/><stop offset="0.795" stop-color="#000024"/><stop offset="0.818" stop-color="#000011"/><stop offset="0.841" stop-color="#000008"/><stop offset="1" stop-color="#000008"/></linearGradient>
<linearGradient id="r127"><stop offset="0" stop-color="#000008"/><stop offset="0.159" stop-color="#000008"/><stop offset="0.182" stop-color="#000009"/><stop offset="0.205" stop-color="#000018"/><stop offset="0.227" stop-color="#000027"/><stop offset="0.25" stop-color="#000028"/><stop offset="0.773" stop-color="#000028"/><stop offset="0.795" stop-color="#000024"/><stop offset="0.818" stop-color="#000011"/><stop offset="0.841" stop-color="#000008"/><stop offset="1" stop-color="#000008"/></linearGradient>
<linearGradient id="r128"><stop offset="0" stop-color="#000008"/><stop offset="0.159" stop-color="#000008"/><stop offset="0.182" stop-color="#000009"/><stop offset="0.205" stop-color="#000018"/><stop offset="0.227" stop-color="#000027"/><stop offset="0.25" stop-color="#000028"/><stop offset="0.773" stop-color="#000028"/><stop offset="0.795" stop-color="#000024"/><stop offset="0.818" stop-color="#000011"/><stop offset="0.841" stop-color="#000008"/><stop offset="1" stop-color="#000008"/></linearGradient>
<linearGradient id="r129"><stop offset="0" stop-color="#000008"/><stop offset="0.159" stop-color="#000008"/><stop offset="0.182" stop-color="#000009"/><stop offset="0.205" stop-color="#000018"/><stop offset="0.227" stop-color="#000027"/><stop offset="0.25" stop-color="#000028"/><stop offset="0.773" stop-color="#000028"/><stop offset="0.795" stop-color="#000024"/><stop offset="0.818" stop-color="#000011"/><stop offset="0.841" stop-color="#000008"/><stop offset="1" stop-color="#000008"/></linearGradient>
<linearGradient id="r130"><stop offset="0" stop-color="#000008"/><stop offset="0.159" stop-color="#000008"/><stop offset="0.182" stop-color="#000009"/><stop offset="0.205" stop-color="#000018"/><stop offset="0.227" stop-color="#000027"/><stop offset="0.25" stop-color="#000028"/><stop offset="0.773" stop-color="#000028"/><stop offset="0.795" stop-color="#000024"/><stop offset="0.818" stop-color="#000011"/><stop offset="0.841" stop-color="#000008"/><stop offset="1" stop-color="#000008"/></linearGradient>
<linearGradient id="r131"><stop offset="0" stop-color="#000008"/><stop offset="0.159" stop-color="#000008"/><stop offset="0.182" stop-color="#000009"/><stop offset="0.205" stop-color="#000018"/><stop offset="0.227" stop-color="#000027"/><stop offset="0.25" stop-color="#000028"/><stop offset="0.773" stop-color="#000028"/><stop offset="0.795" stop-color="#000024"/><stop offset="0.818" stop-color="#000011"/><stop offset="0.841" stop-color="#000008"/><stop offset="1" stop-color="#000008"/></linearGradient>
<linearGradient id="r132"><stop offset="0" stop-color="#000008"/><stop offset="0.159" stop-color="#000008"/><stop offset="0.182" stop-color="#000009"/><stop offset="0.205" stop-color="#000018"/><stop offset="0.227" stop-color="#000027"/><stop offset="0.25" stop-color="#000028"/><stop offset="0.773" stop-color="#000028"/><stop offset="0.795" stop-color="#000024"/><stop offset="0.818" stop-color="#000011"/><stop offset="0.841" stop-color="#000008"/><stop offset="1" stop-color="#000008"/></linearGradient>
<linearGradient id="r133"><stop offset="0" stop-color="#000008"/><stop offset="0.159" stop-color="#000008"/><stop offset="0.182" stop-color="#000009"/><stop offset="0.205" stop-color="#000018"/><stop offset="0.227" stop-color="#000027"/><stop offset="0.25" stop-color="#000028"/><stop offset="0.773" stop-color="#000028"/><stop offset="0.795" stop-color="#000024"/><stop offset="0.818" stop-color="#000011"/><stop offset="0.841" stop-color="#000008"/><stop offset="1" stop-color="#000008"/></linearGradient>
<linearGradient id="r134"><stop offset="0" stop-color="#000008"/><stop offset="0.159" stop-color="#000008"/><stop offset="0.182" stop-color="#000009"/><stop offset="0.205" stop-color="#000018"/><stop offset="0.227" stop-color="#000027"/><stop offset="0.25" stop-color="#000028"/><stop offset="0.773" stop-color="#000028"/><stop offset="0.795" stop-color="#000024"/><stop offset="0.818" stop-color="#000011"/><stop offset="0.841" stop-color="#000008"/><stop offset="1" stop-color="#000008"/></linearGradient>
<linearGradient id="r135"><stop offset="0" stop-color="#000008"/><stop offset="0.159" stop-color="#000008"/><stop offset="0.182" stop-color="#000009"/><stop offset="0.205" stop-color="#000018"/><stop offset="0.227" stop-color="#000027"/><stop offset="0.25" stop-color="#000028"/><stop offset="0.773" stop-color="#000028"/><stop offset="0.795" stop-color="#000024"/><stop offset="0.818" stop-color="#000011"/><stop offset="0.841" stop-color="#000008"/><stop offset="1" stop-color="#000008"/></linearGradient>
<linearGradient id="r136"><stop offset="0" stop-color="#000008"/><stop offset="0.159" stop-color="#000008"/><stop offset="0.182" stop-color="#000009"/><stop offset="0.205" stop-color="#000018"/><stop offset="0.227" stop-color="#000027"/><stop offset="0.25" stop-color="#000028"/><stop offset="0.773" stop-color="#000028"/><stop offset="0.795" stop-color="#000024"/><stop offset="0.818" stop-color="#000011"/><stop offset="0.841" stop-color="#000008"/><stop offset="1" stop-color="#000008"/></linearGradient>
<linearGradient id="r137"><stop offset="0" stop-color="#000008"/><stop offset="0.159" stop-color="#000008"/><stop offset="0.182" stop-color="#000009"/><stop offset="0.205" stop-color="#000018"/><stop offset="0.227" stop-color="#000027"/><stop offset="0.25" stop-color="#000028"/><stop offset="0.773" stop-color="#000028"/><stop offset="0.795" stop-color="#000024"/><stop offset="0.818" stop-color="#000011"/><stop offset="0.841" stop-color="#000008"/><stop offset="1" stop-color="#000008"/></linearGradient>
<linearGradient id="r138"><stop offset="0" stop-color="#000008"/><stop offset="0.159" stop-color="#000008"/><stop offset="0.182" stop-color="#000009"/><stop offset="0.205" stop-color="#000018"/><stop offset="0.227" stop-color="#000027"/><stop offset="0.25" stop-color="#000028"/><stop offset="0.773" stop-color="#000028"/><stop offset="0.795" stop-color="#000024"/><stop offset="0.818" stop-color="#000011"/><stop offset="0.841" stop-color="#000008"/><stop offset="1" stop-color="#000008"/></linearGradient>
<linearGradient id="r139"><stop offset="0" stop-color="#000008"/><stop offset="0.159" stop-color="#000008"/><stop offset="0.182" stop-color="#000009"/><stop offset="0.205" stop-color="#000018"/><stop offset="0.227" stop-color="#000027"/><stop offset="0.25" stop-color="#000028"/><stop offset="0.773" stop-color="#000028"/><stop offset="0.795" stop-color="#000024"/><stop offset="0.818" stop-color="#000011"/><stop offset="0.841" stop-color="#000008"/><stop offset="1" stop-color="#000008"/></linearGradient>
<linearGradient id="r140"><stop offset="0" stop-color="#000008"/><stop offset="0.159" stop-color="#000008"/><stop offset="0.182" stop-color="#000009"/><stop offset="0.205" stop-color="#000018"/><stop offset="0.227" stop-color="#000027"/><stop offset="0.25" stop-color="#000028"/><stop offset="0.773" stop-color="#000028"/><stop offset="0.795" stop-color="#000024"/><stop offset="0.818" stop-color="#000011"/><stop offset="0.841" stop-color="#000008"/><stop offset="1" stop-color="#000008"/></linearGradient>
<linearGradient id="r141"><stop offset="0" stop-color="#000008"/><stop offset="0.159" stop-color="#000008"/><stop offset="0.182" stop-color="#000009"/><stop offset="0.205" stop-color="#000018"/><stop offset="0.227" stop-color="#000027"/><stop offset="0.25" stop-color="#000028"/><stop offset="0.773" stop-color="#000028"/><stop offset="0.795" stop-color="#000024"/><stop offset="0.818" stop-color="#000011"/><stop offset="0.841" stop-color="#000008"/><stop offset="1" stop-color="#000008"/></linearGradient>
<linearGradient id="r142"><stop offset="0" stop-color="#000008"/><stop offset="0.159" stop-color="#000008"/><stop offset="0.182" stop-color="#000009"/><stop offset="0.205" stop-color="#000018"/><stop offset="0.227" stop-color="#000027"/><stop offset="0.25" stop-color="#000028"/><stop offset="0.773" stop-color="#000028"/><stop offset="0.795" stop-color="#000024"/><stop offset="0.818" stop-color="#000011"/><stop offset="0.841" stop-color="#000008"/><stop offset="1" stop-color="#000008"/></linearGradient>
<linearGradient id="r143"><stop offset="0" stop-color="#000008"/><stop offset="0.159" stop-color="#000008"/><stop offset="0.182" stop-color="#000009"/><stop offset="0.205" stop-color="#000018"/><stop offset="0.227" stop-color="#000027"/><stop offset="0.25" stop-color="#000028"/><stop offset="0.773" stop-color="#000028"/><stop offset="0.795" stop-color="#000024"/><stop offset="0.818" stop-color="#000011"/><stop offset="0.841" stop-color="#000008"/><stop offset="1" stop-color="#000008"/></linearGradient>
<linearGradient id="r144"><stop offset="0" stop-color="#000008"/><stop offset="0.159" stop-color="#000008"/><stop offset="0.182" stop-color="#000009"/><stop offset="0.205" stop-color="#000018"/><stop offset="0.227" stop-color="#000027"/><stop offset="0.25" stop-color="#000028"/><stop offset="0.773" stop-color="#000028"/><stop offset="0.795" stop-color="#000024"/><stop offset="0.818" stop-color="#000011"/><stop offset="0.841" stop-color="#000008"/><stop offset="1" stop-color="#000008"/></linearGradient>
<linearGradient id="r145"><stop offset="0" stop-color="#000008"/><stop offset="0.159" stop-color="#000008"/><stop offset="0.182" stop-color="#000009"/><stop offset="0.205" stop-color="#000018"/><stop offset="0.227" stop-color="#000027"/><stop offset="0.25" stop-color="#000028"/><stop offset="0.773" stop-color="#000028"/><stop offset="0.795" stop-color="#000024"/><stop offset="0.818" stop-color="#000011"/><stop offset="0.841" stop-color="#000008"/><stop offset="1" stop-color="#000008"/></linearGradient>
<linearGradient id="r146"><stop offset="0" stop-color="#000008"/><stop offset="0.159" stop-color="#000008"/><stop offset="0.182" stop-color="#000009"/><stop offset="0.205" stop-color="#000018"/><stop offset="0.227" stop-color="#000027"/><stop offset="0.25" stop-color="#000028"/><stop offset="0.773" stop-color="#000028"/><stop offset="0.795" stop-color="#000024"/><stop offset="0.818" stop-color="#000011"/><stop offset="0.841" stop-color="#000008"/><stop offset="1" stop-color="#000008"/></linearGradient>
<linearGradient id="r147"><stop offset="0" stop-color="#000008"/><stop offset="0.159" stop-color="#000008"/><stop offset="0.182" stop-color="#000009"/><stop offset="0.205" stop-color="#000018"/><stop offset="0.227" stop-color="#000027"/><stop offset="0.25" stop-color="#000028"/><stop offset="0.773" stop-color="#000028"/><stop offset="0.795" stop-color="#000024"/><stop offset="0.818" stop-color="#000011"/><stop offset="0.841" stop-color="#000008"/><stop offset="1" stop-color="#000008"/></linearGradient>
<linearGradient id="r148"><stop offset="0" stop-color="#000008"/><stop offset="0.159" stop-color="#000008"/><stop offset="0.182" stop-color="#000009"/><stop offset="0.205" stop-color="#000018"/><stop offset="0.227" stop-color="#000027"/><stop offset="0.25" stop-color="#000028"/><stop offset="0.773" stop-color="#000028"/><stop offset="0.795" stop-color="#000024"/><stop offset="0.818" stop-color="#000011"/><stop offset="0.841" stop-color="#000008"/><stop offset="1" stop-color="#000008"/></linearGradient>
<linearGradient id="r149"><stop offset="0" stop-color="#000008"/><stop offset="0.159" stop-color="#000008"/><stop offset="0.182" stop-color="#000009"/><stop offset="0.205" stop-color="#000018"/><stop offset="0.227" stop-color="#000027"/><stop offset="0.25" stop-color="#000028"/><stop offset="0.773" stop-color="#000028"/><stop offset="0.795" stop-color="#000024"/><stop offset="0.818" stop-color="#000011"/><stop offset="0.841" stop-color="#000008"/><stop offset="1" stop-color="#000008"/></linearGradient>
<linearGradient id="r150"><stop offset="0" stop-color="#000008"/><stop offset="0.159" stop-color="#000008"/><stop offset="0.182" stop-color="#000009"/><stop offset="0.205" stop-color="#000018"/><stop offset="0.227" stop-color="#000027"/><stop offset="0.25" stop-color="#000028"/><stop offset="0.773" stop-color="#000028"/><stop offset="0.795" stop-color="#000024"/><stop offset="0.818" stop-color="#000011"/><stop offset="0.841" stop-color="#000008"/><stop offset="1" stop-color="#000008"/></linearGradient>
<linearGradient id="r151"><stop offset="0" stop-color="#000008"/><stop offset="0.159" stop-color="#000008"/><stop offset="0.182" stop-color="#000009"/><stop offset="0.205" stop-color="#000018"/><stop offset="0.227" stop-color="#000027"/><stop offset="0.25" stop-color="#000028"/><stop offset="0.773" stop-color="#000028"/><stop offset="0.795" stop-color="#000024"/><stop offset="0.818" stop-color="#000011"/><stop offset="0.841" stop-color="#000008"/><stop offset="1" stop-color="#000008"/></linearGradient>
<linearGradient id="r152"><stop offset="0" stop-color="#000008"/><stop offset="0.159" stop-color="#000008"/><stop offset="0.182" stop-color="#000009"/><stop offset="0.205" stop-color="#000018"/><stop offset="0.227" stop-color="#000027"/><stop offset="0.25" stop-color="#000028"/><stop offset="0.773" stop-color="#000028"/><stop offset="0.795" stop-color="#000024"/><stop offset="0.818" stop-color="#000011"/><stop offset="0.841" stop-color="#000008"/><stop offset="1" stop-color="#000008"/></linearGradient>
<linearGradient id="r153"><stop offset="0" stop-color="#000008"/><stop offset="0.159" stop-color="#000008"/><stop offset="0.182" stop-color="#000009"/><stop offset="0.205" stop-color="#000018"/><stop offset="0.227" stop-color="#000027"/><stop offset="0.25" stop-color="#000028"/><stop offset="0.773" stop-color="#000028"/><stop offset="0.795" stop-color="#000024"/><stop offset="0.818" stop-color="#000011"/><stop offset="0.841" stop-color="#000008"/><stop offset="1" stop-color="#000008"/></linearGradient>
<linearGradient id="r154"><stop offset="0" stop-color="#000008"/><stop offset="0.159" stop-color="#000008"/><stop offset="0.182" stop-color="#000009"/><stop offset="0.205" stop-color="#000018"/><stop offset="0.227" stop-color="#000027"/><stop offset="0.25" stop-color="#000028"/><stop offset="0.773" stop-color="#000028"/><stop offset="0.795" stop-color="#000024"/><stop offset="0.818" stop-color="#000011"/><stop offset="0.841" stop-color="#000008"/><stop offset="1" stop-color="#000008"/></linearGradient>
<linearGradient id="r155"><stop offset="0" stop-color="#000008"/><stop offset="0.159" stop-color="#000008"/><stop offset="0.182" stop-color="#000009"/><stop offset="0.205" stop-color="#000018"/><stop offset="0.227" stop-color="#000027"/><stop offset="0.25" stop-color="#000028"/><stop offset="0.773" stop-color="#000028"/><stop offset="0.795" stop-color="#000024"/><stop offset="0.818" stop-color="#000011"/><stop offset="0.841" stop-color="#000008"/><stop offset="1" stop-color="#000008"/></linearGradient>
<linearGradient id="r156"><stop offset="0" stop-color="#000008"/><stop offset="0.159" stop-color="#000008"/><stop offset="0.182" stop-color="#000009"/><stop offset="0.205" stop-color="#000017"/><stop offset="0.227" stop-color="#000026"/><stop offset="0.25" stop-color="#000027"/><stop offset="0.773" stop-color="#000027"/><stop offset="0.795" stop-color="#000022"/><stop offset="0.818" stop-color="#000011"/><stop offset="0.841" stop-color="#000008"/><stop offset="1" stop-color="#000008"/></linearGradient>
<linearGradient id="r157"><stop offset="0" stop-color="#000008"/><stop offset="0.182" stop-color="#000008"/><stop offset="0.205" stop-color="#000013"/><stop offset="0.227" stop-color="#00001d"/><stop offset="0.25" stop-color="#00001e"/><stop offset="0.773" stop-color="#00001e"/><stop offset="0.795" stop-color="#00001b"/><stop offset="0.818" stop-color="#00000e"/><stop offset="0.841" stop-color="#000008"/><stop offset="1" stop-color="#000008"/></linearGradient>
<linearGradient id="r158"><stop offset="0" stop-color="#000008"/><stop offset="0.182" stop-color="#000008"/><stop offset="0.205" stop-color="#00000d"/><stop offset="0.227" stop-color="#000012"/><stop offset="0.773" stop-color="#000012"/><stop offset="0.795" stop-color="#000011"/><stop offset="0.818" stop-color="#00000b"/><stop offset="0.841" stop-color="#000008"/><stop offset="1" stop-color="#000008"/></linearGradient>
<linearGradient id="r159"><stop offset="0" stop-color="#000008"/><stop offset="0.182" stop-color="#000008"/><stop offset="0.205" stop-color="#000009"/><stop offset="0.795" stop-color="#000009"/><stop offset="0.818" stop-color="#000008"/><stop offset="1" stop-color="#000008"/></linearGradient>
</defs>
<rect width="871" height="647" fill="#ebebeb"/>
<g><line x1="-1857.5" y1="835.9" x2="83.7" y2="-885.7" class="gM"/><line x1="-1826.4" y1="844.1" x2="114.5" y2="-876.2" class="gm"/><line x1="-1795.4" y1="852.4" x2="145.3" y2="-866.8" class="gm"/><line x1="-1764.3" y1="860.7" x2="176.2" y2="-857.3" class="gm"/><line x1="-1733.3" y1="869.0" x2="207.0" y2="-847.8" class="gm"/><line x1="-1702.2" y1="877.2" x2="237.9" y2="-838.3" class="gm"/><line x1="-1671.1" y1="885.5" x2="268.7" y2="-828.8" class="gm"/><line x1="-1640.1" y1="893.8" x2="299.6" y2="-819.4" class="gm"/><line x1="-1609.0" y1="902.1" x2="330.4" y2="-809.9" class="gm"/><line x1="-1578.0" y1="910.3" x2="361.3" y2="-800.4" class="gm"/><line x1="-1546.9" y1="918.6" x2="392.1" y2="-790.9" class="gM"/><line x1="-1515.9" y1="926.9" x2="422.9" y2="-781.4" class="gm"/><line x1="-1484.8" y1="935.2" x2="453.8" y2="-772.0" class="gm"/><line x1="-1453.7" y1="943.5" x2="484.6" y2="-762.5" class="gm"/><line x1="-1422.7" y1="951.7" x2="515.5" y2="-753.0" class="gm"/><line x1="-1391.6" y1="960.0" x2="546.3" y2="-743.5" class="gm"/><line x1="-1360.6" y1="968.3" x2="577.2" y2="-734.0" class="gm"/><line x1="-1329.5" y1="976.6" x2="608.0" y2="-724.6" class="gm"/><line x1="-1298.5" y1="984.8" x2="638.9" y2="-715.1" class="gm"/><line x1="-1267.4" y1="993.1" x2="669.7" y2="-705.6" class="gm"/><line x1="-1236.3" y1="1001.4" x2="700.5" y2="-696.1" class="gM"/><line x1="-1205.3" y1="1009.7" x2="731.4" y2="-686.6" class="gm"/><line x1="-1174.2" y1="1017.9" x2="762.2" y2="-677.2" class="gm"/><line x1="-1143.2" y1="1026.2" x2="793.1" y2="-667.7" class="gm"/><line x1="-1112.1" y1="1034.5" x2="823.9" y2="-658.2" class="gm"/><line x1="-1081.1" y1="1042.8" x2="854.8" y2="-648.7" class="gm"/><line x1="-1050.0" y1="1051.0" x2="885.6" y2="-639.2" class="gm"/><line x1="-1019.0" y1="1059.3" x2="916.4" y2="-629.8" class="gm"/><line x1="-987.9" y1="1067.6" x2="947.3" y2="-620.3" class="gm"/><line x1="-956.8" y1="1075.9" x2="978.1" y2="-610.8" class="gm"/><line x1="-925.8" y1="1084.2" x2="1009.0" y2="-601.3" class="gM"/><line x1="-894.7" y1="1092.4" x2="1039.8" y2="-591.8" class="gm"/><line x1="-863.7" y1="1100.7" x2="1070.7" y2="-582.4" class="gm"/><line x1="-832.6" y1="1109.0" x2="1101.5" y2="-572.9" class="gm"/><line x1="-801.6" y1="1117.3" x2="1132.4" y2="-563.4" class="gm"/><line x1="-770.5" y1="1125.5" x2="1163.2" y2="-553.9" class="gm"/><line x1="-739.4" y1="1133.8" x2="1194.0" y2="-544.4" class="gm"/><line x1="-708.4" y1="1142.1" x2="1224.9" y2="-535.0" class="gm"/><line x1="-677.3" y1="1150.4" x2="1255.7" y2="-525.5" class="gm"/><line x1="-646.3" y1="1158.6" x2="1286.6" y2="-516.0" class="gm"/><line x1="-615.2" y1="1166.9" x2="1317.4" y2="-506.5" class="gM"/><line x1="-584.2" y1="1175.2" x2="1348.3" y2="-497.0" class="gm"/><line x1="-553.1" y1="1183.5" x2="1379.1" y2="-487.6" class="gm"/><line x1="-522.1" y1="1191.7" x2="1410.0" y2="-478.1" class="gm"/><line x1="-491.0" y1="1200.0" x2="1440.8" y2="-468.6" class="gm"/><line x1="-459.9" y1="1208.3" x2="1471.6" y2="-459.1" class="gm"/><line x1="-428.9" y1="1216.6" x2="1502.5" y2="-449.6" class="gm"/><line x1="-397.8" y1="1224.9" x2="1533.3" y2="-440.2" class="gm"/><line x1="-366.8" y1="1233.1" x2="1564.2" y2="-430.7" class="gm"/><line x1="-335.7" y1="1241.4" x2="1595.0" y2="-421.2" class="gm"/><line x1="-304.7" y1="1249.7" x2="1625.9" y2="-411.7" class="gM"/><line x1="-273.6" y1="1258.0" x2="1656.7" y2="-402.2" class="gm"/><line x1="-242.5" y1="1266.2" x2="1687.5" y2="-392.8" class="gm"/><line x1="-211.5" y1="1274.5" x2="1718.4" y2="-383.3" class="gm"/><line x1="-180.4" y1="1282.8" x2="1749.2" y2="-373.8" class="gm"/><line x1="-149.4" y1="1291.1" x2="1780.1" y2="-364.3" class="gm"/><line x1="-118.3" y1="1299.3" x2="1810.9" y2="-354.8" class="gm"/><line x1="-87.3" y1="1307.6" x2="1841.8" y2="-345.4" class="gm"/><line x1="-56.2" y1="1315.9" x2="1872.6" y2="-335.9" class="gm"/><line x1="-25.1" y1="1324.2" x2="1903.5" y2="-326.4" class="gm"/><line x1="5.9" y1="1332.5" x2="1934.3" y2="-316.9" class="gM"/><line x1="37.0" y1="1340.7" x2="1965.1" y2="-307.4" class="gm"/><line x1="68.0" y1="1349.0" x2="1996.0" y2="-298.0" class="gm"/><line x1="99.1" y1="1357.3" x2="2026.8" y2="-288.5" class="gm"/><line x1="130.1" y1="1365.6" x2="2057.7" y2="-279.0" class="gm"/><line x1="161.2" y1="1373.8" x2="2088.5" y2="-269.5" class="gm"/><line x1="192.2" y1="1382.1" x2="2119.4" y2="-260.0" class="gm"/><line x1="223.3" y1="1390.4" x2="2150.2" y2="-250.6" class="gm"/><line x1="254.4" y1="1398.7" x2="2181.1" y2="-241.1" class="gm"/><line x1="285.4" y1="1406.9" x2="2211.9" y2="-231.6" class="gm"/><line x1="316.5" y1="1415.2" x2="2242.7" y2="-222.1" class="gM"/><line x1="347.5" y1="1423.5" x2="2273.6" y2="-212.6" class="gm"/><line x1="378.6" y1="1431.8" x2="2304.4" y2="-203.2" class="gm"/><line x1="409.6" y1="1440.0" x2="2335.3" y2="-193.7" class="gm"/><line x1="440.7" y1="1448.3" x2="2366.1" y2="-184.2" class="gm"/><line x1="471.8" y1="1456.6" x2="2397.0" y2="-174.7" class="gm"/><line x1="502.8" y1="1464.9" x2="2427.8" y2="-165.2" class="gm"/><line x1="533.9" y1="1473.2" x2="2458.6" y2="-155.8" class="gm"/><line x1="564.9" y1="1481.4" x2="2489.5" y2="-146.3" class="gm"/><line x1="596.0" y1="1489.7" x2="2520.3" y2="-136.8" class="gm"/><line x1="627.0" y1="1498.0" x2="2551.2" y2="-127.3" class="gM"/><line x1="-1770.3" y1="976.8" x2="336.0" y2="1533.6" class="gM"/><line x1="-1752.4" y1="961.0" x2="353.7" y2="1518.6" class="gm"/><line x1="-1734.6" y1="945.2" x2="371.4" y2="1503.5" class="gm"/><line x1="-1716.7" y1="929.4" x2="389.2" y2="1488.5" class="gm"/><line x1="-1698.8" y1="913.6" x2="406.9" y2="1473.4" class="gm"/><line x1="-1681.0" y1="897.8" x2="424.7" y2="1458.4" class="gm"/><line x1="-1663.1" y1="882.0" x2="442.4" y2="1443.4" class="gm"/><line x1="-1645.2" y1="866.2" x2="460.1" y2="1428.3" class="gm"/><line x1="-1627.3" y1="850.4" x2="477.9" y2="1413.3" class="gm"/><line x1="-1609.5" y1="834.7" x2="495.6" y2="1398.2" class="gm"/><line x1="-1591.6" y1="818.9" x2="513.4" y2="1383.2" class="gM"/><line x1="-1573.7" y1="803.1" x2="531.1" y2="1368.2" class="gm"/><line x1="-1555.9" y1="787.3" x2="548.8" y2="1353.1" class="gm"/><line x1="-1538.0" y1="771.5" x2="566.6" y2="1338.1" class="gm"/><line x1="-1520.1" y1="755.7" x2="584.3" y2="1323.0" class="gm"/><line x1="-1502.2" y1="739.9" x2="602.0" y2="1308.0" class="gm"/><line x1="-1484.4" y1="724.1" x2="619.8" y2="1293.0" class="gm"/><line x1="-1466.5" y1="708.3" x2="637.5" y2="1277.9" class="gm"/><line x1="-1448.6" y1="692.5" x2="655.3" y2="1262.9" class="gm"/><line x1="-1430.8" y1="676.7" x2="673.0" y2="1247.8" class="gm"/><line x1="-1412.9" y1="660.9" x2="690.7" y2="1232.8" class="gM"/><line x1="-1395.0" y1="645.1" x2="708.5" y2="1217.7" class="gm"/><line x1="-1377.1" y1="629.4" x2="726.2" y2="1202.7" class="gm"/><line x1="-1359.3" y1="613.6" x2="743.9" y2="1187.7" class="gm"/><line x1="-1341.4" y1="597.8" x2="761.7" y2="1172.6" class="gm"/><line x1="-1323.5" y1="582.0" x2="779.4" y2="1157.6" class="gm"/><line x1="-1305.7" y1="566.2" x2="797.2" y2="1142.5" class="gm"/><line x1="-1287.8" y1="550.4" x2="814.9" y2="1127.5" class="gm"/><line x1="-1269.9" y1="534.6" x2="832.6" y2="1112.5" class="gm"/><line x1="-1252.1" y1="518.8" x2="850.4" y2="1097.4" class="gm"/><line x1="-1234.2" y1="503.0" x2="868.1" y2="1082.4" class="gM"/><line x1="-1216.3" y1="487.2" x2="885.9" y2="1067.3" class="gm"/><line x1="-1198.4" y1="471.4" x2="903.6" y2="1052.3" class="gm"/><line x1="-1180.6" y1="455.6" x2="921.3" y2="1037.3" class="gm"/><line x1="-1162.7" y1="439.8" x2="939.1" y2="1022.2" class="gm"/><line x1="-1144.8" y1="424.1" x2="956.8" y2="1007.2" class="gm"/><line x1="-1127.0" y1="408.3" x2="974.5" y2="992.1" class="gm"/><line x1="-1109.1" y1="392.5" x2="992.3" y2="977.1" class="gm"/><line x1="-1091.2" y1="376.7" x2="1010.0" y2="962.1" class="gm"/><line x1="-1073.3" y1="360.9" x2="1027.8" y2="947.0" class="gm"/><line x1="-1055.5" y1="345.1" x2="1045.5" y2="932.0" class="gM"/><line x1="-1037.6" y1="329.3" x2="1063.2" y2="916.9" class="gm"/><line x1="-1019.7" y1="313.5" x2="1081.0" y2="901.9" class="gm"/><line x1="-1001.9" y1="297.7" x2="1098.7" y2="886.9" class="gm"/><line x1="-984.0" y1="281.9" x2="1116.5" y2="871.8" class="gm"/><line x1="-966.1" y1="266.1" x2="1134.2" y2="856.8" class="gm"/><line x1="-948.3" y1="250.3" x2="1151.9" y2="841.7" class="gm"/><line x1="-930.4" y1="234.5" x2="1169.7" y2="826.7" class="gm"/><line x1="-912.5" y1="218.7" x2="1187.4" y2="811.6" class="gm"/><line x1="-894.6" y1="203.0" x2="1205.1" y2="796.6" class="gm"/><line x1="-876.8" y1="187.2" x2="1222.9" y2="781.6" class="gM"/><line x1="-858.9" y1="171.4" x2="1240.6" y2="766.5" class="gm"/><line x1="-841.0" y1="155.6" x2="1258.4" y2="751.5" class="gm"/><line x1="-823.2" y1="139.8" x2="1276.1" y2="736.4" class="gm"/><line x1="-805.3" y1="124.0" x2="1293.8" y2="721.4" class="gm"/><line x1="-787.4" y1="108.2" x2="1311.6" y2="706.4" class="gm"/><line x1="-769.5" y1="92.4" x2="1329.3" y2="691.3" class="gm"/><line x1="-751.7" y1="76.6" x2="1347.0" y2="676.3" class="gm"/><line x1="-733.8" y1="60.8" x2="1364.8" y2="661.2" class="gm"/><line x1="-715.9" y1="45.0" x2="1382.5" y2="646.2" class="gm"/><line x1="-698.1" y1="29.2" x2="1400.3" y2="631.2" class="gM"/><line x1="-680.2" y1="13.4" x2="1418.0" y2="616.1" class="gm"/><line x1="-662.3" y1="-2.3" x2="1435.7" y2="601.1" class="gm"/><line x1="-644.4" y1="-18.1" x2="1453.5" y2="586.0" class="gm"/><line x1="-626.6" y1="-33.9" x2="1471.2" y2="571.0" class="gm"/><line x1="-608.7" y1="-49.7" x2="1489.0" y2="556.0" class="gm"/><line x1="-590.8" y1="-65.5" x2="1506.7" y2="540.9" class="gm"/><line x1="-573.0" y1="-81.3" x2="1524.4" y2="525.9" class="gm"/><line x1="-555.1" y1="-97.1" x2="1542.2" y2="510.8" class="gm"/><line x1="-537.2" y1="-112.9" x2="1559.9" y2="495.8" class="gm"/><line x1="-519.4" y1="-128.7" x2="1577.6" y2="480.8" class="gM"/><line x1="-501.5" y1="-144.5" x2="1595.4" y2="465.7" class="gm"/><line x1="-483.6" y1="-160.3" x2="1613.1" y2="450.7" class="gm"/><line x1="-465.7" y1="-176.1" x2="1630.9" y2="435.6" class="gm"/><line x1="-447.9" y1="-191.9" x2="1648.6" y2="420.6" class="gm"/><line x1="-430.0" y1="-207.6" x2="1666.3" y2="405.5" class="gm"/><line x1="-412.1" y1="-223.4" x2="1684.1" y2="390.5" class="gm"/><line x1="-394.3" y1="-239.2" x2="1701.8" y2="375.5" class="gm"/><line x1="-376.4" y1="-255.0" x2="1719.5" y2="360.4" class="gm"/><line x1="-358.5" y1="-270.8" x2="1737.3" y2="345.4" class="gm"/><line x1="-340.6" y1="-286.6" x2="1755.0" y2="330.3" class="gM"/><line x1="-322.8" y1="-302.4" x2="1772.8" y2="315.3" class="gm"/><line x1="-304.9" y1="-318.2" x2="1790.5" y2="300.3" class="gm"/><line x1="-287.0" y1="-334.0" x2="1808.2" y2="285.2" class="gm"/><line x1="-269.2" y1="-349.8" x2="1826.0" y2="270.2" class="gm"/><line x1="-251.3" y1="-365.6" x2="1843.7" y2="255.1" class="gm"/><line x1="-233.4" y1="-381.4" x2="1861.5" y2="240.1" class="gm"/><line x1="-215.5" y1="-397.2" x2="1879.2" y2="225.1" class="gm"/><line x1="-197.7" y1="-412.9" x2="1896.9" y2="210.0" class="gm"/><line x1="-179.8" y1="-428.7" x2="1914.7" y2="195.0" class="gm"/><line x1="-161.9" y1="-444.5" x2="1932.4" y2="179.9" class="gM"/><line x1="-144.1" y1="-460.3" x2="1950.1" y2="164.9" class="gm"/><line x1="-126.2" y1="-476.1" x2="1967.9" y2="149.9" class="gm"/><line x1="-108.3" y1="-491.9" x2="1985.6" y2="134.8" class="gm"/><line x1="-90.5" y1="-507.7" x2="2003.4" y2="119.8" class="gm"/><line x1="-72.6" y1="-523.5" x2="2021.1" y2="104.7" class="gm"/><line x1="-54.7" y1="-539.3" x2="2038.8" y2="89.7" class="gm"/><line x1="-36.8" y1="-555.1" x2="2056.6" y2="74.7" class="gm"/><line x1="-19.0" y1="-570.9" x2="2074.3" y2="59.6" class="gm"/><line x1="-1.1" y1="-586.7" x2="2092.0" y2="44.6" class="gm"/><line x1="16.8" y1="-602.5" x2="2109.8" y2="29.5" class="gM"/><line x1="34.6" y1="-618.2" x2="2127.5" y2="14.5" class="gm"/><line x1="52.5" y1="-634.0" x2="2145.3" y2="-0.5" class="gm"/><line x1="70.4" y1="-649.8" x2="2163.0" y2="-15.6" class="gm"/><line x1="88.3" y1="-665.6" x2="2180.7" y2="-30.6" class="gm"/><line x1="106.1" y1="-681.4" x2="2198.5" y2="-45.7" class="gm"/><line x1="124.0" y1="-697.2" x2="2216.2" y2="-60.7" class="gm"/><line x1="141.9" y1="-713.0" x2="2234.0" y2="-75.8" class="gm"/><line x1="159.7" y1="-728.8" x2="2251.7" y2="-90.8" class="gm"/><line x1="177.6" y1="-744.6" x2="2269.4" y2="-105.8" class="gm"/><line x1="195.5" y1="-760.4" x2="2287.2" y2="-120.9" class="gM"/><line x1="213.3" y1="-776.2" x2="2304.9" y2="-135.9" class="gm"/><line x1="231.2" y1="-792.0" x2="2322.6" y2="-151.0" class="gm"/><line x1="249.1" y1="-807.8" x2="2340.4" y2="-166.0" class="gm"/><line x1="267.0" y1="-823.6" x2="2358.1" y2="-181.0" class="gm"/><line x1="284.8" y1="-839.3" x2="2375.9" y2="-196.1" class="gm"/><line x1="302.7" y1="-855.1" x2="2393.6" y2="-211.1" class="gm"/><line x1="320.6" y1="-870.9" x2="2411.3" y2="-226.2" class="gm"/><line x1="338.4" y1="-886.7" x2="2429.1" y2="-241.2" class="gm"/><line x1="356.3" y1="-902.5" x2="2446.8" y2="-256.2" class="gm"/><line x1="374.2" y1="-918.3" x2="2464.5" y2="-271.3" class="gM"/></g>
<g>
<line x1="22.0" y1="574.6" x2="505.3" y2="155.0" class="bl tB" stroke-dasharray="22.36 1.2" stroke-dashoffset="12.6"/>
<line x1="505.3" y1="155.0" x2="680.0" y2="206.0" class="bl"/>
<line x1="109.5" y1="599.3" x2="592.7" y2="180.5" class="pu tB" stroke-dasharray="22.36 1.2" stroke-dashoffset="12.6"/>
<line x1="263.7" y1="364.8" x2="438.5" y2="415.0" class="pu"/>
</g>
<g clip-path="url(#pc)">
<polygon points="22.0,514.7 197.0,564.0 680.0,146.5 505.3,95.5" fill="#000008"/>
<g filter="url(#bl)"><g transform="matrix(87.43,25.08,241.58,-209.18,351.10,330.20)">
<rect x="-1" y="-1.0000" width="2" height="0.0156" fill="url(#r0)"/>
<rect x="-1" y="-0.9875" width="2" height="0.0156" fill="url(#r1)"/>
<rect x="-1" y="-0.9750" width="2" height="0.0156" fill="url(#r2)"/>
<rect x="-1" y="-0.9625" width="2" height="0.0156" fill="url(#r3)"/>
<rect x="-1" y="-0.9500" width="2" height="0.0156" fill="url(#r4)"/>
<rect x="-1" y="-0.9375" width="2" height="0.0156" fill="url(#r5)"/>
<rect x="-1" y="-0.9250" width="2" height="0.0156" fill="url(#r6)"/>
<rect x="-1" y="-0.9125" width="2" height="0.0156" fill="url(#r7)"/>
<rect x="-1" y="-0.9000" width="2" height="0.0156" fill="url(#r8)"/>
<rect x="-1" y="-0.8875" width="2" height="0.0156" fill="url(#r9)"/>
<rect x="-1" y="-0.8750" width="2" height="0.0156" fill="url(#r10)"/>
<rect x="-1" y="-0.8625" width="2" height="0.0156" fill="url(#r11)"/>
<rect x="-1" y="-0.8500" width="2" height="0.0156" fill="url(#r12)"/>
<rect x="-1" y="-0.8375" width="2" height="0.0156" fill="url(#r13)"/>
<rect x="-1" y="-0.8250" width="2" height="0.0156" fill="url(#r14)"/>
<rect x="-1" y="-0.8125" width="2" height="0.0156" fill="url(#r15)"/>
<rect x="-1" y="-0.8000" width="2" height="0.0156" fill="url(#r16)"/>
<rect x="-1" y="-0.7875" width="2" height="0.0156" fill="url(#r17)"/>
<rect x="-1" y="-0.7750" width="2" height="0.0156" fill="url(#r18)"/>
<rect x="-1" y="-0.7625" width="2" height="0.0156" fill="url(#r19)"/>
<rect x="-1" y="-0.7500" width="2" height="0.0156" fill="url(#r20)"/>
<rect x="-1" y="-0.7375" width="2" height="0.0156" fill="url(#r21)"/>
<rect x="-1" y="-0.7250" width="2" height="0.0156" fill="url(#r22)"/>
<rect x="-1" y="-0.7125" width="2" height="0.0156" fill="url(#r23)"/>
<rect x="-1" y="-0.7000" width="2" height="0.0156" fill="url(#r24)"/>
<rect x="-1" y="-0.6875" width="2" height="0.0156" fill="url(#r25)"/>
<rect x="-1" y="-0.6750" width="2" height="0.0156" fill="url(#r26)"/>
<rect x="-1" y="-0.6625" width="2" height="0.0156" fill="url(#r27)"/>
<rect x="-1" y="-0.6500" width="2" height="0.0156" fill="url(#r28)"/>
<rect x="-1" y="-0.6375" width="2" height="0.0156" fill="url(#r29)"/>
<rect x="-1" y="-0.6250" width="2" height="0.0156" fill="url(#r30)"/>
<rect x="-1" y="-0.6125" width="2" height="0.0156" fill="url(#r31)"/>
<rect x="-1" y="-0.6000" width="2" height="0.0156" fill="url(#r32)"/>
<rect x="-1" y="-0.5875" width="2" height="0.0156" fill="url(#r33)"/>
<rect x="-1" y="-0.5750" width="2" height="0.0156" fill="url(#r34)"/>
<rect x="-1" y="-0.5625" width="2" height="0.0156" fill="url(#r35)"/>
<rect x="-1" y="-0.5500" width="2" height="0.0156" fill="url(#r36)"/>
<rect x="-1" y="-0.5375" width="2" height="0.0156" fill="url(#r37)"/>
<rect x="-1" y="-0.5250" width="2" height="0.0156" fill="url(#r38)"/>
<rect x="-1" y="-0.5125" width="2" height="0.0156" fill="url(#r39)"/>
<rect x="-1" y="-0.5000" width="2" height="0.0156" fill="url(#r40)"/>
<rect x="-1" y="-0.4875" width="2" height="0.0156" fill="url(#r41)"/>
<rect x="-1" y="-0.4750" width="2" height="0.0156" fill="url(#r42)"/>
<rect x="-1" y="-0.4625" width="2" height="0.0156" fill="url(#r43)"/>
<rect x="-1" y="-0.4500" width="2" height="0.0156" fill="url(#r44)"/>
<rect x="-1" y="-0.4375" width="2" height="0.0156" fill="url(#r45)"/>
<rect x="-1" y="-0.4250" width="2" height="0.0156" fill="url(#r46)"/>
<rect x="-1" y="-0.4125" width="2" height="0.0156" fill="url(#r47)"/>
<rect x="-1" y="-0.4000" width="2" height="0.0156" fill="url(#r48)"/>
<rect x="-1" y="-0.3875" width="2" height="0.0156" fill="url(#r49)"/>
<rect x="-1" y="-0.3750" width="2" height="0.0156" fill="url(#r50)"/>
<rect x="-1" y="-0.3625" width="2" height="0.0156" fill="url(#r51)"/>
<rect x="-1" y="-0.3500" width="2" height="0.0156" fill="url(#r52)"/>
<rect x="-1" y="-0.3375" width="2" height="0.0156" fill="url(#r53)"/>
<rect x="-1" y="-0.3250" width="2" height="0.0156" fill="url(#r54)"/>
<rect x="-1" y="-0.3125" width="2" height="0.0156" fill="url(#r55)"/>
<rect x="-1" y="-0.3000" width="2" height="0.0156" fill="url(#r56)"/>
<rect x="-1" y="-0.2875" width="2" height="0.0156" fill="url(#r57)"/>
<rect x="-1" y="-0.2750" width="2" height="0.0156" fill="url(#r58)"/>
<rect x="-1" y="-0.2625" width="2" height="0.0156" fill="url(#r59)"/>
<rect x="-1" y="-0.2500" width="2" height="0.0156" fill="url(#r60)"/>
<rect x="-1" y="-0.2375" width="2" height="0.0156" fill="url(#r61)"/>
<rect x="-1" y="-0.2250" width="2" height="0.0156" fill="url(#r62)"/>
<rect x="-1" y="-0.2125" width="2" height="0.0156" fill="url(#r63)"/>
<rect x="-1" y="-0.2000" width="2" height="0.0156" fill="url(#r64)"/>
<rect x="-1" y="-0.1875" width="2" height="0.0156" fill="url(#r65)"/>
<rect x="-1" y="-0.1750" width="2" height="0.0156" fill="url(#r66)"/>
<rect x="-1" y="-0.1625" width="2" height="0.0156" fill="url(#r67)"/>
<rect x="-1" y="-0.1500" width="2" height="0.0156" fill="#000008"/>
<rect x="-1" y="-0.1375" width="2" height="0.0156" fill="url(#r69)"/>
<rect x="-1" y="-0.1250" width="2" height="0.0156" fill="url(#r70)"/>
<rect x="-1" y="-0.1125" width="2" height="0.0156" fill="url(#r71)"/>
<rect x="-1" y="-0.1000" width="2" height="0.0156" fill="url(#r72)"/>
<rect x="-1" y="-0.0875" width="2" height="0.0156" fill="url(#r73)"/>
<rect x="-1" y="-0.0750" width="2" height="0.0156" fill="url(#r74)"/>
<rect x="-1" y="-0.0625" width="2" height="0.0156" fill="url(#r75)"/>
<rect x="-1" y="-0.0500" width="2" height="0.0156" fill="url(#r76)"/>
<rect x="-1" y="-0.0375" width="2" height="0.0156" fill="url(#r77)"/>
<rect x="-1" y="-0.0250" width="2" height="0.0156" fill="url(#r78)"/>
<rect x="-1" y="-0.0125" width="2" height="0.0156" fill="url(#r79)"/>
<rect x="-1" y="0.0000" width="2" height="0.0156" fill="url(#r80)"/>
<rect x="-1" y="0.0125" width="2" height="0.0156" fill="url(#r81)"/>
<rect x="-1" y="0.0250" width="2" height="0.0156" fill="url(#r82)"/>
<rect x="-1" y="0.0375" width="2" height="0.0156" fill="url(#r83)"/>
<rect x="-1" y="0.0500" width="2" height="0.0156" fill="url(#r84)"/>
<rect x="-1" y="0.0625" width="2" height="0.0156" fill="url(#r85)"/>
<rect x="-1" y="0.0750" width="2" height="0.0156" fill="url(#r86)"/>
<rect x="-1" y="0.0875" width="2" height="0.0156" fill="url(#r87)"/>
<rect x="-1" y="0.1000" width="2" height="0.0156" fill="url(#r88)"/>
<rect x="-1" y="0.1125" width="2" height="0.0156" fill="url(#r89)"/>
<rect x="-1" y="0.1250" width="2" height="0.0156" fill="url(#r90)"/>
<rect x="-1" y="0.1375" width="2" height="0.0156" fill="url(#r91)"/>
<rect x="-1" y="0.1500" width="2" height="0.0156" fill="url(#r92)"/>
<rect x="-1" y="0.1625" width="2" height="0.0156" fill="#000008"/>
<rect x="-1" y="0.1750" width="2" height="0.0156" fill="#000008"/>
<rect x="-1" y="0.1875" width="2" height="0.0156" fill="url(#r95)"/>
<rect x="-1" y="0.2000" width="2" height="0.0156" fill="url(#r96)"/>
<rect x="-1" y="0.2125" width="2" height="0.0156" fill="url(#r97)"/>
<rect x="-1" y="0.2250" width="2" height="0.0156" fill="url(#r98)"/>
<rect x="-1" y="0.2375" width="2" height="0.0156" fill="url(#r99)"/>
<rect x="-1" y="0.2500" width="2" height="0.0156" fill="url(#r100)"/>
<rect x="-1" y="0.2625" width="2" height="0.0156" fill="url(#r101)"/>
<rect x="-1" y="0.2750" width="2" height="0.0156" fill="url(#r102)"/>
<rect x="-1" y="0.2875" width="2" height="0.0156" fill="url(#r103)"/>
<rect x="-1" y="0.3000" width="2" height="0.0156" fill="url(#r104)"/>
<rect x="-1" y="0.3125" width="2" height="0.0156" fill="url(#r105)"/>
<rect x="-1" y="0.3250" width="2" height="0.0156" fill="url(#r106)"/>
<rect x="-1" y="0.3375" width="2" height="0.0156" fill="url(#r107)"/>
<rect x="-1" y="0.3500" width="2" height="0.0156" fill="url(#r108)"/>
<rect x="-1" y="0.3625" width="2" height="0.0156" fill="url(#r109)"/>
<rect x="-1" y="0.3750" width="2" height="0.0156" fill="url(#r110)"/>
<rect x="-1" y="0.3875" width="2" height="0.0156" fill="url(#r111)"/>
<rect x="-1" y="0.4000" width="2" height="0.0156" fill="url(#r112)"/>
<rect x="-1" y="0.4125" width="2" height="0.0156" fill="url(#r113)"/>
<rect x="-1" y="0.4250" width="2" height="0.0156" fill="url(#r114)"/>
<rect x="-1" y="0.4375" width="2" height="0.0156" fill="url(#r115)"/>
<rect x="-1" y="0.4500" width="2" height="0.0156" fill="url(#r116)"/>
<rect x="-1" y="0.4625" width="2" height="0.0156" fill="url(#r117)"/>
<rect x="-1" y="0.4750" width="2" height="0.0156" fill="url(#r118)"/>
<rect x="-1" y="0.4875" width="2" height="0.0156" fill="url(#r119)"/>
<rect x="-1" y="0.5000" width="2" height="0.0156" fill="url(#r120)"/>
<rect x="-1" y="0.5125" width="2" height="0.0156" fill="url(#r121)"/>
<rect x="-1" y="0.5250" width="2" height="0.0156" fill="url(#r122)"/>
<rect x="-1" y="0.5375" width="2" height="0.0156" fill="url(#r123)"/>
<rect x="-1" y="0.5500" width="2" height="0.0156" fill="url(#r124)"/>
<rect x="-1" y="0.5625" width="2" height="0.0156" fill="url(#r125)"/>
<rect x="-1" y="0.5750" width="2" height="0.0156" fill="url(#r126)"/>
<rect x="-1" y="0.5875" width="2" height="0.0156" fill="url(#r127)"/>
<rect x="-1" y="0.6000" width="2" height="0.0156" fill="url(#r128)"/>
<rect x="-1" y="0.6125" width="2" height="0.0156" fill="url(#r129)"/>
<rect x="-1" y="0.6250" width="2" height="0.0156" fill="url(#r130)"/>
<rect x="-1" y="0.6375" width="2" height="0.0156" fill="url(#r131)"/>
<rect x="-1" y="0.6500" width="2" height="0.0156" fill="url(#r132)"/>
<rect x="-1" y="0.6625" width="2" height="0.0156" fill="url(#r133)"/>
<rect x="-1" y="0.6750" width="2" height="0.0156" fill="url(#r134)"/>
<rect x="-1" y="0.6875" width="2" height="0.0156" fill="url(#r135)"/>
<rect x="-1" y="0.7000" width="2" height="0.0156" fill="url(#r136)"/>
<rect x="-1" y="0.7125" width="2" height="0.0156" fill="url(#r137)"/>
<rect x="-1" y="0.7250" width="2" height="0.0156" fill="url(#r138)"/>
<rect x="-1" y="0.7375" width="2" height="0.0156" fill="url(#r139)"/>
<rect x="-1" y="0.7500" width="2" height="0.0156" fill="url(#r140)"/>
<rect x="-1" y="0.7625" width="2" height="0.0156" fill="url(#r141)"/>
<rect x="-1" y="0.7750" width="2" height="0.0156" fill="url(#r142)"/>
<rect x="-1" y="0.7875" width="2" height="0.0156" fill="url(#r143)"/>
<rect x="-1" y="0.8000" width="2" height="0.0156" fill="url(#r144)"/>
<rect x="-1" y="0.8125" width="2" height="0.0156" fill="url(#r145)"/>
<rect x="-1" y="0.8250" width="2" height="0.0156" fill="url(#r146)"/>
<rect x="-1" y="0.8375" width="2" height="0.0156" fill="url(#r147)"/>
<rect x="-1" y="0.8500" width="2" height="0.0156" fill="url(#r148)"/>
<rect x="-1" y="0.8625" width="2" height="0.0156" fill="url(#r149)"/>
<rect x="-1" y="0.8750" width="2" height="0.0156" fill="url(#r150)"/>
<rect x="-1" y="0.8875" width="2" height="0.0156" fill="url(#r151)"/>
<rect x="-1" y="0.9000" width="2" height="0.0156" fill="url(#r152)"/>
<rect x="-1" y="0.9125" width="2" height="0.0156" fill="url(#r153)"/>
<rect x="-1" y="0.9250" width="2" height="0.0156" fill="url(#r154)"/>
<rect x="-1" y="0.9375" width="2" height="0.0156" fill="url(#r155)"/>
<rect x="-1" y="0.9500" width="2" height="0.0156" fill="url(#r156)"/>
<rect x="-1" y="0.9625" width="2" height="0.0156" fill="url(#r157)"/>
<rect x="-1" y="0.9750" width="2" height="0.0156" fill="url(#r158)"/>
<rect x="-1" y="0.9875" width="2" height="0.0156" fill="url(#r159)"/>
</g></g>
<line x1="47.6" y1="521.9" x2="530.8" y2="103.0" class="dy"/><line x1="78.5" y1="530.7" x2="561.8" y2="112.0" class="dy"/><line x1="140.5" y1="548.1" x2="623.6" y2="130.0" class="dy"/><line x1="171.5" y1="556.8" x2="654.5" y2="139.1" class="dy"/><line x1="109.5" y1="539.4" x2="351.1" y2="330.2" class="dM" style="opacity:.75"/><line x1="32.1" y1="505.9" x2="207.1" y2="555.3" class="dx"/><line x1="50.0" y1="490.5" x2="224.9" y2="539.9" class="dx"/><line x1="67.8" y1="475.0" x2="242.7" y2="524.5" class="dx"/><line x1="85.6" y1="459.6" x2="260.5" y2="509.1" class="dM"/><line x1="103.4" y1="444.2" x2="278.3" y2="493.7" class="dx"/><line x1="121.2" y1="428.7" x2="296.1" y2="478.4" class="dx"/><line x1="139.0" y1="413.3" x2="313.9" y2="463.0" class="dx"/><line x1="156.8" y1="397.8" x2="331.7" y2="447.6" class="dx"/><line x1="174.6" y1="382.4" x2="349.5" y2="432.2" class="dx"/><line x1="192.4" y1="366.9" x2="367.3" y2="416.8" class="dx"/><line x1="210.2" y1="351.5" x2="385.1" y2="401.4" class="dx"/><line x1="228.1" y1="336.0" x2="402.9" y2="386.1" class="dx"/><line x1="245.9" y1="320.6" x2="420.7" y2="370.7" class="dx"/><line x1="263.7" y1="305.1" x2="438.5" y2="355.3" class="dM"/><line x1="281.5" y1="289.7" x2="456.3" y2="339.9" class="dx"/><line x1="299.3" y1="274.2" x2="474.1" y2="324.5" class="dx"/><line x1="317.1" y1="258.8" x2="491.9" y2="309.1" class="dx"/><line x1="334.9" y1="243.3" x2="509.7" y2="293.7" class="dx"/><line x1="352.7" y1="227.9" x2="527.5" y2="278.4" class="dx"/><line x1="370.5" y1="212.4" x2="545.3" y2="263.0" class="dx"/><line x1="388.3" y1="197.0" x2="563.1" y2="247.6" class="dx"/><line x1="406.1" y1="181.5" x2="580.9" y2="232.2" class="dx"/><line x1="424.0" y1="166.1" x2="598.7" y2="216.8" class="dx"/><line x1="441.8" y1="150.6" x2="616.5" y2="201.4" class="dM"/><line x1="459.6" y1="135.2" x2="634.3" y2="186.0" class="dx"/><line x1="477.4" y1="119.7" x2="652.1" y2="170.7" class="dx"/><line x1="495.2" y1="104.3" x2="669.9" y2="155.3" class="dx"/>
</g>
<polygon points="22.0,514.7 197.0,564.0 680.0,146.5 505.3,95.5" fill="none" stroke="#a838d8" stroke-width="1.2"/>
<line x1="351.1" y1="330.2" x2="592.7" y2="121.0" class="gr" style="stroke-width:1.1"/>
<line x1="592.7" y1="121.0" x2="882.6" y2="-130.0" class="gr"/>
<line x1="351.1" y1="330.2" x2="438.5" y2="355.3" class="rd" style="stroke-width:1.3"/>
<line x1="438.5" y1="355.3" x2="893.2" y2="485.7" class="rd"/>
<g>
<line x1="109.5" y1="479.5" x2="592.7" y2="61.5" class="pu tB"/>
<line x1="109.5" y1="479.5" x2="109.5" y2="599.3" class="pu"/>
<line x1="592.7" y1="61.5" x2="592.7" y2="121.0" class="pu"/>
<line x1="263.7" y1="245.4" x2="438.5" y2="295.6" class="pu"/>
<line x1="263.7" y1="245.4" x2="263.7" y2="305.1" class="pu"/>
<line x1="438.5" y1="295.6" x2="438.5" y2="415.0" class="pu"/>
<line x1="351.1" y1="270.5" x2="351.1" y2="330.2" class="pu"/>
<line x1="22.0" y1="454.8" x2="197.0" y2="504.1" class="bl"/>
<line x1="197.0" y1="504.1" x2="680.0" y2="87.0" class="bl tB"/>
<line x1="680.0" y1="87.0" x2="505.3" y2="36.0" class="bl"/>
<line x1="505.3" y1="36.0" x2="22.0" y2="454.8" class="bl tB"/>
<line x1="22.0" y1="454.8" x2="22.0" y2="574.6" class="bl"/>
<line x1="197.0" y1="504.1" x2="197.0" y2="623.9" class="bl"/>
<line x1="680.0" y1="87.0" x2="680.0" y2="206.0" class="bl"/>
<line x1="505.3" y1="36.0" x2="505.3" y2="95.5" class="bl"/>
<line x1="22.0" y1="574.6" x2="197.0" y2="623.9" class="bl"/>
<line x1="197.0" y1="623.9" x2="680.0" y2="206.0" class="bl tB" stroke-dasharray="22.36 1.2" stroke-dashoffset="12.6"/>
</g>
<g stroke="#ff8000" stroke-width="1" fill="none">
<polyline points="117.4,468.4 117.4,441 227.8,473.2 227.8,500.6"/>
<polyline points="117.4,441 170.7,483.7 227.4,474"/>
</g>
<polygon fill="#ff8000" points="172.7,477.2 178.5,471.4 178.5,467.7 181.3,465.6 186,465.2 189,466.1 190.9,472.6 190.9,475.4 183.5,482.5 178.5,485.3 177,482.2 172.7,478.2"/>
<polygon fill="#ff8000" points="186.6,465.5 194.6,463.7 198.3,463.3 197.1,466.1 195.5,470.1 193.9,473.5 193.7,475.7 192.8,473.5 191.8,470.5 189.7,468.3 187.2,467.4"/>
<path d="M69.5,506.5 l7,3.2 M177.5,538 l7,3.2" stroke="#ff9a30" stroke-width="2.6"/>
<g>
<rect x="714.5" y="21.5" width="140" height="340" fill="#f4f4f4" stroke="#000" stroke-width="1"/>
<path d="M714.5,46.5h140M714.5,72.5h140M714.5,268.5h140" stroke="#000" stroke-width="1"/>
<linearGradient id="cb" x1="0" y1="1" x2="0" y2="0"><stop offset="0.000" stop-color="#000008"/><stop offset="0.070" stop-color="#000040"/><stop offset="0.135" stop-color="#080080"/><stop offset="0.205" stop-color="#1000c0"/><stop offset="0.280" stop-color="#2000f0"/><stop offset="0.348" stop-color="#5000ff"/><stop offset="0.424" stop-color="#9010f0"/><stop offset="0.522" stop-color="#c828d8"/><stop offset="0.620" stop-color="#ff60a0"/><stop offset="0.726" stop-color="#ffa060"/><stop offset="0.824" stop-color="#ffc830"/><stop offset="0.903" stop-color="#fff010"/><stop offset="0.960" stop-color="#fffbc0"/><stop offset="1.000" stop-color="#ffffff"/></linearGradient>
<rect x="729" y="83" width="21" height="169.7" fill="url(#cb)"/>
<g class="t">
<text x="729" y="37.7" textLength="68.9">HMagTotal</text>
<text x="729" y="63.9" textLength="79.9">Type: Linear</text>
<text x="761.3" y="90.3">5.64</text>
<text x="761.3" y="107.2">5.07</text>
<text x="761.3" y="124.1">4.51</text>
<text x="761.3" y="140.9">3.95</text>
<text x="761.3" y="157.8">3.38</text>
<text x="761.3" y="174.7">2.82</text>
<text x="761.3" y="191.6">2.26</text>
<text x="761.3" y="208.5">1.69</text>
<text x="761.3" y="225.3">1.13</text>
<text x="761.3" y="242.2">0.564</text>
<text x="761.3" y="259.1">0</text>
<text x="729.3" y="284.6" textLength="61.1">Max: 5.64</text>
<text x="729.3" y="301.6" textLength="37.1">Min: 0</text>
<text x="729.3" y="318.6" textLength="66.4">Units: A/m</text>
<text x="729.3" y="335.6" textLength="78.4">Mean: 0.959</text>
<text x="729.3" y="352.6" textLength="65.6">STD: 1.32</text>
</g></g>
</svg>
</body></html>
